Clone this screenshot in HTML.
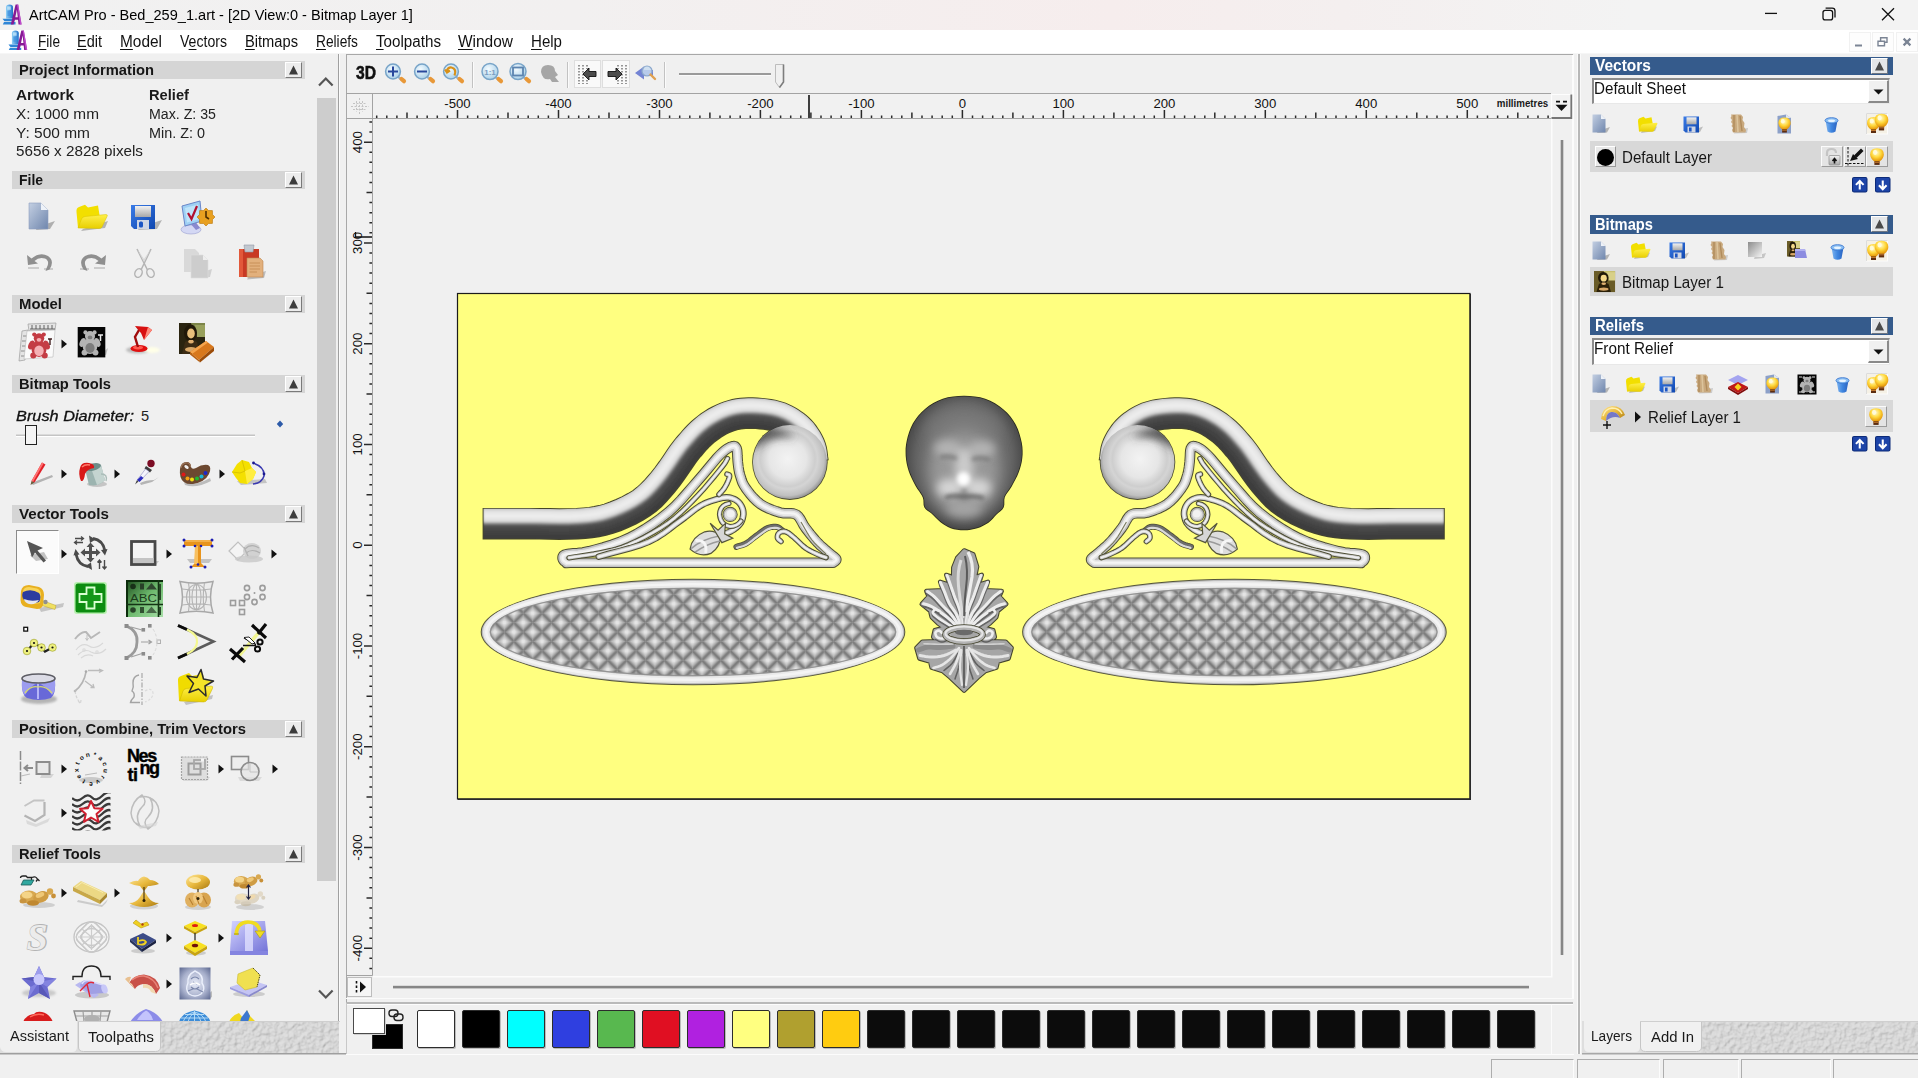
<!DOCTYPE html>
<html lang="en"><head><meta charset="utf-8"><title>ArtCAM Pro - Bed_259_1.art</title>
<style>
html,body{margin:0;padding:0;background:#f0f0f0;}
body{width:1918px;height:1078px;overflow:hidden;font-family:"Liberation Sans",sans-serif;}
#app{position:relative;width:1918px;height:1078px;overflow:hidden;background:#f0f0f0;}
.b{position:absolute;box-sizing:border-box;}
.t{position:absolute;white-space:nowrap;transform-origin:0 50%;}
svg{position:absolute;overflow:visible;}
u{text-decoration:underline;text-underline-offset:2px;}

</style></head>
<body>
<div id="app">
<div class="b" style="left:0px;top:0px;width:1918px;height:30px;background:linear-gradient(90deg,#f1f1f1 0%,#f2f0f0 30%,#f6eded 58%,#f4efef 70%,#f3f3f3 85%,#f3f3f3 100%);"></div>
<svg style="left:2px;top:3.5px" width="20.0" height="21.0" viewBox="0 0 20 21">
<defs><linearGradient id="lgb2" x1="0" y1="0" x2="1" y2="0"><stop offset="0" stop-color="#8fd0f6"/><stop offset="1" stop-color="#1f6fc8"/></linearGradient></defs>
<path d="M4 3.200Q4 0.500 7.500 0.500Q11 0.500 11 3.200V14.500H4Z" fill="url(#lgb2)"/>
<rect x="5.200" y="2.400" width="3.600" height="3.400" fill="#cdeefc" opacity=".75"/>
<rect x="5.500" y="7" width="4" height="5" fill="#3a8ee0" opacity=".6"/>
<path d="M0.500 14.800H12.500V17.300H2.500ZM2 18H13.500V20.500H0.800Z" fill="#2f86d6"/>
<path d="M13.600 0.500H16.200L19.600 20.400H16.500L16 15.800H12.800L11.600 20.400H8.800ZM13.300 13.200H15.800L14.900 5.500Z" fill="#861a94" fill-rule="evenodd"/>
<path d="M15 0.700L16.200 0.500L19.600 20.400H18Z" fill="#d25adc" opacity=".75"/>
</svg>
<span class="t " style="left:29px;top:6.81px;font-size:14.8px;line-height:17.02px;color:#000;transform:scaleX(0.9834);">ArtCAM Pro - Bed_259_1.art - [2D View:0 - Bitmap Layer 1]</span>
<svg style="left:1750px;top:0" width="168" height="30" viewBox="0 0 168 30" fill="none" stroke="#111" stroke-width="1.3">
<path d="M15 13.4H27"/>
<rect x="73" y="10.3" width="9.6" height="9.6" rx="2.2"/><path d="M75.6 8.1H82.2Q85 8.1 85 10.9V17.4"/>
<path d="M132 8.2L144 20.2M144 8.2L132 20.2"/></svg>
<div class="b" style="left:0px;top:30px;width:1918px;height:23px;background:#fff;"></div>
<div class="b" style="left:0px;top:53px;width:1918px;height:1px;background:#f6f6f6;"></div>
<svg style="left:8px;top:30px" width="19.6" height="20.6" viewBox="0 0 20 21">
<defs><linearGradient id="lgb8" x1="0" y1="0" x2="1" y2="0"><stop offset="0" stop-color="#8fd0f6"/><stop offset="1" stop-color="#1f6fc8"/></linearGradient></defs>
<path d="M4 3.200Q4 0.500 7.500 0.500Q11 0.500 11 3.200V14.500H4Z" fill="url(#lgb8)"/>
<rect x="5.200" y="2.400" width="3.600" height="3.400" fill="#cdeefc" opacity=".75"/>
<rect x="5.500" y="7" width="4" height="5" fill="#3a8ee0" opacity=".6"/>
<path d="M0.500 14.800H12.500V17.300H2.500ZM2 18H13.500V20.500H0.800Z" fill="#2f86d6"/>
<path d="M13.600 0.500H16.200L19.600 20.400H16.500L16 15.800H12.800L11.600 20.400H8.800ZM13.300 13.200H15.800L14.900 5.500Z" fill="#861a94" fill-rule="evenodd"/>
<path d="M15 0.700L16.200 0.500L19.600 20.400H18Z" fill="#d25adc" opacity=".75"/>
</svg>
<span class="t" style="left:38px;top:32.98px;font-size:15.6px;line-height:18px;color:#111;transform:scaleX(0.8752)"><u>F</u>ile</span>
<span class="t" style="left:77px;top:32.98px;font-size:15.6px;line-height:18px;color:#111;transform:scaleX(0.9300)"><u>E</u>dit</span>
<span class="t" style="left:120px;top:32.98px;font-size:15.6px;line-height:18px;color:#111;transform:scaleX(0.9885)"><u>M</u>odel</span>
<span class="t" style="left:180px;top:32.98px;font-size:15.6px;line-height:18px;color:#111;transform:scaleX(0.9034)">V<u>e</u>ctors</span>
<span class="t" style="left:245px;top:32.98px;font-size:15.6px;line-height:18px;color:#111;transform:scaleX(0.9405)"><u>B</u>itmaps</span>
<span class="t" style="left:316px;top:32.98px;font-size:15.6px;line-height:18px;color:#111;transform:scaleX(0.8808)"><u>R</u>eliefs</span>
<span class="t" style="left:376px;top:32.98px;font-size:15.6px;line-height:18px;color:#111;transform:scaleX(0.9733)"><u>T</u>oolpaths</span>
<span class="t" style="left:458px;top:32.98px;font-size:15.6px;line-height:18px;color:#111;transform:scaleX(0.9913)"><u>W</u>indow</span>
<span class="t" style="left:531px;top:32.98px;font-size:15.6px;line-height:18px;color:#111;transform:scaleX(0.9662)"><u>H</u>elp</span>
<div class="b" style="left:1849px;top:32px;width:22px;height:20px;background:#fdfdfd;border:1px solid #f1f1f1;"></div>
<div class="b" style="left:1872px;top:32px;width:22px;height:20px;background:#fdfdfd;border:1px solid #f1f1f1;"></div>
<div class="b" style="left:1896px;top:32px;width:22px;height:20px;background:#fdfdfd;border:1px solid #f1f1f1;"></div>
<svg style="left:1849px;top:32px" width="69" height="20" viewBox="0 0 69 20" fill="none" stroke="#7b8494" stroke-width="1.6">
<path d="M6 13.5H13" stroke-width="2"/>
<path d="M29 9.2h6.5v4.6H29zM31.6 8.6V5.8h6.4v4.4h-2" stroke-width="1.4"/>
<path d="M54.6 6.6L61.4 13.4M61.4 6.6L54.6 13.4" stroke-width="2.2"/></svg>
<div class="b" style="left:0px;top:1054px;width:1918px;height:24px;background:#f0f0f0;"></div>
<div class="b" style="left:1491px;top:1058.6px;width:83px;height:22px;border-left:1.3px solid #adadad;border-top:1.3px solid #adadad;border-right:1.3px solid #fcfcfc;"></div>
<div class="b" style="left:1577px;top:1058.6px;width:83px;height:22px;border-left:1.3px solid #adadad;border-top:1.3px solid #adadad;border-right:1.3px solid #fcfcfc;"></div>
<div class="b" style="left:1662.5px;top:1058.6px;width:76px;height:22px;border-left:1.3px solid #adadad;border-top:1.3px solid #adadad;border-right:1.3px solid #fcfcfc;"></div>
<div class="b" style="left:1741px;top:1058.6px;width:90px;height:22px;border-left:1.3px solid #adadad;border-top:1.3px solid #adadad;border-right:1.3px solid #fcfcfc;"></div>
<div class="b" style="left:1833px;top:1058.6px;width:90px;height:22px;border-left:1.3px solid #adadad;border-top:1.3px solid #adadad;border-right:1.3px solid #fcfcfc;"></div>
<div class="b" style="left:0px;top:54px;width:339px;height:1000px;background:#f0f0f0;"></div>
<div class="b" style="left:338px;top:54px;width:1px;height:968px;background:#a0a0a0;"></div>
<div class="b" style="left:339px;top:54px;width:1px;height:968px;background:#fbfbfb;"></div>
<div class="b" style="left:12px;top:61px;width:293px;height:18px;background:#d5d5d5;"></div>
<div class="b" style="left:285px;top:62px;width:17px;height:16px;background:#ececec;border-top:1px solid #fff;border-left:1px solid #fff;border-right:1px solid #7a7a7a;border-bottom:1px solid #7a7a7a;"></div>
<svg style="left:288px;top:65px" width="11" height="10" viewBox="0 0 11 10"><path d="M5.5 0.5L10 9.5H1Z" fill="#3c3c3c"/></svg>
<span class="t " style="left:19px;top:60.83px;font-size:15px;line-height:17.25px;color:#161616;font-weight:bold;transform:scaleX(0.9817);">Project Information</span>
<div class="b" style="left:12px;top:171px;width:293px;height:18px;background:#d5d5d5;"></div>
<div class="b" style="left:285px;top:172px;width:17px;height:16px;background:#ececec;border-top:1px solid #fff;border-left:1px solid #fff;border-right:1px solid #7a7a7a;border-bottom:1px solid #7a7a7a;"></div>
<svg style="left:288px;top:175px" width="11" height="10" viewBox="0 0 11 10"><path d="M5.5 0.5L10 9.5H1Z" fill="#3c3c3c"/></svg>
<span class="t " style="left:19px;top:170.83px;font-size:15px;line-height:17.25px;color:#161616;font-weight:bold;transform:scaleX(0.9288);">File</span>
<div class="b" style="left:12px;top:295px;width:293px;height:18px;background:#d5d5d5;"></div>
<div class="b" style="left:285px;top:296px;width:17px;height:16px;background:#ececec;border-top:1px solid #fff;border-left:1px solid #fff;border-right:1px solid #7a7a7a;border-bottom:1px solid #7a7a7a;"></div>
<svg style="left:288px;top:299px" width="11" height="10" viewBox="0 0 11 10"><path d="M5.5 0.5L10 9.5H1Z" fill="#3c3c3c"/></svg>
<span class="t " style="left:19px;top:294.82px;font-size:15px;line-height:17.25px;color:#161616;font-weight:bold;transform:scaleX(0.9924);">Model</span>
<div class="b" style="left:12px;top:375px;width:293px;height:18px;background:#d5d5d5;"></div>
<div class="b" style="left:285px;top:376px;width:17px;height:16px;background:#ececec;border-top:1px solid #fff;border-left:1px solid #fff;border-right:1px solid #7a7a7a;border-bottom:1px solid #7a7a7a;"></div>
<svg style="left:288px;top:379px" width="11" height="10" viewBox="0 0 11 10"><path d="M5.5 0.5L10 9.5H1Z" fill="#3c3c3c"/></svg>
<span class="t " style="left:19px;top:374.82px;font-size:15px;line-height:17.25px;color:#161616;font-weight:bold;transform:scaleX(0.9799);">Bitmap Tools</span>
<div class="b" style="left:12px;top:505px;width:293px;height:18px;background:#d5d5d5;"></div>
<div class="b" style="left:285px;top:506px;width:17px;height:16px;background:#ececec;border-top:1px solid #fff;border-left:1px solid #fff;border-right:1px solid #7a7a7a;border-bottom:1px solid #7a7a7a;"></div>
<svg style="left:288px;top:509px" width="11" height="10" viewBox="0 0 11 10"><path d="M5.5 0.5L10 9.5H1Z" fill="#3c3c3c"/></svg>
<span class="t " style="left:19px;top:504.82px;font-size:15px;line-height:17.25px;color:#161616;font-weight:bold;transform:scaleX(1.0122);">Vector Tools</span>
<div class="b" style="left:12px;top:720px;width:293px;height:18px;background:#d5d5d5;"></div>
<div class="b" style="left:285px;top:721px;width:17px;height:16px;background:#ececec;border-top:1px solid #fff;border-left:1px solid #fff;border-right:1px solid #7a7a7a;border-bottom:1px solid #7a7a7a;"></div>
<svg style="left:288px;top:724px" width="11" height="10" viewBox="0 0 11 10"><path d="M5.5 0.5L10 9.5H1Z" fill="#3c3c3c"/></svg>
<span class="t " style="left:19px;top:719.82px;font-size:15px;line-height:17.25px;color:#161616;font-weight:bold;transform:scaleX(0.9867);">Position, Combine, Trim Vectors</span>
<div class="b" style="left:12px;top:845px;width:293px;height:18px;background:#d5d5d5;"></div>
<div class="b" style="left:285px;top:846px;width:17px;height:16px;background:#ececec;border-top:1px solid #fff;border-left:1px solid #fff;border-right:1px solid #7a7a7a;border-bottom:1px solid #7a7a7a;"></div>
<svg style="left:288px;top:849px" width="11" height="10" viewBox="0 0 11 10"><path d="M5.5 0.5L10 9.5H1Z" fill="#3c3c3c"/></svg>
<span class="t " style="left:19px;top:844.82px;font-size:15px;line-height:17.25px;color:#161616;font-weight:bold;transform:scaleX(0.9773);">Relief Tools</span>
<span class="t " style="left:16px;top:86.24px;font-size:15.2px;line-height:17.48px;color:#1a1a1a;font-weight:bold;transform:scaleX(1.0099);">Artwork</span>
<span class="t " style="left:149px;top:86.24px;font-size:15.2px;line-height:17.48px;color:#1a1a1a;font-weight:bold;transform:scaleX(0.9664);">Relief</span>
<span class="t " style="left:16px;top:104.85px;font-size:15.3px;line-height:17.59px;color:#222;transform:scaleX(1.0062);">X: 1000 mm</span>
<span class="t " style="left:149px;top:104.85px;font-size:15.3px;line-height:17.59px;color:#222;transform:scaleX(0.9271);">Max. Z: 35</span>
<span class="t " style="left:16px;top:123.65px;font-size:15.3px;line-height:17.59px;color:#222;transform:scaleX(1.0119);">Y: 500 mm</span>
<span class="t " style="left:149px;top:123.65px;font-size:15.3px;line-height:17.59px;color:#222;transform:scaleX(0.9410);">Min. Z: 0</span>
<span class="t " style="left:16px;top:142.45px;font-size:15.3px;line-height:17.59px;color:#222;transform:scaleX(0.9953);">5656 x 2828 pixels</span>
<span class="t " style="left:16px;top:407.79px;font-size:14.6px;line-height:16.79px;color:#111;font-style:italic;transform:scaleX(1.1187);-webkit-text-stroke:0.3px #111;">Brush Diameter:</span>
<span class="t " style="left:141px;top:407.79px;font-size:14.6px;line-height:16.79px;color:#222;">5</span>
<div class="b" style="left:16px;top:434px;width:239px;height:3px;background:#c4c4c4;border-bottom:1px solid #fff;border-top:1px solid #dadada;"></div>
<div class="b" style="left:25px;top:425px;width:12px;height:20px;background:#f4f4f4;border:1.5px solid #222;"></div>
<svg style="left:276px;top:420px" width="8" height="8" viewBox="0 0 8 8"><path d="M4 0.5L7.2 4L4 7.5L0.8 4Z" fill="#2c5aa8"/></svg>
<div class="b" style="left:316px;top:62px;width:21px;height:950px;background:#f0f0f0;"></div>
<div class="b" style="left:316.5px;top:98px;width:19px;height:783px;background:#cdcdcd;"></div>
<svg style="left:316px;top:74px" width="20" height="16" viewBox="0 0 20 16" fill="none" stroke="#555" stroke-width="2.2"><path d="M3 11.5L9.8 4.5L16.6 11.5"/></svg>
<svg style="left:316px;top:986px" width="20" height="16" viewBox="0 0 20 16" fill="none" stroke="#555" stroke-width="2.2"><path d="M3 4.5L9.8 11.5L16.6 4.5"/></svg>
<svg width="0" height="0" style="left:0;top:0"><defs>
<linearGradient id="gDoc" x1="0" y1="0" x2="1" y2="1"><stop offset="0" stop-color="#c3cfe2"/><stop offset="1" stop-color="#6f86ad"/></linearGradient>
<linearGradient id="gFold" x1="0" y1="0" x2="0" y2="1"><stop offset="0" stop-color="#fff04a"/><stop offset="1" stop-color="#e8cf00"/></linearGradient>
<linearGradient id="gSave" x1="0" y1="0" x2="1" y2="1"><stop offset="0" stop-color="#3a7be6"/><stop offset="1" stop-color="#0f47b0"/></linearGradient>
<linearGradient id="gGrey" x1="0" y1="0" x2="0" y2="1"><stop offset="0" stop-color="#f2f2f2"/><stop offset="1" stop-color="#a8a8a8"/></linearGradient>
<linearGradient id="gGold" x1="0" y1="0" x2="1" y2="1"><stop offset="0" stop-color="#ffe9a0"/><stop offset="0.5" stop-color="#e8b83c"/><stop offset="1" stop-color="#a87810"/></linearGradient>
<linearGradient id="gLav" x1="0" y1="0" x2="1" y2="1"><stop offset="0" stop-color="#d4d4ff"/><stop offset="1" stop-color="#7474d8"/></linearGradient>
<radialGradient id="gBulb" cx="0.45" cy="0.35" r="0.7"><stop offset="0" stop-color="#fffbd0"/><stop offset="0.5" stop-color="#ffd83c"/><stop offset="1" stop-color="#e08a00"/></radialGradient>
<radialGradient id="gLens" cx="0.4" cy="0.35" r="0.7"><stop offset="0" stop-color="#f4fbff"/><stop offset="1" stop-color="#a8cfe8"/></radialGradient>
<linearGradient id="gBin" x1="0" y1="0" x2="1" y2="0"><stop offset="0" stop-color="#7db4f0"/><stop offset="0.5" stop-color="#3f86e0"/><stop offset="1" stop-color="#2a62c0"/></linearGradient>
<filter id="fS" x="-30%" y="-30%" width="160%" height="160%"><feGaussianBlur stdDeviation="0.5"/></filter>
<filter id="fS1" x="-30%" y="-30%" width="160%" height="160%"><feGaussianBlur stdDeviation="1"/></filter>
</defs></svg><svg style="left:28px;top:202px" width="28" height="29" viewBox="0 0 28 29"><g transform="scale(1.0)"><path d="M9 25L27 19L22 27L8 28Z" fill="#9a9a9a" opacity=".75" filter="url(#fS)"/><path d="M1 1H13L20 8V27H1Z" fill="url(#gDoc)" stroke="#8fa0bf" stroke-width=".6"/><path d="M13 1L20 8H13Z" fill="#eef2f8"/></g></svg><svg style="left:75px;top:204px" width="34" height="28" viewBox="0 0 34 28"><g transform="scale(1.0)"><path d="M8 25L33 17L30 24L6 27Z" fill="#9a9a9a" opacity=".7" filter="url(#fS)"/><path d="M1.500 8Q1 4 4 3L10 0.800L13 3.500L23 1.500L25 14L3 24Z" fill="#f2df00"/><path d="M3 24L6.500 15Q7 13 10 12.500L31 10.500Q33 10.500 32 12.500L27 23Q26 24.500 24 24.500Z" fill="url(#gFold)" stroke="#d8c200" stroke-width=".5"/></g></svg><svg style="left:130px;top:204px" width="33" height="27" viewBox="0 0 33 27"><g transform="scale(1.0)"><path d="M10 23L32 16L27 25L8 26Z" fill="#9a9a9a" opacity=".7" filter="url(#fS)"/><path d="M1 1H25V25H4L1 22Z" fill="url(#gSave)"/><rect x="5" y="2" width="16" height="11" fill="url(#gGrey)"/><rect x="7" y="16" width="12" height="9" fill="#cfd6e4"/><rect x="9" y="17.500" width="4" height="6" rx="1.5" fill="#1b55c4"/></g></svg><svg style="left:180px;top:200px" width="36" height="35" viewBox="0 0 36 35"><ellipse cx="11" cy="29.500" rx="10" ry="4.500" fill="#d4d8f4" stroke="#9aa0d0" stroke-width=".6"/><path d="M9 22L16 30L20 28L15 21Z" fill="#8a8ad0"/><path d="M2 6L20 1L22 21L5 26Z" fill="#9fd0f4" stroke="#6a86c8" stroke-width="1"/><path d="M5 8L18 4.500L19.500 19L7 22.500Z" fill="#bfe4fa"/><path d="M8 13L11.500 19L17 6" fill="none" stroke="#b01030" stroke-width="2.200"/><g transform="translate(26 17)"><path d="M0 -9L2.500 -6.500L6.400 -6.400L6.500 -2.500L9 0L6.500 2.500L6.400 6.400L2.500 6.500L0 9L-2.500 6.500L-6.400 6.400L-6.500 2.500L-9 0L-6.500 -2.500L-6.400 -6.400L-2.500 -6.500Z" fill="#e8a020" stroke="#b87408" stroke-width=".6"/><path d="M0 -6V0L3 2" stroke="#503000" stroke-width="1.600" fill="none"/></g></svg><svg style="left:26px;top:253px" width="29" height="21" viewBox="0 0 29 21"><g transform=""><path d="M2 15H13M18 16H27" stroke="#c9c9c9" stroke-width="2" opacity=".9"/><path d="M1 2L2 12L12 10.500L8.500 8Q13 3.500 19 5.500Q24 8 21 14L19.500 18L23.500 16.500Q29 8 22 3Q14 -1.500 5.500 5.500Z" fill="#8f8f8f"/></g></svg><svg style="left:78px;top:253px" width="29" height="21" viewBox="0 0 29 21"><g transform="translate(29 0) scale(-1 1)"><path d="M2 15H13M18 16H27" stroke="#c9c9c9" stroke-width="2" opacity=".9"/><path d="M1 2L2 12L12 10.500L8.500 8Q13 3.500 19 5.500Q24 8 21 14L19.500 18L23.500 16.500Q29 8 22 3Q14 -1.500 5.500 5.500Z" fill="#8f8f8f"/></g></svg><svg style="left:132px;top:248px" width="25" height="31" viewBox="0 0 25 31"><g fill="none" stroke="#b4b4b4" stroke-width="1.500"><path d="M5 1L15.500 22M19 1L9 22"/><ellipse cx="6.500" cy="25" rx="3.500" ry="4.500" transform="rotate(25 6.500 25)"/><ellipse cx="18.500" cy="25" rx="3.500" ry="4.500" transform="rotate(-25 18.500 25)"/></g><path d="M5 1L12 14L19 1L12 11Z" fill="#d8d8d8"/></svg><svg style="left:182px;top:247px" width="32" height="32" viewBox="0 0 32 32"><path d="M10 28L30 22L28 30L9 31Z" fill="#c4c4c4" opacity=".7" filter="url(#fS)"/><path d="M2 2H13L17 6V25H2Z" fill="#d9d9d9"/><path d="M9 8H21L26 13V31H9Z" fill="#cdcdcd" stroke="#dedede" stroke-width=".6"/><path d="M21 8L26 13H21Z" fill="#eee"/></svg><svg style="left:237px;top:244px" width="30" height="36" viewBox="0 0 30 36"><path d="M12 32L29 27L27 34L10 35.500Z" fill="#a8a8a8" opacity=".7" filter="url(#fS)"/><path d="M2 5H22V33H2Z" fill="#c83a24"/><path d="M2 5H6V33H2Z" fill="#e2583a"/><path d="M7 1H17L16 8H8Z" fill="#c2c8d0" stroke="#9098a4" stroke-width=".6"/><path d="M10 14H23L26 17V33H10Z" fill="#e2b07c" stroke="#c08850" stroke-width=".6"/><path d="M12.500 19H23M12.500 22H23M12.500 25H23M12.500 28H20" stroke="#c89058" stroke-width="1.200"/></svg><svg style="left:18px;top:322px" width="40" height="40" viewBox="0 0 40 40"><path d="M10 2L38 1L37 8L11 9Z" fill="#e4e4e4" stroke="#9c9c9c" stroke-width=".7"/><path d="M4 9L10 8L7 38L1 39Z" fill="#e4e4e4" stroke="#9c9c9c" stroke-width=".7"/><path d="M12 7H37M14 3V7M18 3V7M22 3V7M26 3V7M30 3V7M34 3V7" stroke="#555" stroke-width=".9"/><path d="M5 14H9M4 19H8M4 24H8M3 29H7M3 34H7" stroke="#777" stroke-width=".8"/><path d="M9 9L37 8L35 35L6 37Z" fill="#fafafa" stroke="#b8b8b8" stroke-width=".6"/><g transform="translate(21 23) scale(.95)"><ellipse cx="0" cy="4" rx="8" ry="8.500" fill="#c43c44"/><circle cx="0" cy="-7" r="5.500" fill="#c43c44"/><circle cx="-5" cy="-11" r="2.200" fill="#c43c44"/><circle cx="5" cy="-11" r="2.200" fill="#c43c44"/><ellipse cx="-8" cy="0" rx="3" ry="5" fill="#c43c44" transform="rotate(25 -8 0)"/><ellipse cx="8" cy="0" rx="3" ry="5" fill="#c43c44" transform="rotate(-25 8 0)"/><circle cx="-6" cy="11" r="3.200" fill="#c43c44"/><circle cx="6" cy="11" r="3.200" fill="#c43c44"/><ellipse cx="0" cy="6" rx="5" ry="5.500" fill="#f4b0b4"/><ellipse cx="0" cy="-5.500" rx="2.500" ry="2" fill="#f4b0b4"/></g><path d="M30 17H34M32 17V23" stroke="#402020" stroke-width="1.400"/></svg><svg style="left:61px;top:338.5px" width="7" height="10" viewBox="0 0 7 10"><path d="M0.5 0.500L6 5L0.500 9.500Z" fill="#111"/></svg><svg style="left:77px;top:327px" width="32" height="32" viewBox="0 0 32 32"><path d="M24 27L31 21L29 28Z" fill="#aaa" opacity=".7"/><rect x="0.700" y="0" width="27.600" height="30.400" fill="#050505"/><g transform="translate(13 15.500) scale(.92)"><ellipse cx="0" cy="4" rx="8" ry="8.500" fill="#b4b4b4"/><circle cx="0" cy="-7" r="5.500" fill="#b4b4b4"/><circle cx="-5" cy="-11" r="2.200" fill="#b4b4b4"/><circle cx="5" cy="-11" r="2.200" fill="#b4b4b4"/><ellipse cx="-8" cy="0" rx="3" ry="5" fill="#b4b4b4" transform="rotate(25 -8 0)"/><ellipse cx="8" cy="0" rx="3" ry="5" fill="#b4b4b4" transform="rotate(-25 8 0)"/><circle cx="-6" cy="11" r="3.200" fill="#b4b4b4"/><circle cx="6" cy="11" r="3.200" fill="#b4b4b4"/><ellipse cx="0" cy="6" rx="5" ry="5.500" fill="#7c7c7c"/><ellipse cx="0" cy="-5.500" rx="2.500" ry="2" fill="#7c7c7c"/></g><path d="M21 8H26M23.500 8V14" stroke="#eee" stroke-width="1.500"/></svg><svg style="left:124px;top:324px" width="38" height="32" viewBox="0 0 38 32"><ellipse cx="14" cy="26" rx="12" ry="3.500" fill="#9a9a9a" opacity=".6" filter="url(#fS1)"/><ellipse cx="28" cy="26" rx="8" ry="3" fill="#ffffe8" filter="url(#fS1)"/><ellipse cx="15" cy="24.500" rx="8.500" ry="3.600" fill="#e01010"/><ellipse cx="14" cy="23.600" rx="5" ry="1.800" fill="#ff5a50"/><path d="M14 23L11 13L15 6" fill="none" stroke="#a00c0c" stroke-width="2.400"/><path d="M11 2L24 3L28 6L20 16L17 9Z" fill="#d81010"/><path d="M24 3L28 6L20 16Z" fill="#ff8a7a"/><path d="M11 2L17 9L14 5Z" fill="#8a0808"/></svg><svg style="left:179px;top:323px" width="37" height="40" viewBox="0 0 37 40"><rect x="0" y="0" width="26" height="31" fill="#2a2410"/><path d="M0 0H26V12Q20 6 14 8L12 0Z" fill="#7c8448"/><path d="M16 2H26V14H18Z" fill="#98a05c"/><ellipse cx="11.500" cy="10" rx="6.500" ry="8.500" fill="#201808"/><ellipse cx="12" cy="10.500" rx="3.800" ry="5" fill="#e8c07c"/><path d="M6 19Q12 15 18 19L21 31H3Z" fill="#3c2c14"/><path d="M9 19Q12 22 15 19L14 17H10Z" fill="#e0b070"/><ellipse cx="12" cy="26.500" rx="6" ry="2.400" fill="#d8a868"/><path d="M11 29L27 18L35 24L20 37Z" fill="#d8781c"/><path d="M11 29L27 18L29 19.500L13 31Z" fill="#f4a44c"/><path d="M20 37L35 24L35 28L21 39.500Z" fill="#9c4c08"/><path d="M11 29L20 37L21 39.500L11 31.500Z" fill="#b86010"/></svg><svg style="left:28px;top:460px" width="27" height="26" viewBox="0 0 27 26"><path d="M3 23L24 15L25 17L5 25Z" fill="#a4a4a4" opacity=".8" filter="url(#fS)"/><path d="M3.500 21L14 2.500L17.500 4.500L6.500 22.500Z" fill="#e02028"/><path d="M14 2.500L15.600 3.400L5 22L3.500 21Z" fill="#ff7070"/><path d="M3.500 21L6.500 22.500L2.500 25Z" fill="#6c5c3c"/></svg><svg style="left:61px;top:468.5px" width="7" height="10" viewBox="0 0 7 10"><path d="M0.5 0.500L6 5L0.500 9.500Z" fill="#111"/></svg><svg style="left:77px;top:460px" width="32" height="29" viewBox="0 0 32 29"><ellipse cx="20" cy="24" rx="10" ry="3" fill="#aaa" opacity=".6" filter="url(#fS)"/><path d="M8 9L24 5L28 20Q22 27 12 25Z" fill="#9cb4b0"/><path d="M14 8L24 5L28 20Q24 24 20 25Z" fill="#c4d4d0"/><ellipse cx="16" cy="7" rx="8.200" ry="3.600" fill="#6c8c88" transform="rotate(-14 16 7)"/><path d="M3 8Q4 2 12 3Q18 4 17 8Q10 9 8 14Q7 22 4 21Q1 14 3 8Z" fill="#d81818"/><path d="M5 7Q8 4 13 5" stroke="#ff7a6a" stroke-width="1.400" fill="none"/><path d="M24 14Q31 14 29 21" fill="none" stroke="#aabcb8" stroke-width="1.300"/></svg><svg style="left:113.5px;top:468.5px" width="7" height="10" viewBox="0 0 7 10"><path d="M0.5 0.500L6 5L0.500 9.500Z" fill="#111"/></svg><svg style="left:132px;top:458px" width="30" height="28" viewBox="0 0 30 28"><path d="M8 25Q14 22 22 22L27 19L20 24L9 27Z" fill="#9c9c9c" opacity=".7" filter="url(#fS)"/><circle cx="19" cy="5.500" r="3.700" fill="#7c0c24"/><path d="M14 8L20 12L18 14.500L12.500 10.500Z" fill="#3c3c3c"/><path d="M13.500 11L17 13.500L8 23L5.500 21.500Z" fill="#f4f4fc" stroke="#8c8cc0" stroke-width=".6"/><path d="M9 18L11.500 20L7.500 24L5 22Z" fill="#2c2cc0"/><path d="M5 22L6.500 23.500L3 26.500Z" fill="#444"/></svg><svg style="left:178px;top:460px" width="34" height="26" viewBox="0 0 34 26"><path d="M6 22Q16 27 32 18L33 21Q18 29 7 25Z" fill="#9a9a9a" opacity=".6" filter="url(#fS)"/><path d="M2 9Q3 1 10 2Q13 3 13 7Q14 10 18 8Q24 4 30 5Q34 7 31 14Q27 22 15 24Q5 25 2.500 17Q1.500 13 2 9Z" fill="#6c4830"/><path d="M3 8Q4 2.500 10 3Q12.500 4 12.500 7" fill="none" stroke="#9c7458" stroke-width="1.200"/><ellipse cx="8.500" cy="7" rx="2.400" ry="1.600" fill="#f0f0f0" transform="rotate(35 8.500 7)"/><circle cx="5.500" cy="14.500" r="2" fill="#e01818"/><circle cx="9.500" cy="18.500" r="2" fill="#f4a010"/><circle cx="14" cy="19.500" r="2" fill="#f0e010"/><circle cx="19" cy="18.500" r="2" fill="#20b830"/><circle cx="23.500" cy="16.500" r="2" fill="#18b8d8"/><circle cx="27.500" cy="13" r="2" fill="#1c28c8"/></svg><svg style="left:219px;top:468.5px" width="7" height="10" viewBox="0 0 7 10"><path d="M0.5 0.500L6 5L0.500 9.500Z" fill="#111"/></svg><svg style="left:231px;top:459px" width="38" height="28" viewBox="0 0 38 28"><path d="M6 22L34 20L36 24L10 26Z" fill="#a8a8a8" opacity=".6" filter="url(#fS)"/><path d="M22 4Q34 8 33 17Q31 24 22 25" fill="none" stroke="#3838b0" stroke-width="1.500"/><circle cx="22.500" cy="4" r="1.400" fill="#181890"/><circle cx="33" cy="15" r="1.400" fill="#181890"/><path d="M1 13L6 5L11 1L18 3L21 9L25 13L22 20L16 25L9 24L5 19Z" fill="#f4e000"/><path d="M14 12L21 9L25 13L22 20L16 25Z" fill="#ffee40"/><path d="M1 13L9 14L14 12L11 1" fill="none" stroke="#d4bc00" stroke-width=".8"/></svg><div class="b" style="left:16px;top:530px;width:43px;height:44px;background:#fbfbfb;border-top:1px solid #8a8a8a;border-left:1px solid #8a8a8a;border-right:1px solid #fff;border-bottom:1px solid #fff;"></div><svg style="left:24px;top:538px" width="28" height="28" viewBox="0 0 28 28"><path d="M6 17L20 14L24 21L12 23Z" fill="#b4b4b4" opacity=".8" filter="url(#fS)"/><path d="M3 3L19 10L13.500 12.500L22 22.500L19.500 24.500L11 14.500L8 19.500Z" fill="#555"/></svg><svg style="left:61px;top:548.5px" width="7" height="10" viewBox="0 0 7 10"><path d="M0.5 0.500L6 5L0.500 9.500Z" fill="#111"/></svg><svg style="left:72px;top:534px" width="37" height="37" viewBox="0 0 37 37"><g fill="none" stroke="#4a4a4a" stroke-width="2.800"><path d="M21 4.500Q31 6 33 17"/><path d="M16 32.500Q6 31 4 20"/></g><path d="M17 1.500L23.500 5.500L18 9Z M33 21.500L35.500 15L29 16Z M20 36L13.500 32L19 28.500Z M3.500 15L1.500 21.500L7.500 20.500Z" fill="#4a4a4a"/><path d="M18.500 8.500L22.500 13H20V17H24V14.500L28.500 18.500L24 22.500V20H20V24H22.500L18.500 28.500L14.500 24H17V20H13V22.500L8.500 18.500L13 14.500V17H17V13H14.500Z" fill="#505050"/><path d="M3 4.500H11M9 2.500L11.500 4.500L9 6.500M11 8.500H3M5 6.500L2.500 8.500L5 10.500" stroke="#4a4a4a" stroke-width="1.300" fill="none"/><path d="M27.500 26V35M25.500 28.500L27.500 26L29.500 28.500M32.500 35V26M30.500 32.500L32.500 35L34.500 32.500" stroke="#4a4a4a" stroke-width="1.400" fill="none"/></svg><svg style="left:129px;top:539px" width="32" height="29" viewBox="0 0 32 29"><path d="M6 22H30L27 26H5Z" fill="#bdbdbd" opacity=".8"/><rect x="2.500" y="2.500" width="23.500" height="23" fill="#f4f4f4" stroke="#484848" stroke-width="2.800"/><rect x="4" y="19" width="20.500" height="5" fill="#c4c4c4"/></svg><svg style="left:166px;top:548.5px" width="7" height="10" viewBox="0 0 7 10"><path d="M0.5 0.500L6 5L0.500 9.500Z" fill="#111"/></svg><svg style="left:181px;top:537px" width="35" height="32" viewBox="0 0 35 32"><path d="M6 22H31L28 26H9Z" fill="#b8b8b8" opacity=".8" filter="url(#fS)"/><path d="M3 3H31V9H20V26L24 30H10L14 26V9H3Z" fill="#e8941c"/><path d="M14 9H17V27H13Z" fill="#f8c060"/><path d="M3 3H31V5H3Z" fill="#f4b048"/><g fill="#1c1cb0"><circle cx="3" cy="3" r="1.500"/><circle cx="31" cy="3" r="1.500"/><circle cx="3" cy="9" r="1.500"/><circle cx="31" cy="9" r="1.500"/><circle cx="14" cy="9" r="1.300"/><circle cx="20" cy="9" r="1.300"/><circle cx="10" cy="30" r="1.500"/><circle cx="24" cy="30" r="1.500"/><circle cx="17" cy="27.500" r="1.300"/></g></svg><svg style="left:227px;top:539px" width="40" height="26" viewBox="0 0 40 26"><path d="M2 12L11 3L20 12L11 21Z" fill="#f4f4f4" stroke="#c0c0c0" stroke-width="1.200"/><ellipse cx="25" cy="12" rx="9" ry="8" fill="#d2d2d2"/><path d="M18 10Q24 4 32 9M19 14Q25 9 33 14" stroke="#b0b0b0" stroke-width="1.200" fill="none"/><ellipse cx="22" cy="20" rx="14" ry="3.500" fill="#c8c8c8" opacity=".8"/><path d="M17 8L21 17" stroke="#b4b4b4" stroke-width="1.400"/></svg><svg style="left:271px;top:548.5px" width="7" height="10" viewBox="0 0 7 10"><path d="M0.5 0.500L6 5L0.500 9.500Z" fill="#111"/></svg><svg style="left:19px;top:583px" width="40" height="31" viewBox="0 0 40 31"><path d="M20 25L45 20L44 24L22 29Z" fill="#aaa" opacity=".6" filter="url(#fS)"/><path d="M22 17L37 22.500L36 26.500L21 22Z" fill="#f0e060" stroke="#b8a030" stroke-width=".5"/><path d="M2 8Q3 2 10 2L20 4Q25 6 25 12L24 22Q23 26 18 26L7 24Q2 23 1.500 17Z" fill="#e8b020"/><path d="M4 8Q5 4 10 4L18 5.500Q22 7 22 12L21 20Q14 22 5 18Z" fill="#f8d458"/><path d="M4 9Q12 5 20 10Q23 14 20 19Q12 22 5 17Q2 13 4 9Z" fill="#2c3ca0"/><path d="M5 16Q12 19 20 17Q17 22 10 21Q6 20 5 16Z" fill="#e8e8f0"/><circle cx="26.500" cy="19" r="2.200" fill="#909090"/></svg><svg style="left:73px;top:581px" width="35" height="34" viewBox="0 0 35 34"><rect x="1" y="1" width="33" height="32" rx="3" fill="#b8f0b0"/><rect x="2.500" y="2.500" width="30" height="29" rx="2.500" fill="#0c8c10"/><path d="M13.500 6.500H21.500V13H28.500V21H21.500V27.500H13.500V21H6.500V13H13.500Z" fill="#149818" stroke="#d8ffd0" stroke-width="1.800"/></svg><svg style="left:126px;top:580px" width="37" height="37" viewBox="0 0 37 37"><defs><linearGradient id="gAbc" x1="0" y1="0" x2="1" y2="1"><stop offset="0" stop-color="#1c4c1c"/><stop offset=".5" stop-color="#6cb86c"/><stop offset="1" stop-color="#a8e0a8"/></linearGradient></defs><rect x="0" y="0" width="37" height="37" fill="url(#gAbc)"/><path d="M0 0H37V2H2V37H0Z" fill="#0c2c0c"/><path d="M0 24.500H37M32.500 0V37" stroke="#143414" stroke-width="1.600"/><circle cx="7" cy="6.500" r="2.800" fill="#183018"/><rect x="14" y="3.500" width="4" height="6" fill="#284028"/><path d="M20 9.500L25.500 3L31 9.500Z" fill="#304830"/><text x="4" y="21.500" font-size="11.500" font-family="Liberation Sans, sans-serif" fill="#1c3c1c" textLength="27" lengthAdjust="spacingAndGlyphs">ABC</text><circle cx="7" cy="30" r="2.800" fill="#284428"/><rect x="14" y="27" width="4" height="6" fill="#305030"/><path d="M20 33L25.500 26.500L31 33Z" fill="#486848"/><path d="M34 4V20M34 27V35" stroke="#284828" stroke-width="2"/></svg><svg style="left:178px;top:580px" width="37" height="35" viewBox="0 0 37 35"><path d="M2 1.500Q18 5 35 1.500Q30 17 35 33Q18 29.500 2 33Q7 17 2 1.500Z" fill="#ececec" stroke="#a8a8a8" stroke-width="1.500"/><g fill="none" stroke="#b4b4b4" stroke-width="1.100"><ellipse cx="18.500" cy="17" rx="10" ry="12.500"/><ellipse cx="18.500" cy="17" rx="4.500" ry="12.500"/><path d="M8.500 17H28.500M10 10H27M10 24H27M4 9Q18 11 33 9M5 17H32M4 25Q18 23 33 25M10.500 3Q13 17 10.500 31M18.500 3.500V30.500M26.500 3Q24 17 26.500 31"/></g></svg><svg style="left:229px;top:583px" width="40" height="34" viewBox="0 0 40 34"><g fill="none" stroke="#9c9c9c" stroke-width="1.600"><rect x="1.500" y="17.500" width="5" height="5"/><rect x="10.500" y="17.500" width="5" height="5"/><rect x="10.500" y="26.500" width="5" height="5"/><circle cx="18" cy="5" r="2.600"/><circle cx="33.500" cy="5" r="2.600"/><circle cx="18" cy="14" r="2.600"/><circle cx="33.500" cy="14" r="2.600"/><circle cx="25.500" cy="19" r="2.600"/></g><circle cx="25.500" cy="10" r="1" fill="#9c9c9c"/></svg><svg style="left:20px;top:626px" width="38" height="30" viewBox="0 0 38 30"><rect x="3.800" y="1.300" width="3.800" height="3.800" fill="#fff" stroke="#111" stroke-width="1.300"/><path d="M7 25L14 17L21.500 21.500L25 25.500L32.500 21.500" fill="none" stroke="#222" stroke-width="2.200"/><g fill="#eef080" stroke="#a4a830" stroke-width=".7"><circle cx="7" cy="25" r="3.800"/><circle cx="14" cy="17" r="3.800"/><circle cx="21.500" cy="21.500" r="3.800"/><circle cx="32.500" cy="21.500" r="3.800"/></g><g fill="#111"><circle cx="7" cy="25" r="1.100"/><circle cx="14" cy="17" r="1.100"/><circle cx="21.500" cy="21.500" r="1.100"/><circle cx="32.500" cy="21.500" r="1.100"/></g></svg><svg style="left:73px;top:630px" width="37" height="30" viewBox="0 0 37 30"><path d="M2 9Q8 1 13 2L18 8L27 2" fill="none" stroke="#b8b8b8" stroke-width="2"/><path d="M14 5V10M12.500 8L14 10.500L15.500 8" stroke="#c0c0c0" stroke-width="1" fill="none"/><g fill="none" stroke="#d8d8d8" stroke-width="1.100"><path d="M3 20Q9 12 16 16Q22 20 30 13"/><path d="M5 25Q12 18 18 22Q26 26 33 19"/><path d="M8 28Q14 23 20 26"/><circle cx="11" cy="20" r="1.200"/><circle cx="24" cy="22" r="1.200"/></g></svg><svg style="left:124px;top:623px" width="40" height="38" viewBox="0 0 40 38"><path d="M2.500 3Q14 8 13 19Q13 30 2.500 35" fill="none" stroke="#9a9a9a" stroke-width="2.800"/><g fill="#8c8c8c"><rect x="0.500" y="1" width="4" height="4"/><rect x="0.500" y="33" width="4" height="4"/><rect x="17.500" y="5" width="3.600" height="3.600"/><rect x="17.500" y="29" width="3.600" height="3.600"/><rect x="24" y="1" width="3.600" height="3.600"/><rect x="24" y="33" width="3.600" height="3.600"/></g><path d="M7 4L18 7M7 34L18 30.500M17 19H27M24.500 17L27.500 19L24.500 21" stroke="#a0a0a0" stroke-width="1.200" fill="none"/><rect x="33" y="17" width="3.500" height="3.500" fill="none" stroke="#b0b0b0"/><path d="M29 6Q37 19 29 32" fill="none" stroke="#d8d8d8" stroke-width="1" stroke-dasharray="3 2"/></svg><svg style="left:176px;top:623px" width="40" height="38" viewBox="0 0 40 38"><path d="M2 2.500L37.500 18.500L2 35" fill="none" stroke="#5c5c5c" stroke-width="2.600" stroke-linejoin="miter"/><path d="M2 2.500L11 6.500M2 35L11 31" stroke="#0c0c0c" stroke-width="3"/><path d="M11 6.500Q22 12 21 19Q21 26 11 31" fill="none" stroke="#f4f890" stroke-width="2.200"/></svg><svg style="left:229px;top:623px" width="40" height="40" viewBox="0 0 40 40"><path d="M10 33L31 8" stroke="#f0f490" stroke-width="3.400"/><path d="M23 2L37 15M37 1L29 11" stroke="#0a0a0a" stroke-width="3.200"/><path d="M1 28L16 41M14 27L3 38.500" stroke="#0a0a0a" stroke-width="3.200" transform="translate(0 -2)"/><path d="M15 15L27 21.500M14 22.500H27" stroke="#111" stroke-width="1.300"/><path d="M15 14.500L20 14L26 20L23 21Z" fill="#fff" stroke="#111" stroke-width=".9"/><g fill="none" stroke="#0a0a0a" stroke-width="2"><circle cx="31" cy="19" r="2.600"/><circle cx="28.500" cy="26" r="2.600"/></g></svg><svg style="left:19px;top:671px" width="40" height="34" viewBox="0 0 40 34"><ellipse cx="20" cy="28" rx="18" ry="5" fill="#9c9c9c" opacity=".7" filter="url(#fS1)"/><path d="M3 9Q2 24 8 27Q20 31 32 27Q37 23 36 9Q20 15 3 9Z" fill="#6868d8"/><path d="M3 9Q2 20 6 24Q12 14 19 12Q26 14 33 24Q37 20 36 9Q20 15 3 9Z" fill="#9c9cf0"/><path d="M19 12V28" stroke="#c8c8ff" stroke-width="1.600"/><path d="M6 22Q12 14 19 16Q26 14 33 22" fill="none" stroke="#d4d870" stroke-width="1.300"/><ellipse cx="19.500" cy="7.500" rx="16.500" ry="4.500" fill="#c8c8dc" fill-opacity=".5" stroke="#5c5c64" stroke-width="1.600"/></svg><svg style="left:72px;top:668px" width="33" height="38" viewBox="0 0 33 38"><path d="M14 4Q12 16 3 23" fill="none" stroke="#b4b4b4" stroke-width="1.600"/><path d="M16 2.500H30M27 1L30.500 2.500L27 4.500M13 13L21 19M18.500 19.500L22 19.500L21 16" stroke="#bcbcbc" stroke-width="1.300" fill="none"/><path d="M3 23Q4 30 8 35M6 33L8.500 35.500L9 32" stroke="#d4d4d4" stroke-width="1.200" fill="none" stroke-dasharray="3 1.500"/><circle cx="14" cy="3.500" r="1.300" fill="#aaa"/><circle cx="3" cy="23" r="1.300" fill="#bbb"/></svg><svg style="left:128px;top:672px" width="30" height="34" viewBox="0 0 30 34"><path d="M14 1V33" stroke="#a8a8a8" stroke-width="1.200" stroke-dasharray="5 1.500 1.500 1.500"/><path d="M11 3Q5 4 5 11Q6 15 4 19Q7 21 6 25Q3 28 2.500 30.500H12" fill="none" stroke="#a4a4a4" stroke-width="1.400"/><path d="M17 19Q24 15 25 21Q25 27 17 30" fill="none" stroke="#dcdcdc" stroke-width="1.200" stroke-dasharray="2.500 1.800"/></svg><svg style="left:176px;top:668px" width="40" height="38" viewBox="0 0 40 38"><path d="M8 34L37 27L36 31L10 37Z" fill="#a4a4a4" opacity=".6" filter="url(#fS)"/><path d="M2 13Q1.500 9 5 8L13 5L16 8L27 6L29 20L3 33Z" fill="#f0dc00"/><path d="M3.500 33L7 23Q7.500 21 10.500 20.500L35 18Q37.500 18 36.500 20.500L31 32Q30 34 27.500 34Z" fill="url(#gFold)" stroke="#c8b000" stroke-width=".5"/><path d="M25 1.500L27.500 11L37.500 13L29 18L30 28L22.500 21L13 24.500L17.500 15.500L11 8L21 9.500Z" fill="#f4e428" stroke="#2c2c2c" stroke-width="1.500" stroke-linejoin="round"/></svg><svg style="left:18px;top:750px" width="36" height="36" viewBox="0 0 36 36"><path d="M24 24H36L33 28H22Z" fill="#c8c8c8" opacity=".7"/><path d="M2.500 1V34" stroke="#8c8c8c" stroke-width="1.500" stroke-dasharray="9 1.500"/><path d="M7 18H15M10 15L6.500 18L10 21" stroke="#8c8c8c" stroke-width="2" fill="none"/><rect x="18.500" y="12" width="13" height="12" fill="#e8e8e8" stroke="#8c8c8c" stroke-width="2"/><path d="M3 26L12 24" stroke="#bcbcbc" stroke-width="1.200"/></svg><svg style="left:61px;top:763.5px" width="7" height="10" viewBox="0 0 7 10"><path d="M0.5 0.500L6 5L0.500 9.500Z" fill="#111"/></svg><svg style="left:72px;top:750px" width="38" height="38" viewBox="0 0 38 38"><ellipse cx="19" cy="30" rx="12" ry="3" fill="#b8b8b8" opacity=".7"/><path d="M13 25L25 23" stroke="#bbb" stroke-width="1"/><text transform="rotate(-150.0 19 19) translate(19 6.500)" font-size="6.500" font-weight="bold" text-anchor="middle" fill="#111" font-family="Liberation Sans, sans-serif">t</text><text transform="rotate(-122.5 19 19) translate(19 6.500)" font-size="6.500" font-weight="bold" text-anchor="middle" fill="#111" font-family="Liberation Sans, sans-serif">e</text><text transform="rotate(-95.0 19 19) translate(19 6.500)" font-size="6.500" font-weight="bold" text-anchor="middle" fill="#111" font-family="Liberation Sans, sans-serif">x</text><text transform="rotate(-67.5 19 19) translate(19 6.500)" font-size="6.500" font-weight="bold" text-anchor="middle" fill="#111" font-family="Liberation Sans, sans-serif">t</text><text transform="rotate(-40.0 19 19) translate(19 6.500)" font-size="6.500" font-weight="bold" text-anchor="middle" fill="#111" font-family="Liberation Sans, sans-serif">o</text><text transform="rotate(-12.5 19 19) translate(19 6.500)" font-size="6.500" font-weight="bold" text-anchor="middle" fill="#111" font-family="Liberation Sans, sans-serif">n</text><text transform="rotate(15.0 19 19) translate(19 6.500)" font-size="6.500" font-weight="bold" text-anchor="middle" fill="#111" font-family="Liberation Sans, sans-serif">*</text><text transform="rotate(42.5 19 19) translate(19 6.500)" font-size="6.500" font-weight="bold" text-anchor="middle" fill="#111" font-family="Liberation Sans, sans-serif">a</text><text transform="rotate(70.0 19 19) translate(19 6.500)" font-size="6.500" font-weight="bold" text-anchor="middle" fill="#111" font-family="Liberation Sans, sans-serif">c</text><text transform="rotate(97.5 19 19) translate(19 6.500)" font-size="6.500" font-weight="bold" text-anchor="middle" fill="#111" font-family="Liberation Sans, sans-serif">u</text><text transform="rotate(125.0 19 19) translate(19 6.500)" font-size="6.500" font-weight="bold" text-anchor="middle" fill="#111" font-family="Liberation Sans, sans-serif">r</text><text transform="rotate(152.5 19 19) translate(19 6.500)" font-size="6.500" font-weight="bold" text-anchor="middle" fill="#111" font-family="Liberation Sans, sans-serif">v</text><text transform="rotate(180.0 19 19) translate(19 6.500)" font-size="6.500" font-weight="bold" text-anchor="middle" fill="#111" font-family="Liberation Sans, sans-serif">e</text></svg><span class="t" style="left:127px;top:747px;font-size:18px;line-height:18px;font-weight:bold;color:#000;letter-spacing:-1.400px;-webkit-text-stroke:0.400px #000;">Nes</span><span class="t" style="left:139.500px;top:758.500px;font-size:18px;line-height:18px;font-weight:bold;color:#000;letter-spacing:-1.400px;-webkit-text-stroke:0.400px #000;">ng</span><span class="t" style="left:127.500px;top:766px;font-size:18px;line-height:18px;font-weight:bold;color:#000;letter-spacing:-0.600px;-webkit-text-stroke:0.400px #000;">ti</span><svg style="left:180px;top:755px" width="32" height="28" viewBox="0 0 32 28"><path d="M4 22H30L27 26H3Z" fill="#cfcfcf" opacity=".7"/><rect x="1.500" y="2" width="26" height="22.500" fill="#dedede" stroke="#a4a4a4" stroke-width="1.200" stroke-dasharray="2 1"/><rect x="8.500" y="8.500" width="12" height="11" fill="none" stroke="#9c9c9c" stroke-width="2"/><rect x="14" y="5" width="11" height="9" fill="none" stroke="#a8a8a8" stroke-width="1.800"/><rect x="21" y="3.500" width="3" height="3" fill="#f4f4f4"/></svg><svg style="left:218px;top:763.5px" width="7" height="10" viewBox="0 0 7 10"><path d="M0.5 0.500L6 5L0.500 9.500Z" fill="#111"/></svg><svg style="left:230px;top:755px" width="33" height="28" viewBox="0 0 33 28"><path d="M8 22H32L29 26H10Z" fill="#d0d0d0" opacity=".7"/><rect x="1.500" y="1.500" width="17" height="13" fill="#ededed" stroke="#8c8c8c" stroke-width="1.600"/><circle cx="20" cy="16.500" r="9" fill="#e4e4e4" fill-opacity=".7" stroke="#8c8c8c" stroke-width="1.600"/><path d="M20 8V17H28" stroke="#c4c4c4" stroke-width="1" fill="none"/></svg><svg style="left:271.5px;top:763.5px" width="7" height="10" viewBox="0 0 7 10"><path d="M0.5 0.500L6 5L0.500 9.500Z" fill="#111"/></svg><svg style="left:22px;top:798px" width="32" height="29" viewBox="0 0 32 29"><path d="M4 22L14 26L28 20L26 24L14 29L5 26Z" fill="#d4d4d4" opacity=".8"/><path d="M2.500 8L12 2.500H22.500" fill="none" stroke="#c4c4c4" stroke-width="1.800"/><path d="M22.500 4V17L13 23L2.500 17.500" fill="none" stroke="#b4b4b4" stroke-width="2.200"/></svg><svg style="left:61px;top:808px" width="7" height="10" viewBox="0 0 7 10"><path d="M0.5 0.500L6 5L0.500 9.500Z" fill="#111"/></svg><svg style="left:72px;top:793px" width="39" height="38" viewBox="0 0 39 38"><defs><clipPath id="cpW"><rect x="0" y="0" width="38.500" height="37.500"/></clipPath></defs><g clip-path="url(#cpW)"><path d="M0 5Q5 10 10.500 5T20 4.5T30 3T40 0" fill="none" stroke="#3a3a3a" stroke-width="2.300"/><path d="M0 11Q5 16 10.500 11T20 10.5T30 9T40 6" fill="none" stroke="#3a3a3a" stroke-width="2.300"/><path d="M0 17Q5 22 10.500 17T20 16.5T30 15T40 12" fill="none" stroke="#3a3a3a" stroke-width="2.300"/><path d="M0 23Q5 28 10.500 23T20 22.5T30 21T40 18" fill="none" stroke="#3a3a3a" stroke-width="2.300"/><path d="M0 29Q5 34 10.500 29T20 28.5T30 27T40 24" fill="none" stroke="#3a3a3a" stroke-width="2.300"/><path d="M0 35Q5 40 10.500 35T20 34.5T30 33T40 30" fill="none" stroke="#3a3a3a" stroke-width="2.300"/><path d="M0 41Q5 46 10.500 41T20 40.5T30 39T40 36" fill="none" stroke="#3a3a3a" stroke-width="2.300"/><path d="M19 8L22.300 15.200L30.500 15.800L24.500 21L26.500 28.800L19 24.500L12 28.800L13.800 21L8 15.800L16 15.200Z" fill="#fdfdfd" stroke="#d02030" stroke-width="2" stroke-linejoin="round"/></g></svg><svg style="left:128px;top:793px" width="34" height="38" viewBox="0 0 34 38"><g fill="none" stroke="#bdbdbd" stroke-width="1.500"><path d="M14 2Q4 8 3 20Q4 30 12 33Q6 22 14 14Q20 9 14 2Z"/><path d="M20 36Q30 30 31 18Q30 8 22 5Q28 16 20 24Q14 29 20 36Z"/><path d="M8 30Q14 36 22 34M26 8Q20 2 12 4"/></g><path d="M10 33L30 29L28 33L12 36Z" fill="#d4d4d4" opacity=".6"/></svg><svg style="left:19px;top:874px" width="40" height="36" viewBox="0 0 40 36"><ellipse cx="20" cy="31" rx="16" ry="3" fill="#b0b0b0" opacity=".5" filter="url(#fS)"/><g transform="translate(0 14)"><ellipse cx="10" cy="9" rx="9" ry="6.500" fill="#d8a850"/><ellipse cx="8" cy="7" rx="5.500" ry="3.500" fill="#f4d488"/><ellipse cx="22" cy="9" rx="8" ry="5.500" fill="#cf9c44" transform="rotate(-22 22 9)"/><ellipse cx="21" cy="7" rx="4.500" ry="2.500" fill="#efc878" transform="rotate(-22 21 7)"/><circle cx="31" cy="3.500" r="3.200" fill="#d8a850"/><circle cx="34.500" cy="8" r="2.400" fill="#c89038"/><ellipse cx="14" cy="15" rx="6" ry="2.800" fill="#c08830"/><ellipse cx="4" cy="13" rx="3.500" ry="2.500" fill="#c89440"/></g><path d="M1.500 4Q1.500 2 4 2H7L8.500 3.500H12.500V6" fill="none" stroke="#222" stroke-width="1.300"/><path d="M2 11L4.500 6H15L12 11Z" fill="#30a8a0" stroke="#1c5c58" stroke-width=".8"/><path d="M13 3.500Q17 1.500 18.500 5.500M17 7.500L18.800 5.200L20.500 7" fill="none" stroke="#222" stroke-width="1.300"/></svg><svg style="left:60.5px;top:887.5px" width="7" height="10" viewBox="0 0 7 10"><path d="M0.5 0.500L6 5L0.500 9.500Z" fill="#111"/></svg><svg style="left:72px;top:880px" width="37" height="26" viewBox="0 0 37 26"><path d="M6 20L30 25L36 19L34 23L30 27L5 22Z" fill="#a8a8a8" opacity=".5" filter="url(#fS)"/><path d="M1 7L9 1L35 13L28 20Z" fill="#ecd884"/><path d="M1 7L28 20L28 24L1 11Z" fill="#c8a848"/><path d="M28 20L35 13V17L28 24Z" fill="#a88830"/><path d="M4 7L10 2.500L31 12.500" fill="none" stroke="#f8ecb0" stroke-width="1"/></svg><svg style="left:113.5px;top:887.5px" width="7" height="10" viewBox="0 0 7 10"><path d="M0.5 0.500L6 5L0.500 9.500Z" fill="#111"/></svg><svg style="left:128px;top:875px" width="33" height="36" viewBox="0 0 33 36"><ellipse cx="16" cy="31" rx="14" ry="3.500" fill="#b4b4b4" opacity=".5" filter="url(#fS)"/><path d="M1 28Q8 28 12 22Q15 17 16 16Q17 17 20 22Q24 28 31 28Q24 32 16 32Q8 32 1 28Z" fill="url(#gGold)"/><path d="M1 8Q7 5 10 6Q12 2 16 1.500Q20 2 22 5Q27 5 31 9Q24 11 20 11Q18 14 16 16Q14 14 12 11Q7 11 1 8Z" fill="url(#gGold)"/><path d="M16 12V26" stroke="#3c2c10" stroke-width="1.100"/><circle cx="16" cy="25.500" r="1.500" fill="#2c2008"/></svg><svg style="left:183px;top:874px" width="30" height="37" viewBox="0 0 30 37"><ellipse cx="15" cy="33" rx="13" ry="3" fill="#b4b4b4" opacity=".5" filter="url(#fS)"/><ellipse cx="15" cy="8" rx="12" ry="7.500" fill="url(#gGold)"/><ellipse cx="12" cy="6" rx="6" ry="3" fill="#fff0b8" opacity=".8"/><path d="M15 15V27" stroke="#3c2c10" stroke-width="1.200"/><ellipse cx="9" cy="26" rx="7" ry="7.500" fill="#e0b060"/><ellipse cx="21" cy="26" rx="7" ry="7.500" fill="#d8a450"/><ellipse cx="15" cy="24" rx="5" ry="6" fill="#f0c880"/><path d="M6 24L10 31M20 22L24 30M13 22L16 30" stroke="#b88030" stroke-width="1.100"/><circle cx="15" cy="24.500" r="1.500" fill="#2c2008"/></svg><svg style="left:233px;top:873px" width="34" height="38" viewBox="0 0 34 38"><ellipse cx="17" cy="34" rx="14" ry="3" fill="#b4b4b4" opacity=".5" filter="url(#fS)"/><g transform="translate(1 18) scale(.85)" opacity=".55"><ellipse cx="10" cy="9" rx="9" ry="6.500" fill="#d8c8a8"/><ellipse cx="8" cy="7" rx="5.500" ry="3.500" fill="#f4d488"/><ellipse cx="22" cy="9" rx="8" ry="5.500" fill="#d0c0a0" transform="rotate(-22 22 9)"/><ellipse cx="21" cy="7" rx="4.500" ry="2.500" fill="#efc878" transform="rotate(-22 21 7)"/><circle cx="31" cy="3.500" r="3.200" fill="#d8c8a8"/><circle cx="34.500" cy="8" r="2.400" fill="#c8b898"/><ellipse cx="14" cy="15" rx="6" ry="2.800" fill="#c0b090"/><ellipse cx="4" cy="13" rx="3.500" ry="2.500" fill="#c8b898"/></g><g transform="translate(0 1) scale(.82)"><ellipse cx="10" cy="9" rx="9" ry="6.500" fill="#d8a850"/><ellipse cx="8" cy="7" rx="5.500" ry="3.500" fill="#f4d488"/><ellipse cx="22" cy="9" rx="8" ry="5.500" fill="#cf9c44" transform="rotate(-22 22 9)"/><ellipse cx="21" cy="7" rx="4.500" ry="2.500" fill="#efc878" transform="rotate(-22 21 7)"/><circle cx="31" cy="3.500" r="3.200" fill="#d8a850"/><circle cx="34.500" cy="8" r="2.400" fill="#c89038"/><ellipse cx="14" cy="15" rx="6" ry="2.800" fill="#c08830"/><ellipse cx="4" cy="13" rx="3.500" ry="2.500" fill="#c89440"/></g><path d="M15.500 12V26M13.500 14.500L15.500 12L17.500 14.500M13.500 23.500L15.500 26L17.500 23.500" stroke="#202040" stroke-width="1.200" fill="none"/></svg><svg style="left:24px;top:921px" width="34" height="34" viewBox="0 0 34 34"><text x="3" y="29" font-size="38" font-style="italic" font-weight="bold" font-family="Liberation Serif, serif" fill="#b4b4b4" stroke="#b4b4b4" stroke-width="1.8">S</text><text x="2.500" y="28.500" font-size="38" font-style="italic" font-weight="bold" font-family="Liberation Serif, serif" fill="#ececec">S</text></svg><svg style="left:73px;top:921px" width="38" height="33" viewBox="0 0 38 33"><ellipse cx="18.500" cy="16" rx="17.500" ry="15" fill="#f4f4f4" stroke="#c4c4c4" stroke-width="1.300"/><g transform="rotate(45 18.500 16)"><rect x="6" y="3.500" width="25" height="25" rx="6" fill="none" stroke="#c9c9c9" stroke-width="1.300"/><rect x="10" y="7.500" width="17" height="17" rx="3" fill="none" stroke="#c9c9c9" stroke-width="1.300"/></g><g transform="rotate(135 18.500 16)"><rect x="6" y="3.500" width="25" height="25" rx="6" fill="none" stroke="#c9c9c9" stroke-width="1.300"/><rect x="10" y="7.500" width="17" height="17" rx="3" fill="none" stroke="#c9c9c9" stroke-width="1.300"/></g><path d="M5 16H32M18.500 3V29M9 8L28 24M28 8L9 24" stroke="#cdcdcd" stroke-width="1.200"/><ellipse cx="18.500" cy="16" rx="10" ry="8.500" fill="none" stroke="#c9c9c9" stroke-width="1.300"/></svg><svg style="left:129px;top:919px" width="30" height="36" viewBox="0 0 30 36"><ellipse cx="14" cy="32" rx="12" ry="2.500" fill="#aaa" opacity=".5" filter="url(#fS)"/><path d="M1 20L14 14L27 21L13 30Z" fill="#3c4c88"/><path d="M1 20L13 30V33L1 23Z" fill="#28345c"/><path d="M13 30L27 21V24L13 33Z" fill="#1c2444"/><path d="M9 18V25Q15 27 17 23Q15 20 10 22" fill="none" stroke="#f0d020" stroke-width="1.800"/><path d="M4 4L7 1L12 5L18 3L20 6L12 9Z" fill="#f0d020" stroke="#b89810" stroke-width=".6"/><circle cx="13.500" cy="5.500" r="1.200" fill="#b04010"/></svg><svg style="left:166px;top:933px" width="7" height="10" viewBox="0 0 7 10"><path d="M0.5 0.500L6 5L0.500 9.500Z" fill="#111"/></svg><svg style="left:183px;top:920px" width="26" height="37" viewBox="0 0 26 37"><ellipse cx="13" cy="33" rx="10" ry="2.500" fill="#aaa" opacity=".5" filter="url(#fS)"/><path d="M1 6L12 1L24 6L12 12Z" fill="#f8e020"/><path d="M1 6L12 12V14.500L1 8.500ZM12 12L24 6V8.500L12 14.500Z" fill="#c8a410"/><ellipse cx="12" cy="5.500" rx="3" ry="1.500" fill="#e02010"/><path d="M12 13V24" stroke="#2c2c2c" stroke-width="1.300"/><path d="M1 26L12 20L24 26L12 33Z" fill="#f8e020"/><path d="M1 26L12 33V36L1 29ZM12 33L24 26V29L12 36Z" fill="#c8a410"/><ellipse cx="12" cy="25.500" rx="3.200" ry="1.800" fill="#701008"/></svg><svg style="left:218px;top:933px" width="7" height="10" viewBox="0 0 7 10"><path d="M0.5 0.500L6 5L0.500 9.500Z" fill="#111"/></svg><svg style="left:229px;top:919px" width="40" height="37" viewBox="0 0 40 37"><path d="M3 2H36L39 32H1Z" fill="url(#gLav)"/><path d="M1 32H39V36H1Z" fill="#8484e0"/><path d="M16 6Q20 3 24 6V32H16Z" fill="#e4e4ff" opacity=".75"/><path d="M7 16Q8 3 19 3Q29 3 31 12" fill="none" stroke="#f0dc20" stroke-width="3.600"/><path d="M26 12H36L31 19Z" fill="#f0dc20" stroke="#a89810" stroke-width=".6"/><path d="M5 15H10" stroke="#a89810" stroke-width="1"/></svg><svg style="left:20px;top:965px" width="38" height="36" viewBox="0 0 38 36"><ellipse cx="19" cy="28" rx="17" ry="4" fill="#a4a4a4" opacity=".5" filter="url(#fS1)"/><path d="M19 1L24 12L36.500 13.500L27.500 22L30 34L19 28L8 34L10.500 22L1.500 13.500L14 12Z" fill="#6c6cd0"/><path d="M19 1L24 12L19 17L14 12Z" fill="#9c9cec"/><path d="M19 17L36.500 13.500L27.500 22ZM19 17L8 34L10.500 22Z" fill="#8484e0"/><path d="M19 17L30 34L19 28ZM19 17L1.500 13.500L14 12Z" fill="#5858b8"/><circle cx="19" cy="14.500" r="5.500" fill="#c8c8fc"/></svg><svg style="left:72px;top:964px" width="40" height="37" viewBox="0 0 40 37"><ellipse cx="20" cy="31" rx="17" ry="3.500" fill="#a4a4a4" opacity=".5" filter="url(#fS)"/><path d="M1 16V12.500H10Q10 2 19.500 2Q29 2 29 12.500H38V16" fill="none" stroke="#222" stroke-width="1.400"/><path d="M3 21L22 34L27 31L8 18Z" fill="#b8b8f0"/><path d="M8 22Q9 15 16 16L32 21Q36 24 33 29L19 30Z" fill="#a0a0e4"/><path d="M10 20Q12 16 16 16.500L31 21" fill="none" stroke="#dcdcfc" stroke-width="1.600"/><ellipse cx="32.500" cy="25" rx="3" ry="4.500" fill="#c8c8f8" transform="rotate(-20 32.500 25)"/><path d="M8 27L15 20Q18 17 22 19M15 20L18 33" fill="none" stroke="#e02838" stroke-width="1.400"/></svg><svg style="left:124px;top:971px" width="38" height="26" viewBox="0 0 38 26"><path d="M5 12Q9 4 20 3.500Q33 5 36 17L32 23Q28 12 19 13Q13 14 11 18Z" fill="#c85048"/><path d="M8 9Q13 4.500 20 5Q30 7 34 17" fill="none" stroke="#e88478" stroke-width="1.600"/><path d="M1 8L5 12L11 18L8 13Z" fill="#f0d0a8"/><path d="M19 13Q28 12 32 23L27 21Q25 16 19 17Z" fill="#f0d8b0"/><path d="M1 8Q4 5 7 6L5 12Z" fill="#e8c090"/></svg><svg style="left:166px;top:978.5px" width="7" height="10" viewBox="0 0 7 10"><path d="M0.5 0.500L6 5L0.500 9.500Z" fill="#111"/></svg><svg style="left:179px;top:967px" width="34" height="33" viewBox="0 0 34 33"><defs><radialGradient id="gTex" cx=".5" cy=".5" r=".7"><stop offset="0" stop-color="#e8ecf8"/><stop offset=".6" stop-color="#a8b0cc"/><stop offset="1" stop-color="#5c6890"/></radialGradient></defs><path d="M28 28L33 24V30L30 32Z" fill="#999" opacity=".6"/><rect x="0.500" y="0.500" width="31" height="32" fill="url(#gTex)"/><path d="M16 4Q8 8 9 16Q6 22 10 27Q16 31 22 27Q27 22 23 16Q25 8 16 4Z" fill="none" stroke="#f0f4ff" stroke-width="1.400" opacity=".9"/><path d="M12 12Q16 8 20 12M12 20Q16 24 20 20M9 24L14 22M18 22L24 25M14 15L18 17" stroke="#7c88ac" stroke-width="1.100" fill="none"/><path d="M11 18Q16 14 21 18" stroke="#fff" stroke-width="1.300" fill="none"/></svg><svg style="left:229px;top:966px" width="40" height="33" viewBox="0 0 40 33"><ellipse cx="20" cy="28" rx="16" ry="3" fill="#aaa" opacity=".5" filter="url(#fS)"/><path d="M1 21L20 29L38 19L22 14Z" fill="#c4c4f4"/><path d="M1 21L20 29V31L1 23Z" fill="#9c9ce0"/><path d="M20 29L38 19V21L20 31Z" fill="#8888cc"/><path d="M9 8L24 2L31 9L28 21L16 24L8 17Z" fill="#f0e050" stroke="#c8b830" stroke-width=".6"/><path d="M24 2L31 9L28 21" fill="none" stroke="#111" stroke-width=".8" stroke-dasharray="1.200 1.200"/></svg><svg style="left:22px;top:1011px" width="32" height="12" viewBox="0 0 32 12"><path d="M1 11Q4 4 12 3Q14 0 20 1Q27 2 31 11Z" fill="#d81c1c"/><path d="M8 6Q14 2 22 4" stroke="#ff6a5a" stroke-width="1.500" fill="none"/></svg><svg style="left:73px;top:1010px" width="38" height="12" viewBox="0 0 38 12"><path d="M1 1H37L34 12H4Z" fill="#e8e8e8" stroke="#8c8c8c" stroke-width="1.400"/><path d="M10 1L11 12M19 1V12M28 1L27 12M3 6H35" stroke="#a0a0a0" stroke-width="1.200"/><ellipse cx="19" cy="9" rx="8" ry="4" fill="#b0b0b0"/></svg><svg style="left:129px;top:1008px" width="35" height="14" viewBox="0 0 35 14"><path d="M1 14Q8 4 17 1Q28 4 34 14Z" fill="#8c8ce8"/><path d="M8 12Q12 5 17 2.500Q22 5 24 12Z" fill="#c4c4fc"/></svg><svg style="left:178px;top:1009px" width="34" height="13" viewBox="0 0 34 13"><path d="M1 13Q3 4 16.500 1.500Q30 4 32.500 13Z" fill="#3c8cd8"/><path d="M5 13Q8 5 16.500 3Q25 5 28 13M10 13Q12 6 16.500 4Q21 6 23 13M16.500 2V13M3 9H30M7 5.500H26" stroke="#bce0f8" stroke-width=".9" fill="none"/></svg><svg style="left:228px;top:1010px" width="30" height="12" viewBox="0 0 30 12"><path d="M1 12Q4 5 11 3L15 8L19 0L22 6L28 12Z" fill="#f0d820"/><path d="M13 8L19 0L22 6L20 12H12Z" fill="#3c78d0"/></svg>
<svg style="left:0;top:1021px" width="346" height="34" viewBox="0 0 346 34">
<defs><filter id="noiseL" x="0" y="0" width="100%" height="100%"><feTurbulence type="fractalNoise" baseFrequency="0.35" numOctaves="2" seed="3"/><feColorMatrix values="0 0 0 0 0.86  0 0 0 0 0.86  0 0 0 0 0.86  0 0 0 0 1"/></filter>
<filter id="embL" x="0" y="0" width="100%" height="100%"><feTurbulence type="fractalNoise" baseFrequency="0.22" numOctaves="2" seed="7" result="n"/><feDiffuseLighting in="n" surfaceScale="1.3" diffuseConstant="1" lighting-color="#e0e0e0"><feDistantLight azimuth="225" elevation="66"/></feDiffuseLighting></filter></defs>
<rect x="0" y="0" width="339" height="32" fill="#dedede"/>
<rect x="160" y="0" width="179" height="32" filter="url(#embL)"/>
<path d="M0 0H77V26Q77 31 72 31H6Q1 31 0 26Z" fill="#f0f0f0"/>
<path d="M78.5 0.5H160.5V26Q160.500 30.500 155.500 30.500H83.500Q78.500 30.500 78.500 26Z" fill="#f1f1f1" stroke="#c6c6c6"/>
<path d="M0 0H339" stroke="#c9c9c9" stroke-width="1" transform="translate(0,0.5)" opacity="0"/>
<rect x="78" y="0" width="262" height="1" fill="#cfcfcf"/>
<rect x="0" y="32" width="346" height="1.5" fill="#9f9f9f"/>
</svg>
<span class="t " style="left:10px;top:1026.86px;font-size:15.4px;line-height:17.71px;color:#1a1a1a;transform:scaleX(0.9443);">Assistant</span>
<span class="t " style="left:88px;top:1027.86px;font-size:15.4px;line-height:17.71px;color:#1a1a1a;transform:scaleX(1.0011);">Toolpaths</span>
<div class="b" style="left:346px;top:54px;width:1227px;height:1px;background:#a8a8a8;"></div>
<div class="b" style="left:346px;top:54px;width:1px;height:950px;background:#a8a8a8;"></div>
<div class="b" style="left:1572px;top:55px;width:1.5px;height:944px;background:#fcfcfc;"></div>
<div class="b" style="left:346px;top:997.8px;width:1227.5px;height:1.3px;background:#fbfbfb;"></div>
<div class="b" style="left:1576.5px;top:54px;width:1.5px;height:1000px;background:#fafafa;"></div>
<div class="b" style="left:1578px;top:54px;width:2.2px;height:1000px;background:#b8b8b8;"></div>
<div class="b" style="left:1580.2px;top:54px;width:1.3px;height:1000px;background:#fafafa;"></div>
<span class="t " style="left:355.5px;top:62.51px;font-size:18px;line-height:20.70px;color:#111;font-weight:bold;transform:scaleX(0.8692);-webkit-text-stroke:0.5px #111;">3D</span>
<div class="b" style="left:472px;top:62px;width:1px;height:26px;background:#c2c2c2;"></div>
<div class="b" style="left:473px;top:62px;width:1px;height:26px;background:#fbfbfb;"></div>
<div class="b" style="left:567px;top:62px;width:1px;height:26px;background:#c2c2c2;"></div>
<div class="b" style="left:568px;top:62px;width:1px;height:26px;background:#fbfbfb;"></div>
<div class="b" style="left:664px;top:62px;width:1px;height:26px;background:#c2c2c2;"></div>
<div class="b" style="left:665px;top:62px;width:1px;height:26px;background:#fbfbfb;"></div>
<div class="b" style="left:574px;top:60px;width:27px;height:27.5px;background:#f9f9f9;border:1px solid #dedede;"></div>
<div class="b" style="left:602px;top:60px;width:28px;height:27.5px;background:#f9f9f9;border:1px solid #dedede;"></div>
<div class="b" style="left:679px;top:73px;width:92px;height:2px;background:#9a9a9a;border-bottom:1px solid #fafafa;box-sizing:content-box;"></div>
<svg style="left:774px;top:63px" width="12" height="26" viewBox="0 0 12 26"><path d="M1.5 1.5H9.5V19L5.5 24.5L1.5 19Z" fill="#f0f0f0" stroke="#bdbdbd"/><path d="M9.5 1.5V19L5.5 24.5" fill="none" stroke="#7d7d7d" stroke-width="1.6"/></svg>
<svg style="left:381.5px;top:60px" width="26" height="26" viewBox="0 0 26 26"><path d="M16 16.500L19 19.500" stroke="#9cb4cc" stroke-width="2.400"/><path d="M19.500 19L22 21.200" stroke="#e89838" stroke-width="4.200" stroke-linecap="round"/><circle cx="11" cy="11.500" r="7.3999999999999995" fill="url(#gLens)" stroke="#78a4c8" stroke-width="1.500"/><path d="M6 11.500H16M11 6.500V16.500" stroke="#28489c" stroke-width="2"/></svg><svg style="left:410.7px;top:60px" width="26" height="26" viewBox="0 0 26 26"><path d="M16 16.500L19 19.500" stroke="#9cb4cc" stroke-width="2.400"/><path d="M19.500 19L22 21.200" stroke="#e89838" stroke-width="4.200" stroke-linecap="round"/><circle cx="11" cy="11.500" r="7.3999999999999995" fill="url(#gLens)" stroke="#78a4c8" stroke-width="1.500"/><path d="M6 11.500H16" stroke="#28489c" stroke-width="2"/></svg><svg style="left:440px;top:60px" width="26" height="26" viewBox="0 0 26 26"><path d="M16 16.500L19 19.500" stroke="#9cb4cc" stroke-width="2.400"/><path d="M19.500 19L22 21.200" stroke="#e89838" stroke-width="4.200" stroke-linecap="round"/><circle cx="11" cy="11.500" r="7.3999999999999995" fill="url(#gLens)" stroke="#78a4c8" stroke-width="1.500"/><path d="M14.500 15.500Q17 9 11.500 7.500Q7.500 7 7 11M5 9.500L7 12.500L10 10.500" fill="none" stroke="#d89018" stroke-width="2.200"/></svg><svg style="left:478.7px;top:60px" width="26" height="26" viewBox="0 0 26 26"><path d="M16 16.500L19 19.500" stroke="#9cb4cc" stroke-width="2.400"/><path d="M19.500 19L22 21.200" stroke="#e89838" stroke-width="4.200" stroke-linecap="round"/><circle cx="11" cy="11.500" r="8.0" fill="url(#gLens)" stroke="#78a4c8" stroke-width="1.500"/><text x="11" y="14.500" font-size="8" font-weight="bold" text-anchor="middle" fill="#7c9cc0" font-family="Liberation Sans, sans-serif">1:1</text></svg><svg style="left:507px;top:60px" width="26" height="26" viewBox="0 0 26 26"><path d="M16 16.500L19 19.500" stroke="#9cb4cc" stroke-width="2.400"/><path d="M19.500 19L22 21.200" stroke="#e89838" stroke-width="4.200" stroke-linecap="round"/><circle cx="11" cy="11.500" r="8.0" fill="url(#gLens)" stroke="#78a4c8" stroke-width="1.500"/><rect x="6" y="7.500" width="10" height="8" fill="none" stroke="#5c84b0" stroke-width="1.800"/></svg><svg style="left:538px;top:63px" width="24" height="22" viewBox="0 0 24 22"><path d="M3 9Q3 2 10 2Q17 2 17 8L20 12L17 14L21 19H14L12 16Q5 18 3 9Z" fill="#a6a6a6"/></svg><svg style="left:576px;top:64px" width="24" height="22" viewBox="0 0 24 22"><path d="M3 1V20M7 1V20M11 1V5M11 16V20" stroke="#555" stroke-width="1.200" stroke-dasharray="1.600 1.400"/><path d="M7 10L13 4V7.500H20V12.500H13V16Z" fill="#4c4c4c" stroke="#111" stroke-width=".9"/></svg><svg style="left:605px;top:64px" width="24" height="22" viewBox="0 0 24 22"><path d="M21 1V20M17 1V20M13 1V5M13 16V20" stroke="#555" stroke-width="1.200" stroke-dasharray="1.600 1.400"/><path d="M17 10L11 4V7.500H3V12.500H11V16Z" fill="#4c4c4c" stroke="#111" stroke-width=".9"/></svg><svg style="left:634px;top:64px" width="24" height="18" viewBox="0 0 24 18"><path d="M1 9L10 2.500V6H19V12H10V15.500Z" fill="#7484d4"/><circle cx="13" cy="7" r="5" fill="#c8dcf0" fill-opacity=".8" stroke="#8ca8cc" stroke-width="1.200"/><path d="M16.500 10.500L21 15" stroke="#e0a050" stroke-width="2.400" stroke-linecap="round"/></svg>
<svg style="left:346px;top:93px" width="1230" height="905" viewBox="346 93 1230 905" font-family="Liberation Sans, sans-serif"><rect x="347" y="94" width="1204" height="24" fill="#f1f1f1"/><rect x="347" y="118" width="25" height="857" fill="#f1f1f1"/><rect x="373" y="119" width="1178" height="857" fill="#f0f0f0"/><path d="M346.5 93.500H1551M346.500 118.500H1551M372.500 93.500V975.500M346.500 975.500H372.500" stroke="#a3a3a3" fill="none"/><path d="M1551.800 119V976.800H373" stroke="#fcfcfc" stroke-width="1.500" fill="none"/><path d="M351 106.500H369M359.500 98V115M356.500 101V112M362.500 101V112M353 103.500H366M353 109.500H366" stroke="#c4c4c4" stroke-width="1" stroke-dasharray="2 1.5" fill="none"/><path d="M376.7 118V115.4M386.8 118V115.4M396.9 118V115.4M407.0 118V112.5M417.1 118V115.4M427.2 118V115.4M437.3 118V115.4M447.4 118V115.4M457.5 118V110.0M467.6 118V115.4M477.7 118V115.4M487.8 118V115.4M497.9 118V115.4M508.0 118V112.5M518.1 118V115.4M528.2 118V115.4M538.3 118V115.4M548.4 118V115.4M558.5 118V110.0M568.6 118V115.4M578.7 118V115.4M588.8 118V115.4M598.9 118V115.4M609.0 118V112.5M619.1 118V115.4M629.2 118V115.4M639.3 118V115.4M649.4 118V115.4M659.5 118V110.0M669.6 118V115.4M679.7 118V115.4M689.8 118V115.4M699.9 118V115.4M709.9 118V112.5M720.0 118V115.4M730.1 118V115.4M740.2 118V115.4M750.3 118V115.4M760.4 118V110.0M770.5 118V115.4M780.6 118V115.4M790.7 118V115.4M800.8 118V115.4M810.9 118V112.5M821.0 118V115.4M831.1 118V115.4M841.2 118V115.4M851.3 118V115.4M861.4 118V110.0M871.5 118V115.4M881.6 118V115.4M891.7 118V115.4M901.8 118V115.4M911.9 118V112.5M922.0 118V115.4M932.1 118V115.4M942.2 118V115.4M952.3 118V115.4M962.4 118V110.0M972.5 118V115.4M982.6 118V115.4M992.7 118V115.4M1002.8 118V115.4M1012.9 118V112.5M1023.0 118V115.4M1033.1 118V115.4M1043.2 118V115.4M1053.3 118V115.4M1063.4 118V110.0M1073.5 118V115.4M1083.6 118V115.4M1093.7 118V115.4M1103.8 118V115.4M1113.9 118V112.5M1124.0 118V115.4M1134.1 118V115.4M1144.2 118V115.4M1154.3 118V115.4M1164.4 118V110.0M1174.5 118V115.4M1184.6 118V115.4M1194.7 118V115.4M1204.8 118V115.4M1214.8 118V112.5M1224.9 118V115.4M1235.0 118V115.4M1245.1 118V115.4M1255.2 118V115.4M1265.3 118V110.0M1275.4 118V115.4M1285.5 118V115.4M1295.6 118V115.4M1305.7 118V115.4M1315.8 118V112.5M1325.9 118V115.4M1336.0 118V115.4M1346.1 118V115.4M1356.2 118V115.4M1366.3 118V110.0M1376.4 118V115.4M1386.5 118V115.4M1396.6 118V115.4M1406.7 118V115.4M1416.8 118V112.5M1426.9 118V115.4M1437.0 118V115.4M1447.1 118V115.4M1457.2 118V115.4M1467.3 118V110.0M1477.4 118V115.4M1487.5 118V115.4M1497.6 118V115.4M1507.7 118V115.4M1517.8 118V112.5M1527.9 118V115.4M1538.0 118V115.4M1548.1 118V115.4" stroke="#2a2a2a" stroke-width="1.5" fill="none"/><path d="M372 968.4H369.4M372 958.3H369.4M372 948.2H364.0M372 938.2H369.4M372 928.1H369.4M372 918.0H369.4M372 907.9H369.4M372 897.9H366.5M372 887.8H369.4M372 877.7H369.4M372 867.6H369.4M372 857.6H369.4M372 847.5H364.0M372 837.4H369.4M372 827.3H369.4M372 817.3H369.4M372 807.2H369.4M372 797.1H366.5M372 787.0H369.4M372 776.9H369.4M372 766.9H369.4M372 756.8H369.4M372 746.7H364.0M372 736.6H369.4M372 726.6H369.4M372 716.5H369.4M372 706.4H369.4M372 696.3H366.5M372 686.3H369.4M372 676.2H369.4M372 666.1H369.4M372 656.0H369.4M372 646.0H364.0M372 635.9H369.4M372 625.8H369.4M372 615.7H369.4M372 605.7H369.4M372 595.6H366.5M372 585.5H369.4M372 575.4H369.4M372 565.4H369.4M372 555.3H369.4M372 545.2H364.0M372 535.1H369.4M372 525.0H369.4M372 515.0H369.4M372 504.9H369.4M372 494.8H366.5M372 484.7H369.4M372 474.7H369.4M372 464.6H369.4M372 454.5H369.4M372 444.4H364.0M372 434.4H369.4M372 424.3H369.4M372 414.2H369.4M372 404.1H369.4M372 394.1H366.5M372 384.0H369.4M372 373.9H369.4M372 363.8H369.4M372 353.8H369.4M372 343.7H364.0M372 333.6H369.4M372 323.5H369.4M372 313.5H369.4M372 303.4H369.4M372 293.3H366.5M372 283.2H369.4M372 273.1H369.4M372 263.1H369.4M372 253.0H369.4M372 242.9H364.0M372 232.8H369.4M372 222.8H369.4M372 212.7H369.4M372 202.6H369.4M372 192.5H366.5M372 182.5H369.4M372 172.4H369.4M372 162.3H369.4M372 152.2H369.4M372 142.2H364.0M372 132.1H369.4M372 122.0H369.4" stroke="#2a2a2a" stroke-width="1.5" fill="none"/><text x="457.5" y="107.500" font-size="13.2" text-anchor="middle" fill="#111">-500</text><text x="558.5" y="107.500" font-size="13.2" text-anchor="middle" fill="#111">-400</text><text x="659.5" y="107.500" font-size="13.2" text-anchor="middle" fill="#111">-300</text><text x="760.4" y="107.500" font-size="13.2" text-anchor="middle" fill="#111">-200</text><text x="861.4" y="107.500" font-size="13.2" text-anchor="middle" fill="#111">-100</text><text x="962.4" y="107.500" font-size="13.2" text-anchor="middle" fill="#111">0</text><text x="1063.4" y="107.500" font-size="13.2" text-anchor="middle" fill="#111">100</text><text x="1164.4" y="107.500" font-size="13.2" text-anchor="middle" fill="#111">200</text><text x="1265.3" y="107.500" font-size="13.2" text-anchor="middle" fill="#111">300</text><text x="1366.3" y="107.500" font-size="13.2" text-anchor="middle" fill="#111">400</text><text x="1467.3" y="107.500" font-size="13.2" text-anchor="middle" fill="#111">500</text><text transform="translate(361.5 948.2) rotate(-90)" font-size="13.2" text-anchor="middle" fill="#111">-400</text><text transform="translate(361.5 847.5) rotate(-90)" font-size="13.2" text-anchor="middle" fill="#111">-300</text><text transform="translate(361.5 746.7) rotate(-90)" font-size="13.2" text-anchor="middle" fill="#111">-200</text><text transform="translate(361.5 646.0) rotate(-90)" font-size="13.2" text-anchor="middle" fill="#111">-100</text><text transform="translate(361.5 545.2) rotate(-90)" font-size="13.2" text-anchor="middle" fill="#111">0</text><text transform="translate(361.5 444.4) rotate(-90)" font-size="13.2" text-anchor="middle" fill="#111">100</text><text transform="translate(361.5 343.7) rotate(-90)" font-size="13.2" text-anchor="middle" fill="#111">200</text><text transform="translate(361.5 242.9) rotate(-90)" font-size="13.2" text-anchor="middle" fill="#111">300</text><text transform="translate(361.5 142.2) rotate(-90)" font-size="13.2" text-anchor="middle" fill="#111">400</text><text x="1522.500" y="107.300" font-size="10.500" font-weight="bold" text-anchor="middle" fill="#1a1a1a" textLength="51.500" lengthAdjust="spacingAndGlyphs">millimetres</text><path d="M809 95V118" stroke="#111" stroke-width="1.6"/><path d="M372 237H355M355.5 232V238" stroke="#111" stroke-width="1.3" fill="none"/><rect x="1551" y="94" width="21" height="24.500" fill="#f2f2f2"/><path d="M1551.500 118V94.500H1571" stroke="#fdfdfd" stroke-width="1.200" fill="none"/><path d="M1571.300 94.500V118H1551.500" stroke="#767676" stroke-width="1.800" fill="none"/><path d="M1556 101.700H1560M1563 101.700H1567" stroke="#111" stroke-width="1.700"/><path d="M1555.500 104.700H1567.500L1561.500 111Z" fill="#111"/><rect x="347.500" y="977.500" width="24" height="19" fill="#f6f6f6" stroke="#bdbdbd"/><path d="M356.500 981V993" stroke="#111" stroke-width="1.6" stroke-dasharray="2.5 2"/><path d="M360 981.500V992.500L366 987Z" fill="#111"/><rect x="393" y="985.800" width="1136" height="2.600" fill="#868686"/><rect x="1560.700" y="140" width="2.600" height="815" fill="#868686"/></svg>
<div class="b" style="left:346px;top:1002px;width:1226.5px;height:1.6px;background:#b9b9b9;"></div>
<div class="b" style="left:346px;top:1003.6px;width:1226.5px;height:1px;background:#fcfcfc;"></div>
<div class="b" style="left:346px;top:1003px;width:1px;height:51px;background:#c8c8c8;"></div>
<div class="b" style="left:1551px;top:1004px;width:1.4px;height:50px;background:#fbfbfb;"></div>
<div class="b" style="left:346px;top:1053.6px;width:1228px;height:1.2px;background:#fcfcfc;"></div>
<div class="b" style="left:372px;top:1024px;width:31px;height:25px;background:#000;border:1px solid #2b2b2b;"></div>
<div class="b" style="left:353px;top:1008px;width:32px;height:26px;background:#fff;border:1px solid #4a4a4a;box-shadow:1px 1px 0 #d0d0d0;"></div>
<svg style="left:388px;top:1009px" width="16" height="13" viewBox="0 0 16 13" fill="none" stroke="#222" stroke-width="1.4"><rect x="1" y="1" width="9" height="6.500" rx="3"/><rect x="6" y="5" width="9" height="6.500" rx="3"/></svg>
<div class="b" style="left:417px;top:1009.8px;width:38px;height:38px;background:#ffffff;border:1px solid #2c2c2c;border-radius:2px;box-shadow:1px 1px 0 rgba(0,0,0,.22);"></div>
<div class="b" style="left:462px;top:1009.8px;width:38px;height:38px;background:#000000;border:1px solid #2c2c2c;border-radius:2px;box-shadow:1px 1px 0 rgba(0,0,0,.22);"></div>
<div class="b" style="left:507px;top:1009.8px;width:38px;height:38px;background:#00ffff;border:1px solid #2c2c2c;border-radius:2px;box-shadow:1px 1px 0 rgba(0,0,0,.22);"></div>
<div class="b" style="left:552px;top:1009.8px;width:38px;height:38px;background:#2f3fe0;border:1px solid #2c2c2c;border-radius:2px;box-shadow:1px 1px 0 rgba(0,0,0,.22);"></div>
<div class="b" style="left:597px;top:1009.8px;width:38px;height:38px;background:#58b84f;border:1px solid #2c2c2c;border-radius:2px;box-shadow:1px 1px 0 rgba(0,0,0,.22);"></div>
<div class="b" style="left:642px;top:1009.8px;width:38px;height:38px;background:#e00f22;border:1px solid #2c2c2c;border-radius:2px;box-shadow:1px 1px 0 rgba(0,0,0,.22);"></div>
<div class="b" style="left:687px;top:1009.8px;width:38px;height:38px;background:#b021e0;border:1px solid #2c2c2c;border-radius:2px;box-shadow:1px 1px 0 rgba(0,0,0,.22);"></div>
<div class="b" style="left:732px;top:1009.8px;width:38px;height:38px;background:#ffff80;border:1px solid #2c2c2c;border-radius:2px;box-shadow:1px 1px 0 rgba(0,0,0,.22);"></div>
<div class="b" style="left:777px;top:1009.8px;width:38px;height:38px;background:#b0a02f;border:1px solid #2c2c2c;border-radius:2px;box-shadow:1px 1px 0 rgba(0,0,0,.22);"></div>
<div class="b" style="left:822px;top:1009.8px;width:38px;height:38px;background:#ffcc10;border:1px solid #2c2c2c;border-radius:2px;box-shadow:1px 1px 0 rgba(0,0,0,.22);"></div>
<div class="b" style="left:867px;top:1009.8px;width:38px;height:38px;background:#0c0c0c;border:1px solid #2c2c2c;border-radius:2px;box-shadow:1px 1px 0 rgba(0,0,0,.22);"></div>
<div class="b" style="left:912px;top:1009.8px;width:38px;height:38px;background:#0c0c0c;border:1px solid #2c2c2c;border-radius:2px;box-shadow:1px 1px 0 rgba(0,0,0,.22);"></div>
<div class="b" style="left:957px;top:1009.8px;width:38px;height:38px;background:#0c0c0c;border:1px solid #2c2c2c;border-radius:2px;box-shadow:1px 1px 0 rgba(0,0,0,.22);"></div>
<div class="b" style="left:1002px;top:1009.8px;width:38px;height:38px;background:#0c0c0c;border:1px solid #2c2c2c;border-radius:2px;box-shadow:1px 1px 0 rgba(0,0,0,.22);"></div>
<div class="b" style="left:1047px;top:1009.8px;width:38px;height:38px;background:#0c0c0c;border:1px solid #2c2c2c;border-radius:2px;box-shadow:1px 1px 0 rgba(0,0,0,.22);"></div>
<div class="b" style="left:1092px;top:1009.8px;width:38px;height:38px;background:#0c0c0c;border:1px solid #2c2c2c;border-radius:2px;box-shadow:1px 1px 0 rgba(0,0,0,.22);"></div>
<div class="b" style="left:1137px;top:1009.8px;width:38px;height:38px;background:#0c0c0c;border:1px solid #2c2c2c;border-radius:2px;box-shadow:1px 1px 0 rgba(0,0,0,.22);"></div>
<div class="b" style="left:1182px;top:1009.8px;width:38px;height:38px;background:#0c0c0c;border:1px solid #2c2c2c;border-radius:2px;box-shadow:1px 1px 0 rgba(0,0,0,.22);"></div>
<div class="b" style="left:1227px;top:1009.8px;width:38px;height:38px;background:#0c0c0c;border:1px solid #2c2c2c;border-radius:2px;box-shadow:1px 1px 0 rgba(0,0,0,.22);"></div>
<div class="b" style="left:1272px;top:1009.8px;width:38px;height:38px;background:#0c0c0c;border:1px solid #2c2c2c;border-radius:2px;box-shadow:1px 1px 0 rgba(0,0,0,.22);"></div>
<div class="b" style="left:1317px;top:1009.8px;width:38px;height:38px;background:#0c0c0c;border:1px solid #2c2c2c;border-radius:2px;box-shadow:1px 1px 0 rgba(0,0,0,.22);"></div>
<div class="b" style="left:1362px;top:1009.8px;width:38px;height:38px;background:#0c0c0c;border:1px solid #2c2c2c;border-radius:2px;box-shadow:1px 1px 0 rgba(0,0,0,.22);"></div>
<div class="b" style="left:1407px;top:1009.8px;width:38px;height:38px;background:#0c0c0c;border:1px solid #2c2c2c;border-radius:2px;box-shadow:1px 1px 0 rgba(0,0,0,.22);"></div>
<div class="b" style="left:1452px;top:1009.8px;width:38px;height:38px;background:#0c0c0c;border:1px solid #2c2c2c;border-radius:2px;box-shadow:1px 1px 0 rgba(0,0,0,.22);"></div>
<div class="b" style="left:1497px;top:1009.8px;width:38px;height:38px;background:#0c0c0c;border:1px solid #2c2c2c;border-radius:2px;box-shadow:1px 1px 0 rgba(0,0,0,.22);"></div>
<svg style="left:457px;top:293px" width="1014" height="507" viewBox="457 293 1014 507"><defs>
<radialGradient id="gBall" cx="0.47" cy="0.46" r="0.56"><stop offset="0" stop-color="#f3f3f3"/><stop offset="0.45" stop-color="#e6e6e6"/><stop offset="0.66" stop-color="#cecece"/><stop offset="0.72" stop-color="#d4d4d4"/><stop offset="0.88" stop-color="#c0c0c0"/><stop offset="0.96" stop-color="#9a9a9a"/><stop offset="1" stop-color="#707070"/></radialGradient>
<linearGradient id="gP1" gradientUnits="userSpaceOnUse" x1="0" y1="0" x2="0" y2="6.65"><stop offset="0" stop-color="#727272"/><stop offset="0.4" stop-color="#b6b6b6"/><stop offset="1" stop-color="#fafafa"/></linearGradient>
<linearGradient id="gP2" gradientUnits="userSpaceOnUse" x1="0" y1="13.3" x2="0" y2="6.65"><stop offset="0" stop-color="#727272"/><stop offset="0.4" stop-color="#b6b6b6"/><stop offset="1" stop-color="#fafafa"/></linearGradient>
<linearGradient id="gP3" gradientUnits="userSpaceOnUse" x1="0" y1="0" x2="6.65" y2="0"><stop offset="0" stop-color="#727272"/><stop offset="0.4" stop-color="#b6b6b6"/><stop offset="1" stop-color="#fafafa"/></linearGradient>
<linearGradient id="gP4" gradientUnits="userSpaceOnUse" x1="13.3" y1="0" x2="6.65" y2="0"><stop offset="0" stop-color="#727272"/><stop offset="0.4" stop-color="#b6b6b6"/><stop offset="1" stop-color="#fafafa"/></linearGradient>
<pattern id="pHatch" width="13.3" height="13.3" patternUnits="userSpaceOnUse" patternTransform="translate(692.5 632) rotate(45)"><path d="M0 0H13.3L6.65 6.65Z" fill="url(#gP1)"/><path d="M0 13.3H13.3L6.65 6.65Z" fill="url(#gP2)"/><path d="M0 0V13.3L6.65 6.65Z" fill="url(#gP3)"/><path d="M13.3 0V13.3L6.65 6.65Z" fill="url(#gP4)"/></pattern>
<radialGradient id="gLion" cx="0.5" cy="0.47" r="0.56"><stop offset="0" stop-color="#9a9a9a"/><stop offset="0.45" stop-color="#808080"/><stop offset="0.75" stop-color="#626262"/><stop offset="0.93" stop-color="#484848"/><stop offset="1" stop-color="#2e2e2e"/></radialGradient>
<filter id="fB1" x="-5%" y="-5%" width="110%" height="110%"><feGaussianBlur stdDeviation="0.7"/></filter>
<filter id="fB1b" x="-5%" y="-10%" width="110%" height="120%"><feGaussianBlur stdDeviation="0.9"/></filter>
<filter id="fB2" x="-20%" y="-20%" width="140%" height="140%"><feGaussianBlur stdDeviation="2.2"/></filter>
<filter id="fB4" x="-30%" y="-30%" width="160%" height="160%"><feGaussianBlur stdDeviation="4.5"/></filter>
<filter id="fB7" x="-30%" y="-30%" width="160%" height="160%"><feGaussianBlur stdDeviation="7"/></filter>
<clipPath id="cLion"><path id="lionP" d="M964.0 396.5 L969.3 396.7 L974.7 397.2 L980.0 398.1 L985.0 399.5 L989.9 401.5 L994.6 404.0 L999.0 406.9 L1003.0 410.0 L1006.6 413.4 L1009.8 417.0 L1012.6 420.9 L1015.0 425.0 L1017.1 429.4 L1018.7 434.0 L1020.0 438.6 L1021.0 443.0 L1021.6 447.0 L1021.8 450.8 L1021.8 454.4 L1021.5 458.0 L1021.0 461.6 L1020.2 465.1 L1019.2 468.5 L1018.0 472.0 L1016.5 475.6 L1014.7 479.2 L1012.8 482.7 L1011.0 486.0 L1009.1 489.0 L1007.1 491.8 L1005.3 494.4 L1004.0 497.0 L1003.5 499.6 L1003.5 502.2 L1003.5 504.7 L1003.0 507.0 L1001.7 508.9 L999.9 510.6 L998.0 512.2 L996.0 514.0 L994.1 516.0 L992.2 518.1 L990.2 520.2 L988.0 522.0 L985.5 523.6 L982.8 525.1 L980.0 526.4 L977.0 527.5 L973.9 528.3 L970.6 529.0 L967.3 529.4 L964.0 529.5 L960.7 529.4 L957.3 529.0 L954.0 528.4 L951.0 527.5 L948.3 526.3 L945.8 524.9 L943.4 523.3 L941.0 521.5 L938.6 519.5 L936.3 517.2 L934.1 515.0 L932.0 513.0 L930.0 511.4 L928.0 510.1 L926.3 508.7 L925.0 507.0 L924.4 504.8 L924.3 502.4 L924.2 499.7 L923.5 497.0 L922.0 494.2 L920.1 491.2 L917.9 488.2 L916.0 485.0 L914.2 481.7 L912.5 478.2 L910.9 474.6 L909.5 471.0 L908.4 467.3 L907.5 463.6 L906.9 459.8 L906.5 456.0 L906.4 452.3 L906.4 448.6 L906.8 444.9 L907.5 441.0 L908.5 436.8 L909.8 432.5 L911.5 428.1 L913.5 424.0 L915.9 420.1 L918.8 416.3 L922.0 412.8 L925.5 409.5 L929.4 406.5 L933.7 403.8 L938.2 401.4 L943.0 399.5 L948.0 398.1 L953.3 397.2 L958.7 396.7Z"/></clipPath>
</defs><rect x="457.5" y="293.5" width="1012.5" height="505.5" fill="#ffff80" stroke="#1c1c1c" stroke-width="1.2"/><path d="M1470.300 294V799.300H458" fill="none" stroke="#2a2a2a" stroke-width="1.4"/><g id="halfL"><circle cx="789.9" cy="462.1" r="37.8" fill="#4a4a30"/><clipPath id="cBand"><polygon points="483.5,508.8 492.8,508.8 502.1,508.8 511.4,508.8 520.7,508.8 530.1,508.8 539.8,508.9 549.7,509.0 559.3,509.2 568.3,509.1 576.2,508.8 583.1,508.3 589.0,507.8 594.1,507.0 598.9,506.0 604.2,504.5 610.0,502.4 616.2,499.9 622.4,497.0 628.1,493.9 633.1,490.9 637.1,487.8 640.7,484.6 644.3,481.0 647.9,476.9 651.7,472.5 655.6,467.6 659.7,461.9 663.8,455.9 667.6,450.3 670.9,445.6 673.2,442.5 674.7,440.5 676.1,438.8 677.3,437.4 678.8,435.7 680.7,433.5 683.0,430.8 685.6,427.9 688.5,424.9 691.6,421.9 694.8,419.2 698.0,416.6 701.4,414.1 704.9,411.7 708.6,409.4 712.4,407.4 716.2,405.5 720.1,403.8 724.1,402.3 728.2,401.0 732.2,400.0 736.2,399.2 740.2,398.7 744.2,398.4 748.3,398.2 752.8,398.2 757.5,398.4 762.3,398.8 766.9,399.3 771.2,399.9 775.1,400.6 778.7,401.5 782.2,402.5 785.5,403.6 788.7,405.0 791.9,406.5 795.1,408.2 798.0,410.0 800.8,411.9 803.4,413.8 805.9,415.8 808.4,418.0 810.9,420.4 813.3,423.0 815.5,425.9 817.6,428.9 819.6,432.0 821.5,435.4 823.2,438.9 824.7,442.8 825.9,447.0 826.6,450.8 827.0,454.2 827.3,456.9 827.7,459.5 798.1,463.5 797.7,460.5 797.4,457.6 797.1,455.3 796.8,453.6 796.5,452.4 795.9,450.9 795.0,449.1 794.0,447.2 792.8,445.4 791.7,443.7 790.6,442.4 789.5,441.1 788.2,439.9 786.8,438.7 785.2,437.4 783.5,436.2 781.9,435.0 780.2,434.0 778.5,433.1 776.7,432.2 774.9,431.5 773.0,430.8 771.1,430.3 769.0,429.8 766.4,429.3 763.3,428.9 759.6,428.5 755.7,428.2 752.0,428.0 748.7,428.0 745.8,428.1 743.3,428.3 741.0,428.6 738.7,429.0 736.4,429.6 733.9,430.4 731.3,431.4 728.7,432.5 726.1,433.8 723.6,435.2 721.1,436.7 718.7,438.4 716.2,440.2 713.8,442.1 711.6,444.1 709.5,446.0 707.5,448.2 705.3,450.5 703.2,453.0 701.2,455.3 699.7,457.0 698.9,457.9 698.3,458.7 697.1,460.3 695.1,463.0 692.2,467.2 688.4,472.7 684.1,479.0 679.4,485.5 674.7,491.5 670.4,496.5 666.0,501.4 661.3,506.3 655.9,511.0 649.7,515.5 643.0,519.7 635.8,523.6 628.2,527.2 620.7,530.3 613.2,532.9 606.1,534.9 599.3,536.4 592.5,537.4 585.5,538.0 577.8,538.6 568.9,538.9 559.2,539.0 549.3,538.8 539.4,538.7 529.9,538.6 520.7,538.6 511.4,538.6 502.1,538.6 492.8,538.6 483.5,538.6"/></clipPath><polygon points="483.5,508.8 492.8,508.8 502.1,508.8 511.4,508.8 520.7,508.8 530.1,508.8 539.8,508.9 549.7,509.0 559.3,509.2 568.3,509.1 576.2,508.8 583.1,508.3 589.0,507.8 594.1,507.0 598.9,506.0 604.2,504.5 610.0,502.4 616.2,499.9 622.4,497.0 628.1,493.9 633.1,490.9 637.1,487.8 640.7,484.6 644.3,481.0 647.9,476.9 651.7,472.5 655.6,467.6 659.7,461.9 663.8,455.9 667.6,450.3 670.9,445.6 673.2,442.5 674.7,440.5 676.1,438.8 677.3,437.4 678.8,435.7 680.7,433.5 683.0,430.8 685.6,427.9 688.5,424.9 691.6,421.9 694.8,419.2 698.0,416.6 701.4,414.1 704.9,411.7 708.6,409.4 712.4,407.4 716.2,405.5 720.1,403.8 724.1,402.3 728.2,401.0 732.2,400.0 736.2,399.2 740.2,398.7 744.2,398.4 748.3,398.2 752.8,398.2 757.5,398.4 762.3,398.8 766.9,399.3 771.2,399.9 775.1,400.6 778.7,401.5 782.2,402.5 785.5,403.6 788.7,405.0 791.9,406.5 795.1,408.2 798.0,410.0 800.8,411.9 803.4,413.8 805.9,415.8 808.4,418.0 810.9,420.4 813.3,423.0 815.5,425.9 817.6,428.9 819.6,432.0 821.5,435.4 823.2,438.9 824.7,442.8 825.9,447.0 826.6,450.8 827.0,454.2 827.3,456.9 827.7,459.5 798.1,463.5 797.7,460.5 797.4,457.6 797.1,455.3 796.8,453.6 796.5,452.4 795.9,450.9 795.0,449.1 794.0,447.2 792.8,445.4 791.7,443.7 790.6,442.4 789.5,441.1 788.2,439.9 786.8,438.7 785.2,437.4 783.5,436.2 781.9,435.0 780.2,434.0 778.5,433.1 776.7,432.2 774.9,431.5 773.0,430.8 771.1,430.3 769.0,429.8 766.4,429.3 763.3,428.9 759.6,428.5 755.7,428.2 752.0,428.0 748.7,428.0 745.8,428.1 743.3,428.3 741.0,428.6 738.7,429.0 736.4,429.6 733.9,430.4 731.3,431.4 728.7,432.5 726.1,433.8 723.6,435.2 721.1,436.7 718.7,438.4 716.2,440.2 713.8,442.1 711.6,444.1 709.5,446.0 707.5,448.2 705.3,450.5 703.2,453.0 701.2,455.3 699.7,457.0 698.9,457.9 698.3,458.7 697.1,460.3 695.1,463.0 692.2,467.2 688.4,472.7 684.1,479.0 679.4,485.5 674.7,491.5 670.4,496.5 666.0,501.4 661.3,506.3 655.9,511.0 649.7,515.5 643.0,519.7 635.8,523.6 628.2,527.2 620.7,530.3 613.2,532.9 606.1,534.9 599.3,536.4 592.5,537.4 585.5,538.0 577.8,538.6 568.9,538.9 559.2,539.0 549.3,538.8 539.4,538.7 529.9,538.6 520.7,538.6 511.4,538.6 502.1,538.6 492.8,538.6 483.5,538.6" fill="#3c3c3c" stroke="#46462a" stroke-width="1.8"/><g clip-path="url(#cBand)"><g filter="url(#fB1b)"><polygon points="483.5,508.8 492.8,508.8 502.1,508.8 511.4,508.8 520.7,508.8 530.1,508.8 539.8,508.9 549.7,509.0 559.3,509.2 568.3,509.1 576.2,508.8 583.1,508.3 589.0,507.8 594.1,507.0 598.9,506.0 604.2,504.5 610.0,502.4 616.2,499.9 622.4,497.0 628.1,493.9 633.1,490.9 637.1,487.8 640.7,484.6 644.3,481.0 647.9,476.9 651.7,472.5 655.6,467.6 659.7,461.9 663.8,455.9 667.6,450.3 670.9,445.6 673.2,442.5 674.7,440.5 676.1,438.8 677.3,437.4 678.8,435.7 680.7,433.5 683.0,430.8 685.6,427.9 688.5,424.9 691.6,421.9 694.8,419.2 698.0,416.6 701.4,414.1 704.9,411.7 708.6,409.4 712.4,407.4 716.2,405.5 720.1,403.8 724.1,402.3 728.2,401.0 732.2,400.0 736.2,399.2 740.2,398.7 744.2,398.4 748.3,398.2 752.8,398.2 757.5,398.4 762.3,398.8 766.9,399.3 771.2,399.9 775.1,400.6 778.7,401.5 782.2,402.5 785.5,403.6 788.7,405.0 791.9,406.5 795.1,408.2 798.0,410.0 800.8,411.9 803.4,413.8 805.9,415.8 808.4,418.0 810.9,420.4 813.3,423.0 815.5,425.9 817.6,428.9 819.6,432.0 821.5,435.4 823.2,438.9 824.7,442.8 825.9,447.0 826.6,450.8 827.0,454.2 827.3,456.9 827.7,459.5 798.1,463.5 797.7,460.5 797.4,457.6 797.1,455.3 796.8,453.6 796.5,452.4 795.9,450.9 795.0,449.1 794.0,447.2 792.8,445.4 791.7,443.7 790.6,442.4 789.5,441.1 788.2,439.9 786.8,438.7 785.2,437.4 783.5,436.2 781.9,435.0 780.2,434.0 778.5,433.1 776.7,432.2 774.9,431.5 773.0,430.8 771.1,430.3 769.0,429.8 766.4,429.3 763.3,428.9 759.6,428.5 755.7,428.2 752.0,428.0 748.7,428.0 745.8,428.1 743.3,428.3 741.0,428.6 738.7,429.0 736.4,429.6 733.9,430.4 731.3,431.4 728.7,432.5 726.1,433.8 723.6,435.2 721.1,436.7 718.7,438.4 716.2,440.2 713.8,442.1 711.6,444.1 709.5,446.0 707.5,448.2 705.3,450.5 703.2,453.0 701.2,455.3 699.7,457.0 698.9,457.9 698.3,458.7 697.1,460.3 695.1,463.0 692.2,467.2 688.4,472.7 684.1,479.0 679.4,485.5 674.7,491.5 670.4,496.5 666.0,501.4 661.3,506.3 655.9,511.0 649.7,515.5 643.0,519.7 635.8,523.6 628.2,527.2 620.7,530.3 613.2,532.9 606.1,534.9 599.3,536.4 592.5,537.4 585.5,538.0 577.8,538.6 568.9,538.9 559.2,539.0 549.3,538.8 539.4,538.7 529.9,538.6 520.7,538.6 511.4,538.6 502.1,538.6 492.8,538.6 483.5,538.6" fill="#3c3c3c" stroke="#3c3c3c" stroke-width="4"/><polygon points="483.5,505.8 492.8,505.8 502.1,505.8 511.4,505.8 520.7,505.8 530.1,505.8 539.8,505.9 549.8,506.0 559.4,506.2 568.2,506.1 576.1,505.8 582.8,505.3 588.6,504.8 593.5,504.1 598.2,503.1 603.3,501.6 609.0,499.6 615.0,497.2 621.0,494.3 626.6,491.3 631.4,488.4 635.2,485.5 638.7,482.5 642.1,479.0 645.7,475.0 649.4,470.6 653.2,465.8 657.2,460.2 661.3,454.2 665.1,448.6 668.4,443.9 670.8,440.7 672.4,438.6 673.8,436.9 675.0,435.4 676.5,433.7 678.4,431.5 680.7,428.8 683.4,425.9 686.4,422.8 689.6,419.7 692.8,416.9 696.1,414.3 699.6,411.7 703.3,409.2 707.1,406.8 711.0,404.7 714.9,402.8 719.0,401.0 723.2,399.4 727.4,398.1 731.6,397.0 735.7,396.2 739.9,395.7 744.0,395.4 748.3,395.2 752.9,395.2 757.7,395.4 762.6,395.8 767.2,396.3 771.6,396.9 775.7,397.7 779.5,398.6 783.1,399.6 786.5,400.8 789.9,402.2 793.3,403.8 796.5,405.6 799.6,407.5 802.5,409.4 805.2,411.4 807.8,413.5 810.4,415.8 813.0,418.3 815.6,421.1 817.9,424.1 820.1,427.2 822.2,430.5 824.1,434.0 825.9,437.7 827.6,441.9 828.8,446.3 829.6,450.4 830.0,453.8 830.3,456.5 830.6,459.1 802.6,462.9 802.2,460.0 801.8,457.1 801.5,454.6 801.2,452.6 800.7,450.9 800.0,449.1 799.0,447.0 797.8,444.9 796.5,442.9 795.2,441.0 794.0,439.5 792.7,438.0 791.2,436.6 789.6,435.2 787.9,433.9 786.1,432.5 784.3,431.3 782.4,430.1 780.5,429.1 778.5,428.2 776.5,427.3 774.4,426.6 772.3,426.0 769.9,425.4 767.2,424.9 763.8,424.4 760.0,424.0 756.0,423.7 752.1,423.5 748.6,423.5 745.6,423.6 742.8,423.9 740.2,424.2 737.7,424.7 735.2,425.3 732.5,426.2 729.7,427.2 726.8,428.5 724.0,429.8 721.3,431.3 718.7,432.9 716.1,434.7 713.5,436.7 711.0,438.7 708.6,440.7 706.4,442.8 704.2,445.1 702.0,447.6 699.9,450.0 697.9,452.3 696.4,454.1 695.5,455.1 694.7,456.0 693.5,457.6 691.5,460.4 688.5,464.6 684.7,470.2 680.4,476.5 675.8,482.8 671.3,488.6 667.0,493.6 662.8,498.4 658.2,503.0 653.0,507.5 647.2,511.8 640.8,515.9 633.7,519.6 626.4,523.1 619.1,526.1 611.9,528.6 605.1,530.6 598.5,532.0 592.0,532.9 585.2,533.6 577.6,534.1 568.8,534.4 559.2,534.5 549.3,534.4 539.5,534.2 530.0,534.1 520.7,534.1 511.4,534.1 502.1,534.1 492.8,534.1 483.5,534.1" fill="#424242"/><polygon points="483.5,505.8 492.8,505.8 502.1,505.8 511.4,505.8 520.7,505.8 530.1,505.8 539.8,505.9 549.8,506.0 559.4,506.2 568.2,506.1 576.1,505.8 582.8,505.3 588.6,504.8 593.5,504.1 598.2,503.1 603.3,501.6 609.0,499.6 615.0,497.2 621.0,494.3 626.6,491.3 631.4,488.4 635.2,485.5 638.7,482.5 642.1,479.0 645.7,475.0 649.4,470.6 653.2,465.8 657.2,460.2 661.3,454.2 665.1,448.6 668.4,443.9 670.8,440.7 672.4,438.6 673.8,436.9 675.0,435.4 676.5,433.7 678.4,431.5 680.7,428.8 683.4,425.9 686.4,422.8 689.6,419.7 692.8,416.9 696.1,414.3 699.6,411.7 703.3,409.2 707.1,406.8 711.0,404.7 714.9,402.8 719.0,401.0 723.2,399.4 727.4,398.1 731.6,397.0 735.7,396.2 739.9,395.7 744.0,395.4 748.3,395.2 752.9,395.2 757.7,395.4 762.6,395.8 767.2,396.3 771.6,396.9 775.7,397.7 779.5,398.6 783.1,399.6 786.5,400.8 789.9,402.2 793.3,403.8 796.5,405.6 799.6,407.5 802.5,409.4 805.2,411.4 807.8,413.5 810.4,415.8 813.0,418.3 815.6,421.1 817.9,424.1 820.1,427.2 822.2,430.5 824.1,434.0 825.9,437.7 827.6,441.9 828.8,446.3 829.6,450.4 830.0,453.8 830.3,456.5 830.6,459.1 806.4,462.4 806.0,459.5 805.7,456.6 805.4,454.1 805.0,451.8 804.4,449.7 803.5,447.5 802.4,445.2 801.1,442.9 799.8,440.7 798.3,438.7 796.9,436.9 795.4,435.3 793.9,433.8 792.1,432.3 790.3,430.8 788.4,429.4 786.4,428.0 784.3,426.8 782.3,425.6 780.1,424.6 777.8,423.7 775.6,422.9 773.3,422.2 770.7,421.6 767.8,421.1 764.3,420.6 760.4,420.2 756.2,419.9 752.2,419.7 748.6,419.7 745.4,419.8 742.4,420.0 739.6,420.4 736.9,420.9 734.1,421.6 731.2,422.5 728.2,423.7 725.2,425.0 722.2,426.4 719.4,428.0 716.6,429.7 713.8,431.6 711.1,433.6 708.5,435.7 706.0,437.9 703.6,440.1 701.3,442.5 699.1,445.0 696.9,447.5 694.9,449.8 693.4,451.5 692.5,452.6 691.7,453.6 690.4,455.3 688.3,458.1 685.3,462.5 681.5,468.0 677.2,474.3 672.7,480.5 668.3,486.2 664.1,491.1 659.9,495.7 655.5,500.2 650.6,504.5 645.1,508.6 638.8,512.5 632.0,516.2 624.9,519.5 617.7,522.5 610.7,524.9 604.1,526.8 597.8,528.1 591.5,529.1 584.8,529.7 577.3,530.2 568.7,530.6 559.3,530.6 549.4,530.5 539.5,530.3 530.0,530.3 520.7,530.3 511.4,530.3 502.1,530.3 492.8,530.3 483.5,530.3" fill="#4a4a4a"/><polygon points="483.5,505.8 492.8,505.8 502.1,505.8 511.4,505.8 520.7,505.8 530.1,505.8 539.8,505.9 549.8,506.0 559.4,506.2 568.2,506.1 576.1,505.8 582.8,505.3 588.6,504.8 593.5,504.1 598.2,503.1 603.3,501.6 609.0,499.6 615.0,497.2 621.0,494.3 626.6,491.3 631.4,488.4 635.2,485.5 638.7,482.5 642.1,479.0 645.7,475.0 649.4,470.6 653.2,465.8 657.2,460.2 661.3,454.2 665.1,448.6 668.4,443.9 670.8,440.7 672.4,438.6 673.8,436.9 675.0,435.4 676.5,433.7 678.4,431.5 680.7,428.8 683.4,425.9 686.4,422.8 689.6,419.7 692.8,416.9 696.1,414.3 699.6,411.7 703.3,409.2 707.1,406.8 711.0,404.7 714.9,402.8 719.0,401.0 723.2,399.4 727.4,398.1 731.6,397.0 735.7,396.2 739.9,395.7 744.0,395.4 748.3,395.2 752.9,395.2 757.7,395.4 762.6,395.8 767.2,396.3 771.6,396.9 775.7,397.7 779.5,398.6 783.1,399.6 786.5,400.8 789.9,402.2 793.3,403.8 796.5,405.6 799.6,407.5 802.5,409.4 805.2,411.4 807.8,413.5 810.4,415.8 813.0,418.3 815.6,421.1 817.9,424.1 820.1,427.2 822.2,430.5 824.1,434.0 825.9,437.7 827.6,441.9 828.8,446.3 829.6,450.4 830.0,453.8 830.3,456.5 830.6,459.1 809.4,462.0 809.0,459.1 808.7,456.3 808.3,453.6 807.9,451.1 807.2,448.7 806.3,446.3 805.1,443.9 803.7,441.4 802.2,439.1 800.7,436.9 799.2,435.0 797.6,433.2 795.9,431.6 794.0,430.0 792.1,428.4 790.1,426.9 788.0,425.5 785.8,424.2 783.6,423.0 781.3,421.9 778.9,420.9 776.5,420.1 774.0,419.3 771.3,418.7 768.2,418.1 764.7,417.6 760.6,417.2 756.4,416.9 752.3,416.7 748.5,416.7 745.2,416.8 742.1,417.0 739.2,417.4 736.3,418.0 733.3,418.7 730.2,419.7 727.1,420.9 724.0,422.2 720.9,423.8 717.9,425.4 715.0,427.2 712.1,429.1 709.3,431.2 706.6,433.4 704.0,435.7 701.5,438.0 699.2,440.5 696.9,443.0 694.7,445.5 692.7,447.8 691.2,449.5 690.2,450.7 689.3,451.8 688.0,453.5 685.9,456.4 682.8,460.8 679.1,466.3 674.8,472.5 670.3,478.7 666.0,484.3 661.8,489.1 657.8,493.7 653.5,498.0 648.7,502.2 643.4,506.2 637.3,509.9 630.7,513.5 623.7,516.8 616.6,519.7 609.8,522.1 603.4,523.9 597.3,525.2 591.2,526.1 584.6,526.8 577.2,527.3 568.6,527.6 559.3,527.6 549.4,527.5 539.6,527.4 530.0,527.3 520.7,527.3 511.4,527.3 502.1,527.3 492.8,527.3 483.5,527.3" fill="#505050"/><polygon points="483.5,505.8 492.8,505.8 502.1,505.8 511.4,505.8 520.7,505.8 530.1,505.8 539.8,505.9 549.8,506.0 559.4,506.2 568.2,506.1 576.1,505.8 582.8,505.3 588.6,504.8 593.5,504.1 598.2,503.1 603.3,501.6 609.0,499.6 615.0,497.2 621.0,494.3 626.6,491.3 631.4,488.4 635.2,485.5 638.7,482.5 642.1,479.0 645.7,475.0 649.4,470.6 653.2,465.8 657.2,460.2 661.3,454.2 665.1,448.6 668.4,443.9 670.8,440.7 672.4,438.6 673.8,436.9 675.0,435.4 676.5,433.7 678.4,431.5 680.7,428.8 683.4,425.9 686.4,422.8 689.6,419.7 692.8,416.9 696.1,414.3 699.6,411.7 703.3,409.2 707.1,406.8 711.0,404.7 714.9,402.8 719.0,401.0 723.2,399.4 727.4,398.1 731.6,397.0 735.7,396.2 739.9,395.7 744.0,395.4 748.3,395.2 752.9,395.2 757.7,395.4 762.6,395.8 767.2,396.3 771.6,396.9 775.7,397.7 779.5,398.6 783.1,399.6 786.5,400.8 789.9,402.2 793.3,403.8 796.5,405.6 799.6,407.5 802.5,409.4 805.2,411.4 807.8,413.5 810.4,415.8 813.0,418.3 815.6,421.1 817.9,424.1 820.1,427.2 822.2,430.5 824.1,434.0 825.9,437.7 827.6,441.9 828.8,446.3 829.6,450.4 830.0,453.8 830.3,456.5 830.6,459.1 810.8,461.8 810.4,459.0 810.1,456.1 809.8,453.4 809.3,450.8 808.6,448.3 807.6,445.7 806.4,443.2 805.0,440.7 803.5,438.3 801.9,436.0 800.3,434.0 798.7,432.2 796.9,430.5 795.0,428.8 793.0,427.3 791.0,425.7 788.8,424.3 786.6,422.9 784.3,421.6 781.9,420.5 779.4,419.5 777.0,418.6 774.4,417.9 771.6,417.2 768.5,416.7 764.8,416.2 760.8,415.7 756.5,415.4 752.3,415.2 748.5,415.2 745.1,415.3 741.9,415.6 738.9,416.0 735.9,416.5 732.9,417.3 729.7,418.3 726.5,419.5 723.3,420.9 720.2,422.4 717.1,424.1 714.2,425.9 711.3,427.9 708.4,430.1 705.6,432.3 703.0,434.5 700.5,436.9 698.1,439.5 695.7,442.1 693.6,444.6 691.6,446.9 690.1,448.6 689.1,449.7 688.1,450.9 686.8,452.6 684.7,455.5 681.6,459.9 677.8,465.5 673.6,471.7 669.2,477.8 664.8,483.3 660.7,488.1 656.7,492.6 652.4,497.0 647.8,501.1 642.6,504.9 636.6,508.6 630.0,512.2 623.1,515.4 616.1,518.3 609.3,520.7 603.0,522.5 597.0,523.7 591.0,524.6 584.5,525.3 577.1,525.8 568.6,526.1 559.3,526.1 549.5,526.0 539.6,525.9 530.0,525.8 520.7,525.8 511.4,525.8 502.1,525.8 492.8,525.8 483.5,525.8" fill="#5a5a5a"/><polygon points="483.5,505.8 492.8,505.8 502.1,505.8 511.4,505.8 520.7,505.8 530.1,505.8 539.8,505.9 549.8,506.0 559.4,506.2 568.2,506.1 576.1,505.8 582.8,505.3 588.6,504.8 593.5,504.1 598.2,503.1 603.3,501.6 609.0,499.6 615.0,497.2 621.0,494.3 626.6,491.3 631.4,488.4 635.2,485.5 638.7,482.5 642.1,479.0 645.7,475.0 649.4,470.6 653.2,465.8 657.2,460.2 661.3,454.2 665.1,448.6 668.4,443.9 670.8,440.7 672.4,438.6 673.8,436.9 675.0,435.4 676.5,433.7 678.4,431.5 680.7,428.8 683.4,425.9 686.4,422.8 689.6,419.7 692.8,416.9 696.1,414.3 699.6,411.7 703.3,409.2 707.1,406.8 711.0,404.7 714.9,402.8 719.0,401.0 723.2,399.4 727.4,398.1 731.6,397.0 735.7,396.2 739.9,395.7 744.0,395.4 748.3,395.2 752.9,395.2 757.7,395.4 762.6,395.8 767.2,396.3 771.6,396.9 775.7,397.7 779.5,398.6 783.1,399.6 786.5,400.8 789.9,402.2 793.3,403.8 796.5,405.6 799.6,407.5 802.5,409.4 805.2,411.4 807.8,413.5 810.4,415.8 813.0,418.3 815.6,421.1 817.9,424.1 820.1,427.2 822.2,430.5 824.1,434.0 825.9,437.7 827.6,441.9 828.8,446.3 829.6,450.4 830.0,453.8 830.3,456.5 830.6,459.1 811.9,461.6 811.5,458.8 811.2,456.0 810.8,453.2 810.3,450.5 809.6,447.9 808.6,445.3 807.3,442.7 805.9,440.1 804.4,437.7 802.8,435.4 801.1,433.4 799.4,431.5 797.6,429.7 795.7,428.0 793.7,426.4 791.6,424.9 789.4,423.4 787.1,422.0 784.7,420.7 782.3,419.6 779.8,418.5 777.3,417.7 774.7,416.9 771.8,416.2 768.6,415.6 765.0,415.1 760.8,414.7 756.6,414.4 752.4,414.2 748.5,414.1 745.1,414.3 741.8,414.5 738.7,414.9 735.7,415.5 732.6,416.3 729.4,417.3 726.1,418.5 722.9,419.9 719.7,421.5 716.6,423.2 713.6,425.0 710.6,427.1 707.7,429.2 705.0,431.5 702.3,433.8 699.8,436.2 697.3,438.8 695.0,441.4 692.8,443.9 690.8,446.2 689.3,447.9 688.3,449.0 687.3,450.2 686.0,452.0 683.8,454.9 680.8,459.3 677.0,464.9 672.7,471.1 668.3,477.2 664.0,482.7 659.9,487.4 655.9,491.9 651.7,496.2 647.1,500.2 642.0,504.1 636.1,507.7 629.5,511.2 622.7,514.5 615.7,517.3 609.0,519.7 602.8,521.5 596.9,522.7 590.9,523.6 584.4,524.2 577.1,524.7 568.6,525.1 559.3,525.1 549.5,525.0 539.6,524.8 530.0,524.7 520.7,524.7 511.4,524.7 502.1,524.7 492.8,524.7 483.5,524.7" fill="#747474"/><polygon points="483.5,505.8 492.8,505.8 502.1,505.8 511.4,505.8 520.7,505.8 530.1,505.8 539.8,505.9 549.8,506.0 559.4,506.2 568.2,506.1 576.1,505.8 582.8,505.3 588.6,504.8 593.5,504.1 598.2,503.1 603.3,501.6 609.0,499.6 615.0,497.2 621.0,494.3 626.6,491.3 631.4,488.4 635.2,485.5 638.7,482.5 642.1,479.0 645.7,475.0 649.4,470.6 653.2,465.8 657.2,460.2 661.3,454.2 665.1,448.6 668.4,443.9 670.8,440.7 672.4,438.6 673.8,436.9 675.0,435.4 676.5,433.7 678.4,431.5 680.7,428.8 683.4,425.9 686.4,422.8 689.6,419.7 692.8,416.9 696.1,414.3 699.6,411.7 703.3,409.2 707.1,406.8 711.0,404.7 714.9,402.8 719.0,401.0 723.2,399.4 727.4,398.1 731.6,397.0 735.7,396.2 739.9,395.7 744.0,395.4 748.3,395.2 752.9,395.2 757.7,395.4 762.6,395.8 767.2,396.3 771.6,396.9 775.7,397.7 779.5,398.6 783.1,399.6 786.5,400.8 789.9,402.2 793.3,403.8 796.5,405.6 799.6,407.5 802.5,409.4 805.2,411.4 807.8,413.5 810.4,415.8 813.0,418.3 815.6,421.1 817.9,424.1 820.1,427.2 822.2,430.5 824.1,434.0 825.9,437.7 827.6,441.9 828.8,446.3 829.6,450.4 830.0,453.8 830.3,456.5 830.6,459.1 812.8,461.5 812.4,458.7 812.1,455.9 811.7,453.1 811.2,450.3 810.5,447.6 809.4,445.0 808.1,442.3 806.7,439.7 805.1,437.2 803.5,434.9 801.8,432.8 800.0,430.9 798.2,429.1 796.2,427.4 794.2,425.7 792.1,424.1 789.9,422.6 787.5,421.2 785.1,419.9 782.6,418.7 780.1,417.7 777.6,416.8 774.9,416.0 772.0,415.3 768.8,414.7 765.1,414.2 760.9,413.8 756.6,413.5 752.4,413.3 748.5,413.2 745.0,413.4 741.7,413.6 738.6,414.0 735.5,414.6 732.3,415.4 729.1,416.5 725.8,417.7 722.5,419.1 719.3,420.7 716.2,422.4 713.1,424.3 710.1,426.3 707.2,428.5 704.4,430.8 701.7,433.1 699.1,435.5 696.6,438.1 694.3,440.8 692.1,443.3 690.1,445.6 688.6,447.3 687.6,448.5 686.6,449.7 685.3,451.5 683.1,454.4 680.0,458.8 676.2,464.4 672.0,470.6 667.6,476.7 663.3,482.1 659.3,486.8 655.3,491.3 651.1,495.6 646.6,499.5 641.5,503.3 635.6,507.0 629.1,510.4 622.3,513.7 615.4,516.5 608.7,518.8 602.6,520.6 596.7,521.8 590.8,522.7 584.3,523.3 577.0,523.8 568.6,524.2 559.3,524.2 549.5,524.1 539.6,523.9 530.0,523.8 520.7,523.8 511.4,523.8 502.1,523.8 492.8,523.8 483.5,523.8" fill="#929292"/><polygon points="483.5,505.8 492.8,505.8 502.1,505.8 511.4,505.8 520.7,505.8 530.1,505.8 539.8,505.9 549.8,506.0 559.4,506.2 568.2,506.1 576.1,505.8 582.8,505.3 588.6,504.8 593.5,504.1 598.2,503.1 603.3,501.6 609.0,499.6 615.0,497.2 621.0,494.3 626.6,491.3 631.4,488.4 635.2,485.5 638.7,482.5 642.1,479.0 645.7,475.0 649.4,470.6 653.2,465.8 657.2,460.2 661.3,454.2 665.1,448.6 668.4,443.9 670.8,440.7 672.4,438.6 673.8,436.9 675.0,435.4 676.5,433.7 678.4,431.5 680.7,428.8 683.4,425.9 686.4,422.8 689.6,419.7 692.8,416.9 696.1,414.3 699.6,411.7 703.3,409.2 707.1,406.8 711.0,404.7 714.9,402.8 719.0,401.0 723.2,399.4 727.4,398.1 731.6,397.0 735.7,396.2 739.9,395.7 744.0,395.4 748.3,395.2 752.9,395.2 757.7,395.4 762.6,395.8 767.2,396.3 771.6,396.9 775.7,397.7 779.5,398.6 783.1,399.6 786.5,400.8 789.9,402.2 793.3,403.8 796.5,405.6 799.6,407.5 802.5,409.4 805.2,411.4 807.8,413.5 810.4,415.8 813.0,418.3 815.6,421.1 817.9,424.1 820.1,427.2 822.2,430.5 824.1,434.0 825.9,437.7 827.6,441.9 828.8,446.3 829.6,450.4 830.0,453.8 830.3,456.5 830.6,459.1 813.6,461.4 813.3,458.6 812.9,455.8 812.6,453.0 812.1,450.1 811.3,447.4 810.2,444.6 808.9,441.9 807.4,439.2 805.8,436.7 804.2,434.4 802.5,432.2 800.7,430.2 798.8,428.4 796.8,426.7 794.8,425.0 792.6,423.4 790.3,421.9 788.0,420.4 785.5,419.1 783.0,417.9 780.4,416.9 777.8,416.0 775.1,415.2 772.2,414.5 768.9,413.9 765.2,413.3 761.0,412.9 756.7,412.6 752.4,412.4 748.5,412.4 745.0,412.5 741.6,412.7 738.5,413.2 735.3,413.8 732.1,414.6 728.8,415.6 725.5,416.9 722.1,418.3 718.9,419.9 715.7,421.7 712.6,423.5 709.6,425.6 706.7,427.8 703.8,430.1 701.1,432.4 698.5,434.9 696.0,437.5 693.6,440.2 691.4,442.7 689.4,445.0 687.9,446.7 686.9,447.9 685.9,449.1 684.5,450.9 682.4,453.9 679.3,458.3 675.5,463.9 671.3,470.1 666.9,476.1 662.6,481.5 658.6,486.3 654.6,490.7 650.5,494.9 646.0,498.8 641.0,502.6 635.2,506.2 628.7,509.6 621.9,512.8 615.1,515.7 608.5,518.0 602.4,519.7 596.6,521.0 590.6,521.8 584.2,522.4 577.0,523.0 568.6,523.3 559.3,523.3 549.5,523.2 539.6,523.0 530.0,523.0 520.7,523.0 511.4,523.0 502.1,523.0 492.8,523.0 483.5,523.0" fill="#b4b4b4"/><polygon points="483.5,505.8 492.8,505.8 502.1,505.8 511.4,505.8 520.7,505.8 530.1,505.8 539.8,505.9 549.8,506.0 559.4,506.2 568.2,506.1 576.1,505.8 582.8,505.3 588.6,504.8 593.5,504.1 598.2,503.1 603.3,501.6 609.0,499.6 615.0,497.2 621.0,494.3 626.6,491.3 631.4,488.4 635.2,485.5 638.7,482.5 642.1,479.0 645.7,475.0 649.4,470.6 653.2,465.8 657.2,460.2 661.3,454.2 665.1,448.6 668.4,443.9 670.8,440.7 672.4,438.6 673.8,436.9 675.0,435.4 676.5,433.7 678.4,431.5 680.7,428.8 683.4,425.9 686.4,422.8 689.6,419.7 692.8,416.9 696.1,414.3 699.6,411.7 703.3,409.2 707.1,406.8 711.0,404.7 714.9,402.8 719.0,401.0 723.2,399.4 727.4,398.1 731.6,397.0 735.7,396.2 739.9,395.7 744.0,395.4 748.3,395.2 752.9,395.2 757.7,395.4 762.6,395.8 767.2,396.3 771.6,396.9 775.7,397.7 779.5,398.6 783.1,399.6 786.5,400.8 789.9,402.2 793.3,403.8 796.5,405.6 799.6,407.5 802.5,409.4 805.2,411.4 807.8,413.5 810.4,415.8 813.0,418.3 815.6,421.1 817.9,424.1 820.1,427.2 822.2,430.5 824.1,434.0 825.9,437.7 827.6,441.9 828.8,446.3 829.6,450.4 830.0,453.8 830.3,456.5 830.6,459.1 814.5,461.3 814.1,458.5 813.8,455.7 813.5,452.8 813.0,449.9 812.2,447.1 811.0,444.3 809.7,441.5 808.2,438.8 806.6,436.2 804.9,433.8 803.2,431.6 801.3,429.6 799.4,427.7 797.4,426.0 795.3,424.3 793.1,422.7 790.8,421.1 788.4,419.7 785.9,418.3 783.4,417.1 780.8,416.0 778.1,415.1 775.3,414.3 772.4,413.6 769.1,413.0 765.3,412.5 761.1,412.0 756.7,411.7 752.4,411.5 748.5,411.5 744.9,411.6 741.6,411.9 738.3,412.3 735.1,412.9 731.8,413.7 728.5,414.8 725.1,416.1 721.8,417.5 718.5,419.1 715.3,420.9 712.2,422.8 709.1,424.9 706.1,427.1 703.2,429.4 700.5,431.8 697.9,434.3 695.3,436.9 692.9,439.6 690.7,442.1 688.8,444.4 687.3,446.1 686.2,447.3 685.2,448.6 683.8,450.4 681.7,453.3 678.5,457.8 674.7,463.4 670.5,469.5 666.2,475.6 661.9,481.0 657.9,485.7 654.0,490.1 649.9,494.3 645.5,498.2 640.5,501.8 634.7,505.4 628.3,508.9 621.6,512.0 614.8,514.8 608.2,517.1 602.1,518.9 596.4,520.1 590.5,520.9 584.2,521.6 576.9,522.1 568.5,522.4 559.3,522.4 549.5,522.3 539.6,522.1 530.0,522.1 520.7,522.1 511.4,522.1 502.1,522.1 492.8,522.1 483.5,522.1" fill="#d2d2d2"/><polygon points="483.5,505.8 492.8,505.8 502.1,505.8 511.4,505.8 520.7,505.8 530.1,505.8 539.8,505.9 549.8,506.0 559.4,506.2 568.2,506.1 576.1,505.8 582.8,505.3 588.6,504.8 593.5,504.1 598.2,503.1 603.3,501.6 609.0,499.6 615.0,497.2 621.0,494.3 626.6,491.3 631.4,488.4 635.2,485.5 638.7,482.5 642.1,479.0 645.7,475.0 649.4,470.6 653.2,465.8 657.2,460.2 661.3,454.2 665.1,448.6 668.4,443.9 670.8,440.7 672.4,438.6 673.8,436.9 675.0,435.4 676.5,433.7 678.4,431.5 680.7,428.8 683.4,425.9 686.4,422.8 689.6,419.7 692.8,416.9 696.1,414.3 699.6,411.7 703.3,409.2 707.1,406.8 711.0,404.7 714.9,402.8 719.0,401.0 723.2,399.4 727.4,398.1 731.6,397.0 735.7,396.2 739.9,395.7 744.0,395.4 748.3,395.2 752.9,395.2 757.7,395.4 762.6,395.8 767.2,396.3 771.6,396.9 775.7,397.7 779.5,398.6 783.1,399.6 786.5,400.8 789.9,402.2 793.3,403.8 796.5,405.6 799.6,407.5 802.5,409.4 805.2,411.4 807.8,413.5 810.4,415.8 813.0,418.3 815.6,421.1 817.9,424.1 820.1,427.2 822.2,430.5 824.1,434.0 825.9,437.7 827.6,441.9 828.8,446.3 829.6,450.4 830.0,453.8 830.3,456.5 830.6,459.1 815.6,461.1 815.2,458.4 814.9,455.6 814.5,452.7 814.0,449.7 813.1,446.7 812.0,443.8 810.6,441.0 809.1,438.2 807.5,435.6 805.7,433.2 804.0,431.0 802.1,428.9 800.1,427.0 798.1,425.2 795.9,423.5 793.7,421.8 791.4,420.2 789.0,418.8 786.4,417.4 783.8,416.1 781.1,415.1 778.4,414.1 775.6,413.3 772.6,412.6 769.2,412.0 765.4,411.4 761.2,411.0 756.8,410.6 752.5,410.4 748.5,410.4 744.8,410.5 741.4,410.8 738.2,411.2 734.9,411.9 731.6,412.7 728.2,413.8 724.7,415.1 721.3,416.6 718.0,418.2 714.8,420.0 711.6,421.9 708.5,424.0 705.5,426.3 702.6,428.6 699.8,431.0 697.1,433.5 694.6,436.2 692.2,438.9 690.0,441.5 688.0,443.7 686.5,445.4 685.4,446.7 684.4,448.0 683.0,449.8 680.8,452.7 677.7,457.2 673.9,462.8 669.7,468.9 665.4,475.0 661.1,480.3 657.1,485.0 653.2,489.4 649.2,493.5 644.8,497.3 639.9,501.0 634.2,504.5 627.9,507.9 621.1,511.1 614.4,513.9 607.9,516.1 601.9,517.8 596.2,519.1 590.4,519.9 584.1,520.5 576.9,521.0 568.5,521.3 559.3,521.4 549.5,521.3 539.6,521.1 530.0,521.0 520.7,521.0 511.4,521.0 502.1,521.0 492.8,521.0 483.5,521.0" fill="#e2e2e2"/><polygon points="483.5,505.8 492.8,505.8 502.1,505.8 511.4,505.8 520.7,505.8 530.1,505.8 539.8,505.9 549.8,506.0 559.4,506.2 568.2,506.1 576.1,505.8 582.8,505.3 588.6,504.8 593.5,504.1 598.2,503.1 603.3,501.6 609.0,499.6 615.0,497.2 621.0,494.3 626.6,491.3 631.4,488.4 635.2,485.5 638.7,482.5 642.1,479.0 645.7,475.0 649.4,470.6 653.2,465.8 657.2,460.2 661.3,454.2 665.1,448.6 668.4,443.9 670.8,440.7 672.4,438.6 673.8,436.9 675.0,435.4 676.5,433.7 678.4,431.5 680.7,428.8 683.4,425.9 686.4,422.8 689.6,419.7 692.8,416.9 696.1,414.3 699.6,411.7 703.3,409.2 707.1,406.8 711.0,404.7 714.9,402.8 719.0,401.0 723.2,399.4 727.4,398.1 731.6,397.0 735.7,396.2 739.9,395.7 744.0,395.4 748.3,395.2 752.9,395.2 757.7,395.4 762.6,395.8 767.2,396.3 771.6,396.9 775.7,397.7 779.5,398.6 783.1,399.6 786.5,400.8 789.9,402.2 793.3,403.8 796.5,405.6 799.6,407.5 802.5,409.4 805.2,411.4 807.8,413.5 810.4,415.8 813.0,418.3 815.6,421.1 817.9,424.1 820.1,427.2 822.2,430.5 824.1,434.0 825.9,437.7 827.6,441.9 828.8,446.3 829.6,450.4 830.0,453.8 830.3,456.5 830.6,459.1 818.2,460.8 817.8,458.0 817.5,455.3 817.2,452.3 816.6,449.1 815.7,445.9 814.5,442.8 813.0,439.8 811.4,436.9 809.7,434.1 807.9,431.6 806.0,429.2 804.0,427.0 801.9,425.0 799.8,423.1 797.6,421.4 795.3,419.6 792.8,418.0 790.3,416.4 787.6,415.0 784.9,413.7 782.1,412.6 779.3,411.6 776.3,410.7 773.1,409.9 769.6,409.3 765.7,408.8 761.4,408.3 757.0,408.0 752.5,407.8 748.4,407.7 744.7,407.9 741.2,408.1 737.7,408.6 734.3,409.3 730.8,410.1 727.3,411.3 723.7,412.6 720.2,414.1 716.8,415.8 713.4,417.7 710.1,419.7 706.9,421.9 703.8,424.2 700.9,426.6 698.0,429.0 695.2,431.6 692.6,434.4 690.1,437.1 687.9,439.7 686.0,442.0 684.5,443.7 683.4,444.9 682.3,446.3 680.8,448.2 678.6,451.2 675.5,455.7 671.7,461.3 667.5,467.4 663.2,473.3 659.1,478.6 655.1,483.2 651.2,487.6 647.3,491.5 643.1,495.3 638.4,498.8 632.9,502.2 626.6,505.5 620.1,508.6 613.4,511.4 607.1,513.6 601.2,515.2 595.7,516.4 590.1,517.2 583.9,517.8 576.7,518.3 568.5,518.7 559.3,518.7 549.6,518.6 539.7,518.4 530.0,518.3 520.7,518.3 511.4,518.3 502.1,518.3 492.8,518.3 483.5,518.3" fill="#ececec"/><polygon points="483.5,505.8 492.8,505.8 502.1,505.8 511.4,505.8 520.7,505.8 530.1,505.8 539.8,505.9 549.8,506.0 559.4,506.2 568.2,506.1 576.1,505.8 582.8,505.3 588.6,504.8 593.5,504.1 598.2,503.1 603.3,501.6 609.0,499.6 615.0,497.2 621.0,494.3 626.6,491.3 631.4,488.4 635.2,485.5 638.7,482.5 642.1,479.0 645.7,475.0 649.4,470.6 653.2,465.8 657.2,460.2 661.3,454.2 665.1,448.6 668.4,443.9 670.8,440.7 672.4,438.6 673.8,436.9 675.0,435.4 676.5,433.7 678.4,431.5 680.7,428.8 683.4,425.9 686.4,422.8 689.6,419.7 692.8,416.9 696.1,414.3 699.6,411.7 703.3,409.2 707.1,406.8 711.0,404.7 714.9,402.8 719.0,401.0 723.2,399.4 727.4,398.1 731.6,397.0 735.7,396.2 739.9,395.7 744.0,395.4 748.3,395.2 752.9,395.2 757.7,395.4 762.6,395.8 767.2,396.3 771.6,396.9 775.7,397.7 779.5,398.6 783.1,399.6 786.5,400.8 789.9,402.2 793.3,403.8 796.5,405.6 799.6,407.5 802.5,409.4 805.2,411.4 807.8,413.5 810.4,415.8 813.0,418.3 815.6,421.1 817.9,424.1 820.1,427.2 822.2,430.5 824.1,434.0 825.9,437.7 827.6,441.9 828.8,446.3 829.6,450.4 830.0,453.8 830.3,456.5 830.6,459.1 822.6,460.2 822.3,457.5 822.0,454.7 821.6,451.6 820.9,448.1 819.9,444.5 818.5,441.0 817.0,437.7 815.3,434.6 813.4,431.7 811.5,428.9 809.4,426.3 807.2,423.9 805.0,421.7 802.7,419.7 800.3,417.8 797.9,416.0 795.3,414.2 792.5,412.6 789.6,411.0 786.6,409.6 783.7,408.4 780.6,407.3 777.4,406.4 774.0,405.6 770.4,404.9 766.3,404.3 761.8,403.8 757.2,403.5 752.7,403.3 748.4,403.3 744.4,403.4 740.7,403.7 737.0,404.2 733.3,404.9 729.6,405.8 725.8,407.0 722.0,408.5 718.3,410.1 714.7,411.9 711.2,413.8 707.7,415.9 704.3,418.2 701.1,420.6 698.0,423.1 695.0,425.7 692.1,428.5 689.3,431.4 686.8,434.2 684.5,436.8 682.6,439.0 681.1,440.7 679.9,442.1 678.7,443.6 677.3,445.5 675.0,448.6 671.8,453.2 668.0,458.8 663.8,464.8 659.6,470.7 655.6,475.8 651.7,480.3 648.0,484.5 644.2,488.3 640.3,491.8 635.9,495.1 630.6,498.3 624.6,501.5 618.3,504.5 611.8,507.2 605.7,509.3 600.2,510.9 595.0,512.0 589.6,512.8 583.5,513.4 576.5,513.9 568.4,514.2 559.3,514.2 549.6,514.1 539.7,513.9 530.0,513.9 520.7,513.9 511.4,513.9 502.1,513.9 492.8,513.9 483.5,513.9" fill="#e5e5e5"/><polygon points="483.5,505.8 492.8,505.8 502.1,505.8 511.4,505.8 520.7,505.8 530.1,505.8 539.8,505.9 549.8,506.0 559.4,506.2 568.2,506.1 576.1,505.8 582.8,505.3 588.6,504.8 593.5,504.1 598.2,503.1 603.3,501.6 609.0,499.6 615.0,497.2 621.0,494.3 626.6,491.3 631.4,488.4 635.2,485.5 638.7,482.5 642.1,479.0 645.7,475.0 649.4,470.6 653.2,465.8 657.2,460.2 661.3,454.2 665.1,448.6 668.4,443.9 670.8,440.7 672.4,438.6 673.8,436.9 675.0,435.4 676.5,433.7 678.4,431.5 680.7,428.8 683.4,425.9 686.4,422.8 689.6,419.7 692.8,416.9 696.1,414.3 699.6,411.7 703.3,409.2 707.1,406.8 711.0,404.7 714.9,402.8 719.0,401.0 723.2,399.4 727.4,398.1 731.6,397.0 735.7,396.2 739.9,395.7 744.0,395.4 748.3,395.2 752.9,395.2 757.7,395.4 762.6,395.8 767.2,396.3 771.6,396.9 775.7,397.7 779.5,398.6 783.1,399.6 786.5,400.8 789.9,402.2 793.3,403.8 796.5,405.6 799.6,407.5 802.5,409.4 805.2,411.4 807.8,413.5 810.4,415.8 813.0,418.3 815.6,421.1 817.9,424.1 820.1,427.2 822.2,430.5 824.1,434.0 825.9,437.7 827.6,441.9 828.8,446.3 829.6,450.4 830.0,453.8 830.3,456.5 830.6,459.1 825.6,459.8 825.2,457.1 824.9,454.4 824.5,451.2 823.8,447.4 822.7,443.5 821.3,439.8 819.6,436.3 817.8,433.1 815.9,430.0 813.9,427.1 811.7,424.4 809.4,421.8 807.0,419.5 804.6,417.4 802.1,415.5 799.6,413.6 796.9,411.7 794.0,410.0 791.0,408.3 787.8,406.9 784.7,405.6 781.6,404.5 778.2,403.5 774.6,402.6 770.8,401.9 766.6,401.4 762.1,400.9 757.4,400.5 752.7,400.3 748.3,400.3 744.3,400.4 740.4,400.7 736.5,401.2 732.7,402.0 728.8,403.0 724.8,404.2 720.9,405.7 717.1,407.4 713.3,409.2 709.7,411.2 706.1,413.4 702.6,415.8 699.3,418.3 696.1,420.8 693.0,423.5 690.0,426.4 687.1,429.3 684.6,432.2 682.3,434.8 680.3,437.1 678.9,438.8 677.7,440.2 676.4,441.7 674.9,443.7 672.6,446.8 669.3,451.5 665.5,457.1 661.4,463.1 657.3,468.9 653.3,473.9 649.5,478.3 645.8,482.5 642.2,486.1 638.4,489.5 634.2,492.6 629.1,495.7 623.3,498.9 617.1,501.8 610.8,504.4 604.8,506.5 599.4,508.0 594.4,509.1 589.2,509.8 583.2,510.4 576.3,510.9 568.3,511.2 559.3,511.2 549.7,511.1 539.8,511.0 530.1,510.9 520.7,510.9 511.4,510.9 502.1,510.9 492.8,510.9 483.5,510.9" fill="#d9d9d9"/><polygon points="483.5,505.8 492.8,505.8 502.1,505.8 511.4,505.8 520.7,505.8 530.1,505.8 539.8,505.9 549.8,506.0 559.4,506.2 568.2,506.1 576.1,505.8 582.8,505.3 588.6,504.8 593.5,504.1 598.2,503.1 603.3,501.6 609.0,499.6 615.0,497.2 621.0,494.3 626.6,491.3 631.4,488.4 635.2,485.5 638.7,482.5 642.1,479.0 645.7,475.0 649.4,470.6 653.2,465.8 657.2,460.2 661.3,454.2 665.1,448.6 668.4,443.9 670.8,440.7 672.4,438.6 673.8,436.9 675.0,435.4 676.5,433.7 678.4,431.5 680.7,428.8 683.4,425.9 686.4,422.8 689.6,419.7 692.8,416.9 696.1,414.3 699.6,411.7 703.3,409.2 707.1,406.8 711.0,404.7 714.9,402.8 719.0,401.0 723.2,399.4 727.4,398.1 731.6,397.0 735.7,396.2 739.9,395.7 744.0,395.4 748.3,395.2 752.9,395.2 757.7,395.4 762.6,395.8 767.2,396.3 771.6,396.9 775.7,397.7 779.5,398.6 783.1,399.6 786.5,400.8 789.9,402.2 793.3,403.8 796.5,405.6 799.6,407.5 802.5,409.4 805.2,411.4 807.8,413.5 810.4,415.8 813.0,418.3 815.6,421.1 817.9,424.1 820.1,427.2 822.2,430.5 824.1,434.0 825.9,437.7 827.6,441.9 828.8,446.3 829.6,450.4 830.0,453.8 830.3,456.5 830.6,459.1 826.8,459.6 826.5,457.0 826.2,454.3 825.8,451.0 825.1,447.2 823.9,443.1 822.4,439.3 820.7,435.8 818.9,432.4 816.9,429.3 814.9,426.4 812.6,423.6 810.3,421.0 807.8,418.6 805.4,416.5 802.9,414.5 800.3,412.5 797.6,410.7 794.6,408.9 791.5,407.2 788.3,405.7 785.2,404.4 781.9,403.3 778.5,402.3 774.9,401.4 771.0,400.7 766.8,400.1 762.2,399.6 757.5,399.3 752.8,399.1 748.3,399.0 744.2,399.2 740.3,399.5 736.3,400.0 732.4,400.8 728.4,401.8 724.4,403.0 720.4,404.5 716.6,406.2 712.8,408.1 709.0,410.1 705.4,412.4 701.9,414.8 698.5,417.3 695.3,419.9 692.2,422.6 689.1,425.5 686.2,428.5 683.6,431.4 681.3,434.0 679.4,436.3 677.9,437.9 676.7,439.4 675.4,441.0 673.9,443.0 671.6,446.1 668.3,450.8 664.5,456.4 660.4,462.4 656.3,468.1 652.3,473.1 648.5,477.5 644.9,481.6 641.3,485.2 637.6,488.5 633.5,491.5 628.5,494.6 622.7,497.7 616.6,500.7 610.3,503.2 604.4,505.3 599.1,506.8 594.2,507.9 589.1,508.6 583.1,509.2 576.3,509.7 568.3,510.0 559.3,510.0 549.7,509.9 539.8,509.7 530.1,509.6 520.7,509.6 511.4,509.6 502.1,509.6 492.8,509.6 483.5,509.6" fill="#c2c2c2"/></g></g><circle cx="789.9" cy="462.1" r="37" fill="url(#gBall)"/><clipPath id="cBall"><circle cx="789.9" cy="462.1" r="37"/></clipPath><g clip-path="url(#cBall)"><g filter="url(#fB4)"><rect x="740" y="415" width="100" height="100" fill="none"/><path d="M748 426 Q764 424 782 430 Q790 433 796 438 Q784 436 774 438 Q762 441 754 450Z" fill="#3c3c3c" opacity=".85"/></g></g><ellipse cx="693" cy="632" rx="212.3" ry="53.3" fill="#55553a"/><ellipse cx="693" cy="632" rx="211.3" ry="52.3" fill="#bdbdbd"/><ellipse cx="693" cy="632" rx="206.8" ry="47.8" fill="none" stroke="#e9e9e9" stroke-width="6.4"/><ellipse cx="693" cy="632" rx="206.8" ry="47.8" fill="none" stroke="#f4f4f4" stroke-width="2.6"/><ellipse cx="693" cy="632" rx="202.6" ry="43.6" fill="url(#pHatch)"/><ellipse cx="693" cy="632" rx="202.6" ry="43.6" fill="none" stroke="#8a8a8a" stroke-width="1.2" opacity=".8"/><path d="M833.0 562.8 L806.2 562.8 L779.2 562.8 L752.3 562.8 L725.8 562.8 L700.0 562.8 L673.5 562.8 L645.9 562.8 L619.7 562.8 L596.9 562.8 L580.0 562.8 L570.4 562.8 L566.7 562.9 L566.4 563.0 L567.3 562.9 L567.0 562.6 L565.4 562.0 L564.2 561.2 L563.3 560.2 L562.8 559.2 L562.6 558.3 L562.6 557.4 L562.7 556.6 L563.2 555.7 L564.4 554.9 L566.5 554.2 L569.5 553.7 L573.3 553.4 L577.8 553.1 L583.0 552.5 L588.9 551.3 L595.7 549.5 L603.5 547.4 L611.8 544.8 L620.3 541.8 L628.5 538.2 L636.6 534.0 L644.8 529.1 L653.0 523.8 L660.8 518.2 L668.1 512.5 L674.8 506.4 L681.1 499.8 L687.0 493.1 L692.6 486.6 L697.9 480.5 L702.9 474.7 L707.7 469.0 L712.1 463.7 L716.1 458.9 L719.7 455.0 L722.8 452.1 L725.5 449.9 L727.7 448.4 L729.7 447.3 L731.5 446.6 L733.0 446.2 L734.2 446.1 L735.2 446.5 L735.9 447.3 L736.6 448.6 L737.1 450.6 L737.3 453.2 L737.4 456.1 L737.6 459.2 L737.8 462.0 L738.1 464.6 L738.4 467.2 L738.8 469.8 L739.3 472.4 L740.0 475.0 L740.8 477.6 L741.6 480.1 L742.5 482.6 L743.8 485.2 L745.6 488.0 L747.9 491.1 L750.5 494.5 L753.5 497.9 L756.8 501.1 L760.2 503.9 L763.9 506.2 L768.0 508.2 L772.3 509.9 L776.5 511.4 L780.3 512.6 L783.9 513.3 L787.3 513.3 L790.6 513.3 L793.6 513.6 L796.3 514.6 L798.5 516.5 L800.2 518.9 L801.8 521.8 L803.4 524.8 L805.3 527.7 L807.6 530.7 L810.0 533.8 L812.6 536.9 L815.2 540.0 L817.8 542.8 L820.4 545.4 L823.2 547.8 L825.8 550.1 L828.3 552.2 L830.4 554.0 L832.2 555.5 L833.7 556.6 L834.9 557.6 L835.8 558.4 L836.3 559.3 L836.2 560.1 L835.6 560.8 L834.8 561.5 L833.8 562.1 L833.0 562.8" fill="none" stroke="#4d4d33" stroke-width="10.6" stroke-linecap="round" stroke-linejoin="round" /><path d="M833.0 562.8 L806.2 562.8 L779.2 562.8 L752.3 562.8 L725.8 562.8 L700.0 562.8 L673.5 562.8 L645.9 562.8 L619.7 562.8 L596.9 562.8 L580.0 562.8 L570.4 562.8 L566.7 562.9 L566.4 563.0 L567.3 562.9 L567.0 562.6 L565.4 562.0 L564.2 561.2 L563.3 560.2 L562.8 559.2 L562.6 558.3 L562.6 557.4 L562.7 556.6 L563.2 555.7 L564.4 554.9 L566.5 554.2 L569.5 553.7 L573.3 553.4 L577.8 553.1 L583.0 552.5 L588.9 551.3 L595.7 549.5 L603.5 547.4 L611.8 544.8 L620.3 541.8 L628.5 538.2 L636.6 534.0 L644.8 529.1 L653.0 523.8 L660.8 518.2 L668.1 512.5 L674.8 506.4 L681.1 499.8 L687.0 493.1 L692.6 486.6 L697.9 480.5 L702.9 474.7 L707.7 469.0 L712.1 463.7 L716.1 458.9 L719.7 455.0 L722.8 452.1 L725.5 449.9 L727.7 448.4 L729.7 447.3 L731.5 446.6 L733.0 446.2 L734.2 446.1 L735.2 446.5 L735.9 447.3 L736.6 448.6 L737.1 450.6 L737.3 453.2 L737.4 456.1 L737.6 459.2 L737.8 462.0 L738.1 464.6 L738.4 467.2 L738.8 469.8 L739.3 472.4 L740.0 475.0 L740.8 477.6 L741.6 480.1 L742.5 482.6 L743.8 485.2 L745.6 488.0 L747.9 491.1 L750.5 494.5 L753.5 497.9 L756.8 501.1 L760.2 503.9 L763.9 506.2 L768.0 508.2 L772.3 509.9 L776.5 511.4 L780.3 512.6 L783.9 513.3 L787.3 513.3 L790.6 513.3 L793.6 513.6 L796.3 514.6 L798.5 516.5 L800.2 518.9 L801.8 521.8 L803.4 524.8 L805.3 527.7 L807.6 530.7 L810.0 533.8 L812.6 536.9 L815.2 540.0 L817.8 542.8 L820.4 545.4 L823.2 547.8 L825.8 550.1 L828.3 552.2 L830.4 554.0 L832.2 555.5 L833.7 556.6 L834.9 557.6 L835.8 558.4 L836.3 559.3 L836.2 560.1 L835.6 560.8 L834.8 561.5 L833.8 562.1 L833.0 562.8" fill="none" stroke="#c2c2c2" stroke-width="8.6" stroke-linecap="round" stroke-linejoin="round" /><path d="M833.0 562.8 L806.2 562.8 L779.2 562.8 L752.3 562.8 L725.8 562.8 L700.0 562.8 L673.5 562.8 L645.9 562.8 L619.7 562.8 L596.9 562.8 L580.0 562.8 L570.4 562.8 L566.7 562.9 L566.4 563.0 L567.3 562.9 L567.0 562.6 L565.4 562.0 L564.2 561.2 L563.3 560.2 L562.8 559.2 L562.6 558.3 L562.6 557.4 L562.7 556.6 L563.2 555.7 L564.4 554.9 L566.5 554.2 L569.5 553.7 L573.3 553.4 L577.8 553.1 L583.0 552.5 L588.9 551.3 L595.7 549.5 L603.5 547.4 L611.8 544.8 L620.3 541.8 L628.5 538.2 L636.6 534.0 L644.8 529.1 L653.0 523.8 L660.8 518.2 L668.1 512.5 L674.8 506.4 L681.1 499.8 L687.0 493.1 L692.6 486.6 L697.9 480.5 L702.9 474.7 L707.7 469.0 L712.1 463.7 L716.1 458.9 L719.7 455.0 L722.8 452.1 L725.5 449.9 L727.7 448.4 L729.7 447.3 L731.5 446.6 L733.0 446.2 L734.2 446.1 L735.2 446.5 L735.9 447.3 L736.6 448.6 L737.1 450.6 L737.3 453.2 L737.4 456.1 L737.6 459.2 L737.8 462.0 L738.1 464.6 L738.4 467.2 L738.8 469.8 L739.3 472.4 L740.0 475.0 L740.8 477.6 L741.6 480.1 L742.5 482.6 L743.8 485.2 L745.6 488.0 L747.9 491.1 L750.5 494.5 L753.5 497.9 L756.8 501.1 L760.2 503.9 L763.9 506.2 L768.0 508.2 L772.3 509.9 L776.5 511.4 L780.3 512.6 L783.9 513.3 L787.3 513.3 L790.6 513.3 L793.6 513.6 L796.3 514.6 L798.5 516.5 L800.2 518.9 L801.8 521.8 L803.4 524.8 L805.3 527.7 L807.6 530.7 L810.0 533.8 L812.6 536.9 L815.2 540.0 L817.8 542.8 L820.4 545.4 L823.2 547.8 L825.8 550.1 L828.3 552.2 L830.4 554.0 L832.2 555.5 L833.7 556.6 L834.9 557.6 L835.8 558.4 L836.3 559.3 L836.2 560.1 L835.6 560.8 L834.8 561.5 L833.8 562.1 L833.0 562.8" fill="none" stroke="#e6e6e6" stroke-width="5.3" stroke-linecap="round" stroke-linejoin="round" /><path d="M833.0 562.8 L806.2 562.8 L779.2 562.8 L752.3 562.8 L725.8 562.8 L700.0 562.8 L673.5 562.8 L645.9 562.8 L619.7 562.8 L596.9 562.8 L580.0 562.8 L570.4 562.8 L566.7 562.9 L566.4 563.0 L567.3 562.9 L567.0 562.6 L565.4 562.0 L564.2 561.2 L563.3 560.2 L562.8 559.2 L562.6 558.3 L562.6 557.4 L562.7 556.6 L563.2 555.7 L564.4 554.9 L566.5 554.2 L569.5 553.7 L573.3 553.4 L577.8 553.1 L583.0 552.5 L588.9 551.3 L595.7 549.5 L603.5 547.4 L611.8 544.8 L620.3 541.8 L628.5 538.2 L636.6 534.0 L644.8 529.1 L653.0 523.8 L660.8 518.2 L668.1 512.5 L674.8 506.4 L681.1 499.8 L687.0 493.1 L692.6 486.6 L697.9 480.5 L702.9 474.7 L707.7 469.0 L712.1 463.7 L716.1 458.9 L719.7 455.0 L722.8 452.1 L725.5 449.9 L727.7 448.4 L729.7 447.3 L731.5 446.6 L733.0 446.2 L734.2 446.1 L735.2 446.5 L735.9 447.3 L736.6 448.6 L737.1 450.6 L737.3 453.2 L737.4 456.1 L737.6 459.2 L737.8 462.0 L738.1 464.6 L738.4 467.2 L738.8 469.8 L739.3 472.4 L740.0 475.0 L740.8 477.6 L741.6 480.1 L742.5 482.6 L743.8 485.2 L745.6 488.0 L747.9 491.1 L750.5 494.5 L753.5 497.9 L756.8 501.1 L760.2 503.9 L763.9 506.2 L768.0 508.2 L772.3 509.9 L776.5 511.4 L780.3 512.6 L783.9 513.3 L787.3 513.3 L790.6 513.3 L793.6 513.6 L796.3 514.6 L798.5 516.5 L800.2 518.9 L801.8 521.8 L803.4 524.8 L805.3 527.7 L807.6 530.7 L810.0 533.8 L812.6 536.9 L815.2 540.0 L817.8 542.8 L820.4 545.4 L823.2 547.8 L825.8 550.1 L828.3 552.2 L830.4 554.0 L832.2 555.5 L833.7 556.6 L834.9 557.6 L835.8 558.4 L836.3 559.3 L836.2 560.1 L835.6 560.8 L834.8 561.5 L833.8 562.1 L833.0 562.8" fill="none" stroke="#f5f5f5" stroke-width="2.1" stroke-linecap="round" stroke-linejoin="round" /><path d="M569.0 557.8 L575.2 556.8 L581.5 555.9 L587.8 555.0 L594.0 554.0 L600.0 552.8 L605.7 551.6 L611.0 550.5 L616.4 549.1 L622.1 547.3 L628.5 544.8 L635.9 541.4 L644.0 537.4 L652.4 532.8 L660.6 528.0 L668.1 523.0 L674.8 517.8 L681.0 512.4 L686.9 506.7 L692.5 501.0 L697.9 495.3 L703.4 489.4 L708.8 483.1 L714.0 476.9 L718.5 471.4 L722.0 467.0 L724.3 464.0 L725.5 462.2 L726.2 460.9 L726.7 459.9 L727.5 458.5" fill="none" stroke="#4d4d33" stroke-width="5.4" stroke-linecap="round" stroke-linejoin="round" /><path d="M569.0 557.8 L575.2 556.8 L581.5 555.9 L587.8 555.0 L594.0 554.0 L600.0 552.8 L605.7 551.6 L611.0 550.5 L616.4 549.1 L622.1 547.3 L628.5 544.8 L635.9 541.4 L644.0 537.4 L652.4 532.8 L660.6 528.0 L668.1 523.0 L674.8 517.8 L681.0 512.4 L686.9 506.7 L692.5 501.0 L697.9 495.3 L703.4 489.4 L708.8 483.1 L714.0 476.9 L718.5 471.4 L722.0 467.0 L724.3 464.0 L725.5 462.2 L726.2 460.9 L726.7 459.9 L727.5 458.5" fill="none" stroke="#c2c2c2" stroke-width="3.4" stroke-linecap="round" stroke-linejoin="round" /><path d="M569.0 557.8 L575.2 556.8 L581.5 555.9 L587.8 555.0 L594.0 554.0 L600.0 552.8 L605.7 551.6 L611.0 550.5 L616.4 549.1 L622.1 547.3 L628.5 544.8 L635.9 541.4 L644.0 537.4 L652.4 532.8 L660.6 528.0 L668.1 523.0 L674.8 517.8 L681.0 512.4 L686.9 506.7 L692.5 501.0 L697.9 495.3 L703.4 489.4 L708.8 483.1 L714.0 476.9 L718.5 471.4 L722.0 467.0 L724.3 464.0 L725.5 462.2 L726.2 460.9 L726.7 459.9 L727.5 458.5" fill="none" stroke="#e6e6e6" stroke-width="2.1" stroke-linecap="round" stroke-linejoin="round" /><path d="M569.0 557.8 L575.2 556.8 L581.5 555.9 L587.8 555.0 L594.0 554.0 L600.0 552.8 L605.7 551.6 L611.0 550.5 L616.4 549.1 L622.1 547.3 L628.5 544.8 L635.9 541.4 L644.0 537.4 L652.4 532.8 L660.6 528.0 L668.1 523.0 L674.8 517.8 L681.0 512.4 L686.9 506.7 L692.5 501.0 L697.9 495.3 L703.4 489.4 L708.8 483.1 L714.0 476.9 L718.5 471.4 L722.0 467.0 L724.3 464.0 L725.5 462.2 L726.2 460.9 L726.7 459.9 L727.5 458.5" fill="none" stroke="#f5f5f5" stroke-width="0.8" stroke-linecap="round" stroke-linejoin="round" /><path d="M801.0 522.0 L803.2 525.7 L805.3 529.4 L807.4 533.1 L809.6 536.7 L812.0 540.0 L814.6 543.1 L817.4 545.9 L820.3 548.6 L823.2 551.3 L826.0 554.0" fill="none" stroke="#77775a" stroke-width="1.1"/><path d="M598.8 556.6 L609.0 553.8 L619.5 551.1 L629.8 548.3 L639.5 545.3 L648.3 542.0 L656.0 538.1 L662.8 533.8 L669.0 529.3 L674.7 524.9 L680.0 521.0 L684.8 517.5 L689.0 514.2 L692.8 511.1 L696.4 508.4 L700.0 506.0 L703.5 504.1 L706.8 502.6 L710.0 501.4 L713.1 500.4 L716.0 499.5 L718.8 498.7 L721.6 498.0 L724.2 497.6 L726.6 497.4 L729.0 497.5 L731.3 498.0 L733.5 498.8 L735.6 499.8 L737.4 501.1 L739.0 502.5 L740.3 504.1 L741.4 505.9 L742.3 507.9 L743.0 510.0 L743.3 512.0 L743.4 514.1 L743.1 516.3 L742.6 518.5 L741.9 520.6 L741.0 522.5 L739.8 524.2 L738.4 525.8 L736.7 527.3 L734.9 528.7 L733.0 530.0 L731.0 531.2 L728.8 532.2 L726.5 533.1 L724.2 534.0 L722.0 535.0" fill="none" stroke="#4d4d33" stroke-width="6.6" stroke-linecap="round" stroke-linejoin="round" /><path d="M598.8 556.6 L609.0 553.8 L619.5 551.1 L629.8 548.3 L639.5 545.3 L648.3 542.0 L656.0 538.1 L662.8 533.8 L669.0 529.3 L674.7 524.9 L680.0 521.0 L684.8 517.5 L689.0 514.2 L692.8 511.1 L696.4 508.4 L700.0 506.0 L703.5 504.1 L706.8 502.6 L710.0 501.4 L713.1 500.4 L716.0 499.5 L718.8 498.7 L721.6 498.0 L724.2 497.6 L726.6 497.4 L729.0 497.5 L731.3 498.0 L733.5 498.8 L735.6 499.8 L737.4 501.1 L739.0 502.5 L740.3 504.1 L741.4 505.9 L742.3 507.9 L743.0 510.0 L743.3 512.0 L743.4 514.1 L743.1 516.3 L742.6 518.5 L741.9 520.6 L741.0 522.5 L739.8 524.2 L738.4 525.8 L736.7 527.3 L734.9 528.7 L733.0 530.0 L731.0 531.2 L728.8 532.2 L726.5 533.1 L724.2 534.0 L722.0 535.0" fill="none" stroke="#c2c2c2" stroke-width="4.6" stroke-linecap="round" stroke-linejoin="round" /><path d="M598.8 556.6 L609.0 553.8 L619.5 551.1 L629.8 548.3 L639.5 545.3 L648.3 542.0 L656.0 538.1 L662.8 533.8 L669.0 529.3 L674.7 524.9 L680.0 521.0 L684.8 517.5 L689.0 514.2 L692.8 511.1 L696.4 508.4 L700.0 506.0 L703.5 504.1 L706.8 502.6 L710.0 501.4 L713.1 500.4 L716.0 499.5 L718.8 498.7 L721.6 498.0 L724.2 497.6 L726.6 497.4 L729.0 497.5 L731.3 498.0 L733.5 498.8 L735.6 499.8 L737.4 501.1 L739.0 502.5 L740.3 504.1 L741.4 505.9 L742.3 507.9 L743.0 510.0 L743.3 512.0 L743.4 514.1 L743.1 516.3 L742.6 518.5 L741.9 520.6 L741.0 522.5 L739.8 524.2 L738.4 525.8 L736.7 527.3 L734.9 528.7 L733.0 530.0 L731.0 531.2 L728.8 532.2 L726.5 533.1 L724.2 534.0 L722.0 535.0" fill="none" stroke="#e6e6e6" stroke-width="2.9" stroke-linecap="round" stroke-linejoin="round" /><path d="M598.8 556.6 L609.0 553.8 L619.5 551.1 L629.8 548.3 L639.5 545.3 L648.3 542.0 L656.0 538.1 L662.8 533.8 L669.0 529.3 L674.7 524.9 L680.0 521.0 L684.8 517.5 L689.0 514.2 L692.8 511.1 L696.4 508.4 L700.0 506.0 L703.5 504.1 L706.8 502.6 L710.0 501.4 L713.1 500.4 L716.0 499.5 L718.8 498.7 L721.6 498.0 L724.2 497.6 L726.6 497.4 L729.0 497.5 L731.3 498.0 L733.5 498.8 L735.6 499.8 L737.4 501.1 L739.0 502.5 L740.3 504.1 L741.4 505.9 L742.3 507.9 L743.0 510.0 L743.3 512.0 L743.4 514.1 L743.1 516.3 L742.6 518.5 L741.9 520.6 L741.0 522.5 L739.8 524.2 L738.4 525.8 L736.7 527.3 L734.9 528.7 L733.0 530.0 L731.0 531.2 L728.8 532.2 L726.5 533.1 L724.2 534.0 L722.0 535.0" fill="none" stroke="#f5f5f5" stroke-width="1.1" stroke-linecap="round" stroke-linejoin="round" /><path d="M719.0 494.5 L720.1 493.2 L721.3 492.0 L722.4 490.7 L723.5 489.4 L724.5 488.0 L725.4 486.4 L726.4 484.7 L727.2 483.0 L727.9 481.4 L728.5 480.0 L728.9 478.8 L729.3 477.8 L729.5 476.9 L729.6 476.1 L729.5 475.5 L729.2 475.0 L728.8 474.7 L728.2 474.6 L727.6 474.4 L727.0 474.2" fill="none" stroke="#4d4d33" stroke-width="5.6" stroke-linecap="round" stroke-linejoin="round" /><path d="M719.0 494.5 L720.1 493.2 L721.3 492.0 L722.4 490.7 L723.5 489.4 L724.5 488.0 L725.4 486.4 L726.4 484.7 L727.2 483.0 L727.9 481.4 L728.5 480.0 L728.9 478.8 L729.3 477.8 L729.5 476.9 L729.6 476.1 L729.5 475.5 L729.2 475.0 L728.8 474.7 L728.2 474.6 L727.6 474.4 L727.0 474.2" fill="none" stroke="#c2c2c2" stroke-width="3.6" stroke-linecap="round" stroke-linejoin="round" /><path d="M719.0 494.5 L720.1 493.2 L721.3 492.0 L722.4 490.7 L723.5 489.4 L724.5 488.0 L725.4 486.4 L726.4 484.7 L727.2 483.0 L727.9 481.4 L728.5 480.0 L728.9 478.8 L729.3 477.8 L729.5 476.9 L729.6 476.1 L729.5 475.5 L729.2 475.0 L728.8 474.7 L728.2 474.6 L727.6 474.4 L727.0 474.2" fill="none" stroke="#e6e6e6" stroke-width="2.2" stroke-linecap="round" stroke-linejoin="round" /><path d="M719.0 494.5 L720.1 493.2 L721.3 492.0 L722.4 490.7 L723.5 489.4 L724.5 488.0 L725.4 486.4 L726.4 484.7 L727.2 483.0 L727.9 481.4 L728.5 480.0 L728.9 478.8 L729.3 477.8 L729.5 476.9 L729.6 476.1 L729.5 475.5 L729.2 475.0 L728.8 474.7 L728.2 474.6 L727.6 474.4 L727.0 474.2" fill="none" stroke="#f5f5f5" stroke-width="0.9" stroke-linecap="round" stroke-linejoin="round" /><path d="M741 521 Q737 526.500 730 526.500 Q720.500 525 719.500 514.500 Q720 505 729 503.500" fill="none" stroke="#4d4d33" stroke-width="5.2" stroke-linecap="round" stroke-linejoin="round" /><path d="M741 521 Q737 526.500 730 526.500 Q720.500 525 719.500 514.500 Q720 505 729 503.500" fill="none" stroke="#c2c2c2" stroke-width="3.2" stroke-linecap="round" stroke-linejoin="round" /><path d="M741 521 Q737 526.500 730 526.500 Q720.500 525 719.500 514.500 Q720 505 729 503.500" fill="none" stroke="#e6e6e6" stroke-width="2.0" stroke-linecap="round" stroke-linejoin="round" /><path d="M741 521 Q737 526.500 730 526.500 Q720.500 525 719.500 514.500 Q720 505 729 503.500" fill="none" stroke="#f5f5f5" stroke-width="0.8" stroke-linecap="round" stroke-linejoin="round" /><circle cx="730.1" cy="514.4" r="7.6" fill="#55553a"/><circle cx="730.1" cy="514.4" r="6.7" fill="#b5b5b5"/><circle cx="730.1" cy="514.4" r="5.3" fill="#e0e0e0"/><circle cx="730.6" cy="513.700" r="3.8" fill="#f2f2f2"/><g transform="translate(706.5 542.5) rotate(-22) scale(1.18)"><path d="M-15 0 Q-10 -9 2 -9 Q10 -8 13 -1 Q10 8 0 10 Q-10 10 -15 0Z" fill="#dedede" stroke="#55553a" stroke-width="1.1"/><path d="M-14 0 Q-2 -4 12 -1M-12 4 Q0 1 11 3" stroke="#9a9a9a" stroke-width="1.3" fill="none"/><path d="M9 -14 L13 -6 L21 -9 L17 -1 L22 5 L12 5 Z" fill="#d6d6d6" stroke="#55553a" stroke-width="1"/><path d="M-8 -5 Q2 -2 -4 8" stroke="#f6f6f6" stroke-width="2.4" fill="none"/></g><path d="M736.4 546.8 L738.3 546.2 L740.2 545.7 L742.1 545.1 L744.1 544.4 L746.0 543.5 L747.9 542.3 L749.9 540.8 L751.9 539.2 L753.9 537.6 L756.0 536.0 L758.3 534.3 L760.7 532.5 L763.1 530.7 L765.5 529.2 L767.7 528.0 L769.8 527.3 L771.8 526.9 L773.6 526.7 L775.4 526.8 L777.0 527.0 L778.4 527.5 L779.6 528.2 L780.8 529.2 L781.9 530.1 L783.0 531.0" fill="none" stroke="#4d4d33" stroke-width="6" stroke-linecap="round"/><path d="M736.4 546.8 L738.3 546.2 L740.2 545.7 L742.1 545.1 L744.1 544.4 L746.0 543.5 L747.9 542.3 L749.9 540.8 L751.9 539.2 L753.9 537.6 L756.0 536.0 L758.3 534.3 L760.7 532.5 L763.1 530.7 L765.5 529.2 L767.7 528.0 L769.8 527.3 L771.8 526.9 L773.6 526.7 L775.4 526.8 L777.0 527.0 L778.4 527.5 L779.6 528.2 L780.8 529.2 L781.9 530.1 L783.0 531.0" fill="none" stroke="#6e6e6e" stroke-width="4.4" stroke-linecap="round"/><path d="M736.4 546.8 L738.3 546.2 L740.2 545.7 L742.1 545.1 L744.1 544.4 L746.0 543.5 L747.9 542.3 L749.9 540.8 L751.9 539.2 L753.9 537.6 L756.0 536.0 L758.3 534.3 L760.7 532.5 L763.1 530.7 L765.5 529.2 L767.7 528.0 L769.8 527.3 L771.8 526.9 L773.6 526.7 L775.4 526.8 L777.0 527.0 L778.4 527.5 L779.6 528.2 L780.8 529.2 L781.9 530.1 L783.0 531.0" fill="none" stroke="#dadada" stroke-width="2.2" stroke-linecap="round" transform="translate(0.6,1.1)"/><path d="M781.0 541.5 L780.2 540.8 L779.4 540.2 L778.5 539.5 L777.9 538.8 L777.5 538.0 L777.4 537.0 L777.5 535.9 L777.8 534.8 L778.3 533.8 L779.0 533.0 L779.9 532.4 L781.0 531.8 L782.3 531.5 L783.6 531.3 L785.0 531.5 L786.4 532.0 L787.8 532.7 L789.3 533.7 L790.9 535.0 L792.8 536.5 L795.0 538.4 L797.5 540.8 L800.1 543.3 L802.7 545.7 L805.3 547.8 L807.9 549.5 L810.6 551.0 L813.2 552.3 L815.8 553.5 L818.0 554.5 L819.9 555.3 L821.5 556.0 L823.0 556.5 L824.5 557.0 L826.0 557.5" fill="none" stroke="#4d4d33" stroke-width="5.6" stroke-linecap="round" stroke-linejoin="round" /><path d="M781.0 541.5 L780.2 540.8 L779.4 540.2 L778.5 539.5 L777.9 538.8 L777.5 538.0 L777.4 537.0 L777.5 535.9 L777.8 534.8 L778.3 533.8 L779.0 533.0 L779.9 532.4 L781.0 531.8 L782.3 531.5 L783.6 531.3 L785.0 531.5 L786.4 532.0 L787.8 532.7 L789.3 533.7 L790.9 535.0 L792.8 536.5 L795.0 538.4 L797.5 540.8 L800.1 543.3 L802.7 545.7 L805.3 547.8 L807.9 549.5 L810.6 551.0 L813.2 552.3 L815.8 553.5 L818.0 554.5 L819.9 555.3 L821.5 556.0 L823.0 556.5 L824.5 557.0 L826.0 557.5" fill="none" stroke="#c2c2c2" stroke-width="3.6" stroke-linecap="round" stroke-linejoin="round" /><path d="M781.0 541.5 L780.2 540.8 L779.4 540.2 L778.5 539.5 L777.9 538.8 L777.5 538.0 L777.4 537.0 L777.5 535.9 L777.8 534.8 L778.3 533.8 L779.0 533.0 L779.9 532.4 L781.0 531.8 L782.3 531.5 L783.6 531.3 L785.0 531.5 L786.4 532.0 L787.8 532.7 L789.3 533.7 L790.9 535.0 L792.8 536.5 L795.0 538.4 L797.5 540.8 L800.1 543.3 L802.7 545.7 L805.3 547.8 L807.9 549.5 L810.6 551.0 L813.2 552.3 L815.8 553.5 L818.0 554.5 L819.9 555.3 L821.5 556.0 L823.0 556.5 L824.5 557.0 L826.0 557.5" fill="none" stroke="#e6e6e6" stroke-width="2.2" stroke-linecap="round" stroke-linejoin="round" /><path d="M781.0 541.5 L780.2 540.8 L779.4 540.2 L778.5 539.5 L777.9 538.8 L777.5 538.0 L777.4 537.0 L777.5 535.9 L777.8 534.8 L778.3 533.8 L779.0 533.0 L779.9 532.4 L781.0 531.8 L782.3 531.5 L783.6 531.3 L785.0 531.5 L786.4 532.0 L787.8 532.7 L789.3 533.7 L790.9 535.0 L792.8 536.5 L795.0 538.4 L797.5 540.8 L800.1 543.3 L802.7 545.7 L805.3 547.8 L807.9 549.5 L810.6 551.0 L813.2 552.3 L815.8 553.5 L818.0 554.5 L819.9 555.3 L821.5 556.0 L823.0 556.5 L824.5 557.0 L826.0 557.5" fill="none" stroke="#f5f5f5" stroke-width="0.9" stroke-linecap="round" stroke-linejoin="round" /></g><use href="#halfL" transform="translate(1927.4 0) scale(-1 1)"/><path d="M964.0 396.5 L969.3 396.7 L974.7 397.2 L980.0 398.1 L985.0 399.5 L989.9 401.5 L994.6 404.0 L999.0 406.9 L1003.0 410.0 L1006.6 413.4 L1009.8 417.0 L1012.6 420.9 L1015.0 425.0 L1017.1 429.4 L1018.7 434.0 L1020.0 438.6 L1021.0 443.0 L1021.6 447.0 L1021.8 450.8 L1021.8 454.4 L1021.5 458.0 L1021.0 461.6 L1020.2 465.1 L1019.2 468.5 L1018.0 472.0 L1016.5 475.6 L1014.7 479.2 L1012.8 482.7 L1011.0 486.0 L1009.1 489.0 L1007.1 491.8 L1005.3 494.4 L1004.0 497.0 L1003.5 499.6 L1003.5 502.2 L1003.5 504.7 L1003.0 507.0 L1001.7 508.9 L999.9 510.6 L998.0 512.2 L996.0 514.0 L994.1 516.0 L992.2 518.1 L990.2 520.2 L988.0 522.0 L985.5 523.6 L982.8 525.1 L980.0 526.4 L977.0 527.5 L973.9 528.3 L970.6 529.0 L967.3 529.4 L964.0 529.5 L960.7 529.4 L957.3 529.0 L954.0 528.4 L951.0 527.5 L948.3 526.3 L945.8 524.9 L943.4 523.3 L941.0 521.5 L938.6 519.5 L936.3 517.2 L934.1 515.0 L932.0 513.0 L930.0 511.4 L928.0 510.1 L926.3 508.7 L925.0 507.0 L924.4 504.8 L924.3 502.4 L924.2 499.7 L923.5 497.0 L922.0 494.2 L920.1 491.2 L917.9 488.2 L916.0 485.0 L914.2 481.7 L912.5 478.2 L910.9 474.6 L909.5 471.0 L908.4 467.3 L907.5 463.6 L906.9 459.8 L906.5 456.0 L906.4 452.3 L906.4 448.6 L906.8 444.9 L907.5 441.0 L908.5 436.8 L909.8 432.5 L911.5 428.1 L913.5 424.0 L915.9 420.1 L918.8 416.3 L922.0 412.8 L925.5 409.5 L929.4 406.5 L933.7 403.8 L938.2 401.4 L943.0 399.5 L948.0 398.1 L953.3 397.2 L958.7 396.7Z" fill="#2a2a1c" stroke="#2a2a1c" stroke-width="1.6"/><path d="M964.0 396.5 L969.3 396.7 L974.7 397.2 L980.0 398.1 L985.0 399.5 L989.9 401.5 L994.6 404.0 L999.0 406.9 L1003.0 410.0 L1006.6 413.4 L1009.8 417.0 L1012.6 420.9 L1015.0 425.0 L1017.1 429.4 L1018.7 434.0 L1020.0 438.6 L1021.0 443.0 L1021.6 447.0 L1021.8 450.8 L1021.8 454.4 L1021.5 458.0 L1021.0 461.6 L1020.2 465.1 L1019.2 468.5 L1018.0 472.0 L1016.5 475.6 L1014.7 479.2 L1012.8 482.7 L1011.0 486.0 L1009.1 489.0 L1007.1 491.8 L1005.3 494.4 L1004.0 497.0 L1003.5 499.6 L1003.5 502.2 L1003.5 504.7 L1003.0 507.0 L1001.7 508.9 L999.9 510.6 L998.0 512.2 L996.0 514.0 L994.1 516.0 L992.2 518.1 L990.2 520.2 L988.0 522.0 L985.5 523.6 L982.8 525.1 L980.0 526.4 L977.0 527.5 L973.9 528.3 L970.6 529.0 L967.3 529.4 L964.0 529.5 L960.7 529.4 L957.3 529.0 L954.0 528.4 L951.0 527.5 L948.3 526.3 L945.8 524.9 L943.4 523.3 L941.0 521.5 L938.6 519.5 L936.3 517.2 L934.1 515.0 L932.0 513.0 L930.0 511.4 L928.0 510.1 L926.3 508.7 L925.0 507.0 L924.4 504.8 L924.3 502.4 L924.2 499.7 L923.5 497.0 L922.0 494.2 L920.1 491.2 L917.9 488.2 L916.0 485.0 L914.2 481.7 L912.5 478.2 L910.9 474.6 L909.5 471.0 L908.4 467.3 L907.5 463.6 L906.9 459.8 L906.5 456.0 L906.4 452.3 L906.4 448.6 L906.8 444.9 L907.5 441.0 L908.5 436.8 L909.8 432.5 L911.5 428.1 L913.5 424.0 L915.9 420.1 L918.8 416.3 L922.0 412.8 L925.5 409.5 L929.4 406.5 L933.7 403.8 L938.2 401.4 L943.0 399.5 L948.0 398.1 L953.3 397.2 L958.7 396.7Z" fill="url(#gLion)"/><g clip-path="url(#cLion)"><g filter="url(#fB7)"><rect x="890" y="380" width="150" height="160" fill="none"/><ellipse cx="964" cy="428" rx="38" ry="22" fill="#7a7a7a" opacity=".6"/><ellipse cx="964" cy="476" rx="34" ry="42" fill="#9c9c9c" opacity=".85"/></g><g filter="url(#fB4)"><rect x="890" y="380" width="150" height="160" fill="none"/><ellipse cx="947" cy="448" rx="13" ry="8" fill="#b8b8b8" opacity=".85"/><ellipse cx="982" cy="449" rx="13" ry="8" fill="#b8b8b8" opacity=".85"/><ellipse cx="964" cy="468" rx="9" ry="20" fill="#d0d0d0" opacity=".9"/><ellipse cx="949" cy="488" rx="12" ry="9.500" fill="#d8d8d8" opacity=".95"/><ellipse cx="979" cy="488" rx="12" ry="9.500" fill="#d8d8d8" opacity=".95"/><ellipse cx="964" cy="509" rx="17" ry="7" fill="#a8a8a8" opacity=".85"/></g><g filter="url(#fB2)"><rect x="900" y="390" width="130" height="145" fill="none"/><path d="M940 457.500 Q948 455 957 458.500M972 459.500 Q981 456.500 990 460" stroke="#6e6e6e" stroke-width="3" fill="none" opacity=".9"/><path d="M945 497.500 Q955 495 964 497 Q973 495 984 498" stroke="#505050" stroke-width="3" fill="none"/><path d="M964 487V496" stroke="#777" stroke-width="2"/><ellipse cx="963.500" cy="479" rx="6.500" ry="7" fill="#fff"/></g></g><g filter="url(#fB1)"><path d="M964.1 548.4 L973.6 552.4 L977.5 565.0 L975.2 576.0 L982.3 573.6 L978.8 583.9 L988.6 580.7 L985.2 589.4 L1002.8 590.2 L1000.4 595.7 L1007.5 603.6 L998.8 610.7 L997.3 617.0 L990.9 623.3 L984.6 628.0 L994.1 630.5 L995.7 637.5 L990.9 641.8 L1006.7 642.3 L1013.0 648.6 L1009.9 659.6 L998.8 662.8 L997.3 669.0 L986.0 672.5 L978.3 679.0 L964.1 692.7 L949.7 679.0 L942.0 672.5 L930.7 669.0 L929.2 662.8 L918.1 659.6 L915.0 648.6 L921.3 642.3 L937.1 641.8 L932.3 637.5 L933.9 630.5 L943.4 628.0 L937.1 623.3 L930.7 617.0 L929.2 610.7 L920.5 603.6 L927.6 595.7 L925.2 590.2 L942.8 589.4 L939.4 580.7 L949.2 583.9 L945.7 573.6 L952.8 576.0 L953.0 566.0 L957.0 556.0Z" fill="#a4a4a4" stroke="#45452e" stroke-width="4.6" stroke-linejoin="round" transform="translate(964 620) scale(0.972) translate(-964 -620)"/><path d="M964.1 548.4 L973.6 552.4 L977.5 565.0 L975.2 576.0 L982.3 573.6 L978.8 583.9 L988.6 580.7 L985.2 589.4 L1002.8 590.2 L1000.4 595.7 L1007.5 603.6 L998.8 610.7 L997.3 617.0 L990.9 623.3 L984.6 628.0 L994.1 630.5 L995.7 637.5 L990.9 641.8 L1006.7 642.3 L1013.0 648.6 L1009.9 659.6 L998.8 662.8 L997.3 669.0 L986.0 672.5 L978.3 679.0 L964.1 692.7 L949.7 679.0 L942.0 672.5 L930.7 669.0 L929.2 662.8 L918.1 659.6 L915.0 648.6 L921.3 642.3 L937.1 641.8 L932.3 637.5 L933.9 630.5 L943.4 628.0 L937.1 623.3 L930.7 617.0 L929.2 610.7 L920.5 603.6 L927.6 595.7 L925.2 590.2 L942.8 589.4 L939.4 580.7 L949.2 583.9 L945.7 573.6 L952.8 576.0 L953.0 566.0 L957.0 556.0Z" fill="#a6a6a6" stroke="#a6a6a6" stroke-width="2.4" stroke-linejoin="round" transform="translate(964 620) scale(0.972) translate(-964 -620)"/><path d="M966.0 624.0 L966.4 620.8 L966.8 617.5 L967.3 614.2 L968.0 611.0 L969.1 607.7 L970.3 604.5 L971.7 601.2 L973.0 598.0 L974.2 594.7 L975.3 591.4 L976.5 588.1 L977.5 585.1 L978.4 582.5 L979.3 580.1 L980.1 577.8 L981.0 575.5" fill="none" stroke="#5e5e5e" stroke-width="2.0" stroke-linecap="round" opacity="0.9" transform="translate(0.8 2.4)"/><path d="M962.0 624.0 L961.6 620.8 L961.2 617.5 L960.7 614.2 L960.0 611.0 L958.9 607.7 L957.7 604.5 L956.3 601.2 L955.0 598.0 L953.8 594.7 L952.7 591.4 L951.5 588.1 L950.5 585.1 L949.6 582.5 L948.7 580.1 L947.9 577.8 L947.0 575.5" fill="none" stroke="#5e5e5e" stroke-width="2.0" stroke-linecap="round" opacity="0.9" transform="translate(-0.8 2.4)"/><path d="M966.0 624.0 L966.4 620.8 L966.8 617.5 L967.3 614.2 L968.0 611.0 L969.1 607.7 L970.3 604.5 L971.7 601.2 L973.0 598.0 L974.2 594.7 L975.3 591.4 L976.5 588.1 L977.5 585.1 L978.4 582.5 L979.3 580.1 L980.1 577.8 L981.0 575.5" fill="none" stroke="#ececec" stroke-width="3.0" stroke-linecap="round" opacity="1" transform="translate(0 0)"/><path d="M962.0 624.0 L961.6 620.8 L961.2 617.5 L960.7 614.2 L960.0 611.0 L958.9 607.7 L957.7 604.5 L956.3 601.2 L955.0 598.0 L953.8 594.7 L952.7 591.4 L951.5 588.1 L950.5 585.1 L949.6 582.5 L948.7 580.1 L947.9 577.8 L947.0 575.5" fill="none" stroke="#ececec" stroke-width="3.0" stroke-linecap="round" opacity="1" transform="translate(0 0)"/><path d="M967.5 625.0 L968.5 622.2 L969.4 619.5 L970.5 616.8 L971.8 614.0 L973.4 611.3 L975.3 608.6 L977.3 605.8 L979.0 603.0 L980.4 600.0 L981.6 596.9 L982.7 593.9 L983.8 591.1 L984.8 588.8 L985.7 586.6 L986.6 584.6 L987.5 582.5" fill="none" stroke="#5e5e5e" stroke-width="2.0" stroke-linecap="round" opacity="0.9" transform="translate(0.8 2.4)"/><path d="M960.5 625.0 L959.5 622.2 L958.6 619.5 L957.5 616.8 L956.2 614.0 L954.6 611.3 L952.7 608.6 L950.7 605.8 L949.0 603.0 L947.6 600.0 L946.4 596.9 L945.3 593.9 L944.2 591.1 L943.2 588.8 L942.3 586.6 L941.4 584.6 L940.5 582.5" fill="none" stroke="#5e5e5e" stroke-width="2.0" stroke-linecap="round" opacity="0.9" transform="translate(-0.8 2.4)"/><path d="M967.5 625.0 L968.5 622.2 L969.4 619.5 L970.5 616.8 L971.8 614.0 L973.4 611.3 L975.3 608.6 L977.3 605.8 L979.0 603.0 L980.4 600.0 L981.6 596.9 L982.7 593.9 L983.8 591.1 L984.8 588.8 L985.7 586.6 L986.6 584.6 L987.5 582.5" fill="none" stroke="#ececec" stroke-width="3.0" stroke-linecap="round" opacity="1" transform="translate(0 0)"/><path d="M960.5 625.0 L959.5 622.2 L958.6 619.5 L957.5 616.8 L956.2 614.0 L954.6 611.3 L952.7 608.6 L950.7 605.8 L949.0 603.0 L947.6 600.0 L946.4 596.9 L945.3 593.9 L944.2 591.1 L943.2 588.8 L942.3 586.6 L941.4 584.6 L940.5 582.5" fill="none" stroke="#ececec" stroke-width="3.0" stroke-linecap="round" opacity="1" transform="translate(0 0)"/><path d="M969.0 626.0 L970.7 623.4 L972.3 620.8 L974.0 618.1 L976.0 615.5 L978.3 612.8 L981.0 610.1 L983.6 607.5 L986.0 605.0 L988.1 602.7 L990.1 600.5 L991.9 598.5 L993.8 596.6 L995.5 595.1 L997.2 593.9 L998.8 592.7 L1000.5 591.5" fill="none" stroke="#5e5e5e" stroke-width="2.0" stroke-linecap="round" opacity="0.9" transform="translate(0.8 2.4)"/><path d="M959.0 626.0 L957.3 623.4 L955.7 620.8 L954.0 618.1 L952.0 615.5 L949.7 612.8 L947.0 610.1 L944.4 607.5 L942.0 605.0 L939.9 602.7 L937.9 600.5 L936.1 598.5 L934.2 596.6 L932.5 595.1 L930.8 593.9 L929.2 592.7 L927.5 591.5" fill="none" stroke="#5e5e5e" stroke-width="2.0" stroke-linecap="round" opacity="0.9" transform="translate(-0.8 2.4)"/><path d="M969.0 626.0 L970.7 623.4 L972.3 620.8 L974.0 618.1 L976.0 615.5 L978.3 612.8 L981.0 610.1 L983.6 607.5 L986.0 605.0 L988.1 602.7 L990.1 600.5 L991.9 598.5 L993.8 596.6 L995.5 595.1 L997.2 593.9 L998.8 592.7 L1000.5 591.5" fill="none" stroke="#ececec" stroke-width="3.0" stroke-linecap="round" opacity="1" transform="translate(0 0)"/><path d="M959.0 626.0 L957.3 623.4 L955.7 620.8 L954.0 618.1 L952.0 615.5 L949.7 612.8 L947.0 610.1 L944.4 607.5 L942.0 605.0 L939.9 602.7 L937.9 600.5 L936.1 598.5 L934.2 596.6 L932.5 595.1 L930.8 593.9 L929.2 592.7 L927.5 591.5" fill="none" stroke="#ececec" stroke-width="3.0" stroke-linecap="round" opacity="1" transform="translate(0 0)"/><path d="M970.5 627.5 L972.2 625.6 L973.9 623.6 L975.7 621.7 L977.8 619.8 L980.1 617.8 L982.8 615.7 L985.5 613.8 L988.0 612.0 L990.3 610.4 L992.5 608.8 L994.7 607.5 L996.8 606.3 L998.8 605.5 L1000.7 604.8 L1002.6 604.3 L1004.5 603.8" fill="none" stroke="#5e5e5e" stroke-width="2.0" stroke-linecap="round" opacity="0.9" transform="translate(0.8 2.4)"/><path d="M957.5 627.5 L955.8 625.6 L954.1 623.6 L952.3 621.7 L950.2 619.8 L947.9 617.8 L945.2 615.7 L942.5 613.8 L940.0 612.0 L937.7 610.4 L935.5 608.8 L933.3 607.5 L931.2 606.3 L929.2 605.5 L927.3 604.8 L925.4 604.3 L923.5 603.8" fill="none" stroke="#5e5e5e" stroke-width="2.0" stroke-linecap="round" opacity="0.9" transform="translate(-0.8 2.4)"/><path d="M970.5 627.5 L972.2 625.6 L973.9 623.6 L975.7 621.7 L977.8 619.8 L980.1 617.8 L982.8 615.7 L985.5 613.8 L988.0 612.0 L990.3 610.4 L992.5 608.8 L994.7 607.5 L996.8 606.3 L998.8 605.5 L1000.7 604.8 L1002.6 604.3 L1004.5 603.8" fill="none" stroke="#ececec" stroke-width="3.0" stroke-linecap="round" opacity="1" transform="translate(0 0)"/><path d="M957.5 627.5 L955.8 625.6 L954.1 623.6 L952.3 621.7 L950.2 619.8 L947.9 617.8 L945.2 615.7 L942.5 613.8 L940.0 612.0 L937.7 610.4 L935.5 608.8 L933.3 607.5 L931.2 606.3 L929.2 605.5 L927.3 604.8 L925.4 604.3 L923.5 603.8" fill="none" stroke="#ececec" stroke-width="3.0" stroke-linecap="round" opacity="1" transform="translate(0 0)"/><path d="M972.0 629.0 L974.5 627.5 L977.1 626.0 L979.6 624.5 L982.0 623.0 L984.4 621.5 L986.9 619.9 L989.1 618.4 L991.0 617.0 L992.5 615.8 L993.7 614.8 L994.5 613.9 L995.0 613.0 L995.0 612.0 L994.5 610.9 L993.8 610.0 L993.0 609.5 L992.1 609.5 L990.9 609.9 L989.7 610.5 L988.5 611.0" fill="none" stroke="#5e5e5e" stroke-width="1.8" stroke-linecap="round" opacity="0.9" transform="translate(0.6 2)"/><path d="M956.0 629.0 L953.5 627.5 L950.9 626.0 L948.4 624.5 L946.0 623.0 L943.6 621.5 L941.1 619.9 L938.9 618.4 L937.0 617.0 L935.5 615.8 L934.3 614.8 L933.5 613.9 L933.0 613.0 L933.0 612.0 L933.5 610.9 L934.2 610.0 L935.0 609.5 L935.9 609.5 L937.1 609.9 L938.3 610.5 L939.5 611.0" fill="none" stroke="#5e5e5e" stroke-width="1.8" stroke-linecap="round" opacity="0.9" transform="translate(-0.6 2)"/><path d="M972.0 629.0 L974.5 627.5 L977.1 626.0 L979.6 624.5 L982.0 623.0 L984.4 621.5 L986.9 619.9 L989.1 618.4 L991.0 617.0 L992.5 615.8 L993.7 614.8 L994.5 613.9 L995.0 613.0 L995.0 612.0 L994.5 610.9 L993.8 610.0 L993.0 609.5 L992.1 609.5 L990.9 609.9 L989.7 610.5 L988.5 611.0" fill="none" stroke="#eeeeee" stroke-width="2.6" stroke-linecap="round" opacity="1" transform="translate(0 0)"/><path d="M956.0 629.0 L953.5 627.5 L950.9 626.0 L948.4 624.5 L946.0 623.0 L943.6 621.5 L941.1 619.9 L938.9 618.4 L937.0 617.0 L935.5 615.8 L934.3 614.8 L933.5 613.9 L933.0 613.0 L933.0 612.0 L933.5 610.9 L934.2 610.0 L935.0 609.5 L935.9 609.5 L937.1 609.9 L938.3 610.5 L939.5 611.0" fill="none" stroke="#eeeeee" stroke-width="2.6" stroke-linecap="round" opacity="1" transform="translate(0 0)"/><path d="M961 560 Q957 572 958.500 586 Q960 600 963 618" stroke="#dadada" stroke-width="3" fill="none"/><path d="M968 552 Q974 563 972 577 Q969 594 965.500 612" stroke="#ededed" stroke-width="3.2" fill="none"/><path d="M965 556 Q968.500 570 966 588 Q964.500 600 964.200 616" stroke="#5a5a5a" stroke-width="2" fill="none"/><path d="M978.0 636.0 L979.8 636.7 L981.6 637.5 L983.3 638.2 L985.0 638.5 L986.7 638.5 L988.3 638.2 L989.8 637.7 L991.0 637.0 L991.8 636.0 L992.3 634.8 L992.6 633.5 L992.5 632.5 L992.0 631.7 L991.0 631.1 L990.0 630.6 L989.0 630.5 L988.2 630.8 L987.5 631.5 L986.7 632.3 L986.0 633.0" fill="none" stroke="#efefef" stroke-width="2.6" stroke-linecap="round" opacity="1" transform="translate(0 0)"/><path d="M950.0 636.0 L948.2 636.7 L946.4 637.5 L944.7 638.2 L943.0 638.5 L941.3 638.5 L939.7 638.2 L938.2 637.7 L937.0 637.0 L936.2 636.0 L935.7 634.8 L935.4 633.5 L935.5 632.5 L936.0 631.7 L937.0 631.1 L938.0 630.6 L939.0 630.5 L939.8 630.8 L940.5 631.5 L941.3 632.3 L942.0 633.0" fill="none" stroke="#efefef" stroke-width="2.6" stroke-linecap="round" opacity="1" transform="translate(0 0)"/><path d="M979.0 639.5 L980.8 640.2 L982.5 641.1 L984.2 641.7 L986.0 642.0 L987.8 641.7 L989.5 641.1 L991.2 640.2 L993.0 639.5" fill="none" stroke="#5c5c5c" stroke-width="1.4" stroke-linecap="round" opacity="1" transform="translate(0 0)"/><path d="M949.0 639.5 L947.2 640.2 L945.5 641.1 L943.8 641.7 L942.0 642.0 L940.2 641.7 L938.5 641.1 L936.8 640.2 L935.0 639.5" fill="none" stroke="#5c5c5c" stroke-width="1.4" stroke-linecap="round" opacity="1" transform="translate(0 0)"/><path d="M975.0 645.0 L978.3 645.4 L981.6 645.9 L984.8 646.3 L988.0 646.5 L991.1 646.4 L994.2 646.2 L997.2 645.9 L1000.0 646.0 L1002.6 646.5 L1004.9 647.3 L1007.2 648.2 L1009.5 649.0" fill="none" stroke="#8c8c8c" stroke-width="5" stroke-linecap="round" opacity="1" transform="translate(0 1)"/><path d="M953.0 645.0 L949.7 645.4 L946.4 645.9 L943.2 646.3 L940.0 646.5 L936.9 646.4 L933.8 646.2 L930.8 645.9 L928.0 646.0 L925.4 646.5 L923.1 647.3 L920.8 648.2 L918.5 649.0" fill="none" stroke="#8c8c8c" stroke-width="5" stroke-linecap="round" opacity="1" transform="translate(0 1)"/><path d="M972.0 650.0 L975.0 651.5 L977.9 653.0 L980.9 654.4 L984.0 655.5 L987.2 656.2 L990.6 656.7 L993.9 656.9 L997.0 657.0 L999.9 656.8 L1002.6 656.4 L1005.3 655.9 L1008.0 655.5" fill="none" stroke="#e4e4e4" stroke-width="3" stroke-linecap="round" opacity="1" transform="translate(0 0)"/><path d="M956.0 650.0 L953.0 651.5 L950.1 653.0 L947.1 654.4 L944.0 655.5 L940.8 656.2 L937.4 656.7 L934.1 656.9 L931.0 657.0 L928.1 656.8 L925.4 656.4 L922.7 655.9 L920.0 655.5" fill="none" stroke="#e4e4e4" stroke-width="3" stroke-linecap="round" opacity="1" transform="translate(0 0)"/><path d="M975.0 644.0 L978.8 644.1 L982.6 644.1 L986.3 644.2 L990.0 644.2 L993.6 644.1 L997.1 644.0 L1000.5 643.9 L1004.0 643.8" fill="none" stroke="#d0d0d0" stroke-width="1.6" stroke-linecap="round" opacity="1" transform="translate(0 0)"/><path d="M953.0 644.0 L949.2 644.1 L945.4 644.1 L941.7 644.2 L938.0 644.2 L934.4 644.1 L930.9 644.0 L927.5 643.9 L924.0 643.8" fill="none" stroke="#d0d0d0" stroke-width="1.6" stroke-linecap="round" opacity="1" transform="translate(0 0)"/><path d="M969.0 648.0 L971.0 650.6 L972.9 653.2 L974.9 655.7 L977.0 658.0 L979.2 660.1 L981.5 661.9 L983.8 663.6 L986.0 665.0 L988.2 666.0 L990.3 666.8 L992.4 667.3 L994.5 668.0" fill="none" stroke="#e6e6e6" stroke-width="2.6" stroke-linecap="round" opacity="1" transform="translate(0 0)"/><path d="M959.0 648.0 L957.0 650.6 L955.1 653.2 L953.1 655.7 L951.0 658.0 L948.8 660.1 L946.5 661.9 L944.2 663.6 L942.0 665.0 L939.8 666.0 L937.7 666.8 L935.6 667.3 L933.5 668.0" fill="none" stroke="#e6e6e6" stroke-width="2.6" stroke-linecap="round" opacity="1" transform="translate(0 0)"/><path d="M970.0 652.0 L971.5 654.6 L972.9 657.2 L974.4 659.7 L976.0 662.0 L977.9 664.0 L979.9 665.7 L982.0 667.3 L984.0 669.0" fill="none" stroke="#606060" stroke-width="1.6" stroke-linecap="round" opacity="1" transform="translate(0 1.5)"/><path d="M958.0 652.0 L956.5 654.6 L955.1 657.2 L953.6 659.7 L952.0 662.0 L950.1 664.0 L948.1 665.7 L946.0 667.3 L944.0 669.0" fill="none" stroke="#606060" stroke-width="1.6" stroke-linecap="round" opacity="1" transform="translate(0 1.5)"/><path d="M967.5 650.0 L968.6 653.3 L969.7 656.6 L970.8 659.9 L972.0 663.0 L973.4 665.9 L974.9 668.6 L976.5 671.3 L978.0 674.0" fill="none" stroke="#e6e6e6" stroke-width="2.6" stroke-linecap="round" opacity="1" transform="translate(0 0)"/><path d="M960.5 650.0 L959.4 653.3 L958.3 656.6 L957.2 659.9 L956.0 663.0 L954.6 665.9 L953.1 668.6 L951.5 671.3 L950.0 674.0" fill="none" stroke="#e6e6e6" stroke-width="2.6" stroke-linecap="round" opacity="1" transform="translate(0 0)"/><path d="M966.5 654.0 L967.2 657.6 L968.0 661.2 L968.7 664.7 L969.5 668.0 L970.3 671.0 L971.2 673.7 L972.1 676.3 L973.0 679.0" fill="none" stroke="#606060" stroke-width="1.5" stroke-linecap="round" opacity="1" transform="translate(0 0)"/><path d="M961.5 654.0 L960.8 657.6 L960.0 661.2 L959.3 664.7 L958.5 668.0 L957.7 671.0 L956.8 673.7 L955.9 676.3 L955.0 679.0" fill="none" stroke="#606060" stroke-width="1.5" stroke-linecap="round" opacity="1" transform="translate(0 0)"/><path d="M964 646V688" stroke="#5c5c5c" stroke-width="1.8"/><path d="M966.6 650.0 L967.0 654.5 L967.5 659.1 L967.9 663.6 L968.0 668.0 L967.7 672.3 L967.2 676.6 L966.6 680.8 L966.0 685.0" fill="none" stroke="#e2e2e2" stroke-width="2.2" stroke-linecap="round" opacity="1" transform="translate(0 0)"/><path d="M961.4 650.0 L961.0 654.5 L960.5 659.1 L960.1 663.6 L960.0 668.0 L960.3 672.3 L960.8 676.6 L961.4 680.8 L962.0 685.0" fill="none" stroke="#e2e2e2" stroke-width="2.2" stroke-linecap="round" opacity="1" transform="translate(0 0)"/><path d="M959.500 614 Q962 622 962 632M968.500 614 Q966 622 966 632" stroke="#dcdcdc" stroke-width="1.8" fill="none"/><ellipse cx="964" cy="634.500" rx="18.5" ry="7" fill="none" stroke="#45452e" stroke-width="6.600"/><ellipse cx="964" cy="634.500" rx="18.5" ry="7" fill="none" stroke="#b4b4b4" stroke-width="5"/><ellipse cx="964" cy="633.500" rx="18.5" ry="7" fill="none" stroke="#e6e6e6" stroke-width="2"/><ellipse cx="964" cy="632.500" rx="9" ry="2.800" fill="#6a6a6a"/></g></svg>
<div class="b" style="left:1590px;top:56.5px;width:303px;height:18.5px;background:#355b8c;"></div>
<div class="b" style="left:1871px;top:57.5px;width:17px;height:16px;background:#e4e6e8;border-top:1px solid #fff;border-left:1px solid #fff;border-right:1px solid #6f7782;border-bottom:1px solid #6f7782;"></div>
<svg style="left:1874px;top:60.5px" width="11" height="10" viewBox="0 0 11 10"><path d="M5.5 0.5L10 9.5H1Z" fill="#4a4a4a"/></svg>
<span class="t " style="left:1595px;top:57.38px;font-size:15.6px;line-height:17.94px;color:#fff;font-weight:bold;transform:scaleX(0.9934);">Vectors</span>
<div class="b" style="left:1591.5px;top:77.5px;width:298.5px;height:26.5px;background:#fff;border-top:2px solid #8c8c8c;border-left:2px solid #8c8c8c;border-right:1px solid #e8e8e8;border-bottom:1px solid #e8e8e8;"></div>
<div class="b" style="left:1868px;top:79.5px;width:21px;height:23px;background:#f0f0f0;border-top:1px solid #fff;border-left:1px solid #fff;border-right:2px solid #8a8a8a;border-bottom:2px solid #8a8a8a;"></div>
<svg style="left:1872.5px;top:88.5px" width="11" height="6" viewBox="0 0 11 6"><path d="M0.5 0.5H10.500L5.500 5.500Z" fill="#111"/></svg>
<span class="t " style="left:1594px;top:79.88px;font-size:15.6px;line-height:17.94px;color:#111;transform:scaleX(0.9732);">Default Sheet</span>
<div class="b" style="left:1590px;top:140.5px;width:303px;height:31.5px;background:#d8d8d8;"></div>
<div class="b" style="left:1594.5px;top:146px;width:21px;height:21px;background:#e9e9e9;border-top:1px solid #fff;border-left:1px solid #fff;border-right:1px solid #9a9a9a;border-bottom:1px solid #9a9a9a;"></div>
<div class="b" style="left:1596.5px;top:148.5px;width:17px;height:17px;background:#000;border-radius:50%;"></div>
<span class="t " style="left:1622px;top:148.68px;font-size:15.6px;line-height:17.94px;color:#161616;transform:scaleX(0.9700);">Default Layer</span>
<div class="b" style="left:1821px;top:146px;width:21.5px;height:20.5px;background:#e4e4e4;border-top:1px solid #fbfbfb;border-left:1px solid #fbfbfb;border-right:1px solid #9a9a9a;border-bottom:1px solid #9a9a9a;"></div>
<div class="b" style="left:1844px;top:146px;width:21.5px;height:20.5px;background:#e4e4e4;border-top:1px solid #fbfbfb;border-left:1px solid #fbfbfb;border-right:1px solid #9a9a9a;border-bottom:1px solid #9a9a9a;"></div>
<div class="b" style="left:1866px;top:146px;width:21.5px;height:20.5px;background:#e4e4e4;border-top:1px solid #fbfbfb;border-left:1px solid #fbfbfb;border-right:1px solid #9a9a9a;border-bottom:1px solid #9a9a9a;"></div>
<svg style="left:1852px;top:176.5px" width="15.5" height="15.5" viewBox="0 0 15 15"><rect x="0.5" y="0.5" width="14" height="14" rx="1.5" fill="#1d44a8" stroke="#0c2a78"/><path d="M7.5 12V4.200M3.800 7.600L7.500 3.800L11.200 7.600" fill="none" stroke="#fff" stroke-width="2"/></svg>
<svg style="left:1874.5px;top:176.5px" width="15.5" height="15.5" viewBox="0 0 15 15"><rect x="0.5" y="0.5" width="14" height="14" rx="1.5" fill="#1d44a8" stroke="#0c2a78"/><path d="M7.5 3.500V11.300M3.800 8L7.500 11.800L11.200 8" fill="none" stroke="#fff" stroke-width="2"/></svg>
<div class="b" style="left:1590px;top:215px;width:303px;height:18.5px;background:#355b8c;"></div>
<div class="b" style="left:1871px;top:216px;width:17px;height:16px;background:#e4e6e8;border-top:1px solid #fff;border-left:1px solid #fff;border-right:1px solid #6f7782;border-bottom:1px solid #6f7782;"></div>
<svg style="left:1874px;top:219px" width="11" height="10" viewBox="0 0 11 10"><path d="M5.5 0.5L10 9.5H1Z" fill="#4a4a4a"/></svg>
<span class="t " style="left:1595px;top:215.88px;font-size:15.6px;line-height:17.94px;color:#fff;font-weight:bold;transform:scaleX(0.9424);">Bitmaps</span>
<div class="b" style="left:1590px;top:267px;width:303px;height:29px;background:#d8d8d8;"></div>
<span class="t " style="left:1622px;top:273.68px;font-size:15.6px;line-height:17.94px;color:#161616;transform:scaleX(0.9721);">Bitmap Layer 1</span>
<div class="b" style="left:1590px;top:316.5px;width:303px;height:18.5px;background:#355b8c;"></div>
<div class="b" style="left:1871px;top:317.5px;width:17px;height:16px;background:#e4e6e8;border-top:1px solid #fff;border-left:1px solid #fff;border-right:1px solid #6f7782;border-bottom:1px solid #6f7782;"></div>
<svg style="left:1874px;top:320.5px" width="11" height="10" viewBox="0 0 11 10"><path d="M5.5 0.5L10 9.5H1Z" fill="#4a4a4a"/></svg>
<span class="t " style="left:1595px;top:317.38px;font-size:15.6px;line-height:17.94px;color:#fff;font-weight:bold;transform:scaleX(0.9578);">Reliefs</span>
<div class="b" style="left:1591.5px;top:338px;width:298.5px;height:26.5px;background:#fff;border-top:2px solid #8c8c8c;border-left:2px solid #8c8c8c;border-right:1px solid #e8e8e8;border-bottom:1px solid #e8e8e8;"></div>
<div class="b" style="left:1868px;top:340px;width:21px;height:23px;background:#f0f0f0;border-top:1px solid #fff;border-left:1px solid #fff;border-right:2px solid #8a8a8a;border-bottom:2px solid #8a8a8a;"></div>
<svg style="left:1872.5px;top:349px" width="11" height="6" viewBox="0 0 11 6"><path d="M0.5 0.5H10.500L5.500 5.500Z" fill="#111"/></svg>
<span class="t " style="left:1594px;top:340.38px;font-size:15.6px;line-height:17.94px;color:#111;transform:scaleX(0.9798);">Front Relief</span>
<div class="b" style="left:1590px;top:400px;width:303px;height:32px;background:#d8d8d8;"></div>
<svg style="left:1634px;top:411px" width="8" height="12" viewBox="0 0 8 12"><path d="M1 0.500L7 6L1 11.500Z" fill="#111"/></svg>
<span class="t " style="left:1648px;top:408.88px;font-size:15.6px;line-height:17.94px;color:#161616;transform:scaleX(0.9662);">Relief Layer 1</span>
<div class="b" style="left:1865px;top:406px;width:21.5px;height:21px;background:#e4e4e4;border-top:1px solid #fbfbfb;border-left:1px solid #fbfbfb;border-right:1px solid #9a9a9a;border-bottom:1px solid #9a9a9a;"></div>
<svg style="left:1852px;top:436px" width="15.5" height="15.5" viewBox="0 0 15 15"><rect x="0.5" y="0.5" width="14" height="14" rx="1.5" fill="#1d44a8" stroke="#0c2a78"/><path d="M7.5 12V4.200M3.800 7.600L7.500 3.800L11.200 7.600" fill="none" stroke="#fff" stroke-width="2"/></svg>
<svg style="left:1874.5px;top:436px" width="15.5" height="15.5" viewBox="0 0 15 15"><rect x="0.5" y="0.5" width="14" height="14" rx="1.5" fill="#1d44a8" stroke="#0c2a78"/><path d="M7.5 3.500V11.300M3.800 8L7.500 11.800L11.200 8" fill="none" stroke="#fff" stroke-width="2"/></svg>
<svg style="left:1591.5px;top:114px" width="19" height="21" viewBox="0 0 19 21"><path d="M6 17L18 13L15 18.500L5 19Z" fill="#9a9a9a" opacity=".7"/><path d="M0.500 0.500H9L13.500 5V18.500H0.500Z" fill="url(#gDoc)"/><path d="M9 0.500L13.500 5H9Z" fill="#eef2f8"/></svg><svg style="left:1636.5px;top:115.5px" width="21" height="21" viewBox="0 0 21 21"><path d="M5 15L20 10.500L18 15L4 17Z" fill="#9a9a9a" opacity=".6"/><path d="M1 5.500Q0.700 3 2.500 2.300L6.500 0.800L8.500 2.500L14.500 1.300L16 9L2 15.500Z" fill="#f2df00"/><path d="M2 15.500L4 9.500Q4.500 8.300 6.500 8L19.500 6.800Q20.800 6.800 20.300 8L17 14.800Q16.500 15.800 15 15.800Z" fill="url(#gFold)"/></svg><svg style="left:1683.0px;top:115.5px" width="20" height="21" viewBox="0 0 20 21"><path d="M7 15L20 10.500L17 16L5 17Z" fill="#9a9a9a" opacity=".6"/><path d="M0.500 0.500H16V16.500H2.500L0.500 14.500Z" fill="url(#gSave)"/><rect x="3.500" y="1.300" width="10" height="7" fill="url(#gGrey)"/><rect x="4.500" y="10.500" width="8" height="6" fill="#cfd6e4"/><rect x="6" y="11.500" width="2.600" height="4" fill="#1b55c4"/></svg><svg style="left:1729.0px;top:114px" width="20" height="21" viewBox="0 0 20 21"><path d="M6 16L19 14L18 19L5 19.500Z" fill="#aaa" opacity=".5"/><path d="M2 0.500L12 0.500L14 3L13.500 6L15.500 9L15 13L17 16L16.500 18.500L4 18.500L3 16L4 14L2.500 12L3.500 10L2 8L3 6L1.500 4L2.500 2Z" fill="#c9a97e"/><path d="M5 1V18M11 2L13 17" stroke="#b08c5c" stroke-width="1.400" fill="none"/><path d="M8 1L9 18" stroke="#dcc49c" stroke-width="1.600" fill="none"/></svg><svg style="left:1776.5px;top:114px" width="15" height="21" viewBox="0 0 15 21"><path d="M0.500 2L9 0.500L14 4V19.500H0.500Z" fill="#8ca0c8"/><path d="M9 0.500L14 4H9Z" fill="#dfe6f2"/><g transform="translate(7.5 10.5) scale(0.95)"><path d="M-2.500 4.500H2.500V8.500H-2.500Z" fill="#5c2c10"/><path d="M-2.500 6H2.500" stroke="#c07830" stroke-width="1"/><path d="M0 -7.500Q6.500 -7.500 6.500 -1.500Q6.500 2 2.800 5H-2.800Q-6.500 2 -6.500 -1.500Q-6.500 -7.500 0 -7.500Z" fill="url(#gBulb)"/><ellipse cx="-1.800" cy="-3.500" rx="2" ry="2.500" fill="#fffce0" opacity=".9"/></g></svg><svg style="left:1823.5px;top:116px" width="15" height="21" viewBox="0 0 15 21"><path d="M1.500 4.500L3.500 15.500Q7.500 18 11.500 15.500L13.500 4.500Z" fill="url(#gBin)"/><ellipse cx="7.500" cy="4.500" rx="6.500" ry="2.800" fill="#8cc0f4" stroke="#3c78d0" stroke-width=".9"/><ellipse cx="7.500" cy="4.700" rx="3.500" ry="1.300" fill="#e8f4ff"/></svg><svg style="left:1865.5px;top:113px" width="22" height="21" viewBox="0 0 22 21"><rect x="0.500" y="0.500" width="21" height="20.500" fill="#f5f1e6" stroke="#fcfcfc" stroke-width="1"/><path d="M0.500 21V0.500H21.500" fill="none" stroke="#dcdcdc" stroke-width="1"/><g transform="translate(7.5 11.5) scale(1.0)"><path d="M-2.500 4.500H2.500V8.500H-2.500Z" fill="#5c2c10"/><path d="M-2.500 6H2.500" stroke="#c07830" stroke-width="1"/><path d="M0 -7.500Q6.500 -7.500 6.500 -1.500Q6.500 2 2.800 5H-2.800Q-6.500 2 -6.500 -1.500Q-6.500 -7.500 0 -7.500Z" fill="url(#gBulb)"/><ellipse cx="-1.800" cy="-3.500" rx="2" ry="2.500" fill="#fffce0" opacity=".9"/></g><g transform="translate(15.5 8.5) scale(1.05)"><path d="M-2.500 4.500H2.500V8.500H-2.500Z" fill="#5c2c10"/><path d="M-2.500 6H2.500" stroke="#c07830" stroke-width="1"/><path d="M0 -7.500Q6.500 -7.500 6.500 -1.500Q6.500 2 2.800 5H-2.800Q-6.500 2 -6.500 -1.500Q-6.500 -7.500 0 -7.500Z" fill="url(#gBulb)"/><ellipse cx="-1.800" cy="-3.500" rx="2" ry="2.500" fill="#fffce0" opacity=".9"/></g></svg><svg style="left:1591.5px;top:240.5px" width="19" height="21" viewBox="0 0 19 21"><path d="M6 17L18 13L15 18.500L5 19Z" fill="#9a9a9a" opacity=".7"/><path d="M0.500 0.500H9L13.500 5V18.500H0.500Z" fill="url(#gDoc)"/><path d="M9 0.500L13.500 5H9Z" fill="#eef2f8"/></svg><svg style="left:1630.0px;top:242.0px" width="21" height="21" viewBox="0 0 21 21"><path d="M5 15L20 10.500L18 15L4 17Z" fill="#9a9a9a" opacity=".6"/><path d="M1 5.500Q0.700 3 2.500 2.300L6.500 0.800L8.500 2.500L14.500 1.300L16 9L2 15.500Z" fill="#f2df00"/><path d="M2 15.500L4 9.500Q4.500 8.300 6.500 8L19.500 6.800Q20.800 6.800 20.300 8L17 14.800Q16.500 15.800 15 15.800Z" fill="url(#gFold)"/></svg><svg style="left:1669.0px;top:242.0px" width="20" height="21" viewBox="0 0 20 21"><path d="M7 15L20 10.500L17 16L5 17Z" fill="#9a9a9a" opacity=".6"/><path d="M0.500 0.500H16V16.500H2.500L0.500 14.500Z" fill="url(#gSave)"/><rect x="3.500" y="1.300" width="10" height="7" fill="url(#gGrey)"/><rect x="4.500" y="10.500" width="8" height="6" fill="#cfd6e4"/><rect x="6" y="11.500" width="2.600" height="4" fill="#1b55c4"/></svg><svg style="left:1709.0px;top:240.5px" width="20" height="21" viewBox="0 0 20 21"><path d="M6 16L19 14L18 19L5 19.500Z" fill="#aaa" opacity=".5"/><path d="M2 0.500L12 0.500L14 3L13.500 6L15.500 9L15 13L17 16L16.500 18.500L4 18.500L3 16L4 14L2.500 12L3.500 10L2 8L3 6L1.500 4L2.500 2Z" fill="#c9a97e"/><path d="M5 1V18M11 2L13 17" stroke="#b08c5c" stroke-width="1.400" fill="none"/><path d="M8 1L9 18" stroke="#dcc49c" stroke-width="1.600" fill="none"/></svg><svg style="left:1746.5px;top:240.5px" width="22" height="21" viewBox="0 0 22 21"><path d="M8 15L19 12L17 17L7 18Z" fill="#aaa" opacity=".6"/><defs><linearGradient id="gGs" x1="0" y1="0" x2="1" y2="1"><stop offset="0" stop-color="#8c8c8c"/><stop offset="1" stop-color="#f4f4f4"/></linearGradient></defs><rect x="1" y="1" width="14" height="15" fill="url(#gGs)"/></svg><svg style="left:1786.5px;top:240.5px" width="22" height="21" viewBox="0 0 22 21"><g transform="scale(.5)"><rect x="0" y="0" width="26" height="31" fill="#6a5c28"/><path d="M0 0H26V12Q20 6 14 8L12 0Z" fill="#c8c070"/><path d="M16 2H26V14H18Z" fill="#d8d088"/><ellipse cx="11.500" cy="10" rx="6.500" ry="8.500" fill="#201808"/><ellipse cx="12" cy="10.500" rx="3.800" ry="5" fill="#f4d888"/><path d="M6 19Q12 15 18 19L21 31H3Z" fill="#2c2008"/><path d="M9 19Q12 22 15 19L14 17H10Z" fill="#e0b070"/><ellipse cx="12" cy="26.500" rx="6" ry="2.400" fill="#d8a868"/></g><path d="M8 8H18L20 17H8Z" fill="#8c8ce0"/><path d="M8 8H18L18.500 10H8Z" fill="#b0b0f0"/></svg><svg style="left:1829.5px;top:242.5px" width="15" height="21" viewBox="0 0 15 21"><path d="M1.500 4.500L3.500 15.500Q7.500 18 11.500 15.500L13.500 4.500Z" fill="url(#gBin)"/><ellipse cx="7.500" cy="4.500" rx="6.500" ry="2.800" fill="#8cc0f4" stroke="#3c78d0" stroke-width=".9"/><ellipse cx="7.500" cy="4.700" rx="3.500" ry="1.300" fill="#e8f4ff"/></svg><svg style="left:1865.5px;top:239.5px" width="22" height="21" viewBox="0 0 22 21"><rect x="0.500" y="0.500" width="21" height="20.500" fill="#f5f1e6" stroke="#fcfcfc" stroke-width="1"/><path d="M0.500 21V0.500H21.500" fill="none" stroke="#dcdcdc" stroke-width="1"/><g transform="translate(7.5 11.5) scale(1.0)"><path d="M-2.500 4.500H2.500V8.500H-2.500Z" fill="#5c2c10"/><path d="M-2.500 6H2.500" stroke="#c07830" stroke-width="1"/><path d="M0 -7.500Q6.500 -7.500 6.500 -1.500Q6.500 2 2.800 5H-2.800Q-6.500 2 -6.500 -1.500Q-6.500 -7.500 0 -7.500Z" fill="url(#gBulb)"/><ellipse cx="-1.800" cy="-3.500" rx="2" ry="2.500" fill="#fffce0" opacity=".9"/></g><g transform="translate(15.5 8.5) scale(1.05)"><path d="M-2.500 4.500H2.500V8.500H-2.500Z" fill="#5c2c10"/><path d="M-2.500 6H2.500" stroke="#c07830" stroke-width="1"/><path d="M0 -7.500Q6.500 -7.500 6.500 -1.500Q6.500 2 2.800 5H-2.800Q-6.500 2 -6.500 -1.500Q-6.500 -7.500 0 -7.500Z" fill="url(#gBulb)"/><ellipse cx="-1.800" cy="-3.500" rx="2" ry="2.500" fill="#fffce0" opacity=".9"/></g></svg><svg style="left:1591.5px;top:374px" width="19" height="21" viewBox="0 0 19 21"><path d="M6 17L18 13L15 18.500L5 19Z" fill="#9a9a9a" opacity=".7"/><path d="M0.500 0.500H9L13.500 5V18.500H0.500Z" fill="url(#gDoc)"/><path d="M9 0.500L13.500 5H9Z" fill="#eef2f8"/></svg><svg style="left:1625.0px;top:375.5px" width="21" height="21" viewBox="0 0 21 21"><path d="M5 15L20 10.500L18 15L4 17Z" fill="#9a9a9a" opacity=".6"/><path d="M1 5.500Q0.700 3 2.500 2.300L6.500 0.800L8.500 2.500L14.500 1.300L16 9L2 15.500Z" fill="#f2df00"/><path d="M2 15.500L4 9.500Q4.500 8.300 6.500 8L19.500 6.800Q20.800 6.800 20.300 8L17 14.800Q16.500 15.800 15 15.800Z" fill="url(#gFold)"/></svg><svg style="left:1658.5px;top:375.5px" width="20" height="21" viewBox="0 0 20 21"><path d="M7 15L20 10.500L17 16L5 17Z" fill="#9a9a9a" opacity=".6"/><path d="M0.500 0.500H16V16.500H2.500L0.500 14.500Z" fill="url(#gSave)"/><rect x="3.500" y="1.300" width="10" height="7" fill="url(#gGrey)"/><rect x="4.500" y="10.500" width="8" height="6" fill="#cfd6e4"/><rect x="6" y="11.500" width="2.600" height="4" fill="#1b55c4"/></svg><svg style="left:1693.5px;top:374px" width="20" height="21" viewBox="0 0 20 21"><path d="M6 16L19 14L18 19L5 19.500Z" fill="#aaa" opacity=".5"/><path d="M2 0.500L12 0.500L14 3L13.500 6L15.500 9L15 13L17 16L16.500 18.500L4 18.500L3 16L4 14L2.500 12L3.500 10L2 8L3 6L1.500 4L2.500 2Z" fill="#c9a97e"/><path d="M5 1V18M11 2L13 17" stroke="#b08c5c" stroke-width="1.400" fill="none"/><path d="M8 1L9 18" stroke="#dcc49c" stroke-width="1.600" fill="none"/></svg><svg style="left:1727.0px;top:374px" width="22" height="21" viewBox="0 0 22 21"><path d="M1 6L11 1L21 6L11 11Z" fill="#a4a4f0"/><path d="M1 13L11 8L21 13L11 19Z" fill="#c01818"/><path d="M1 13L11 19V21L1 15ZM11 19L21 13V15L11 21Z" fill="#800c0c"/><path d="M11 9.500L14.500 13L11 16.500L7.500 13Z" fill="#f8d020"/></svg><svg style="left:1765.0px;top:374px" width="15" height="21" viewBox="0 0 15 21"><path d="M0.500 2L9 0.500L14 4V19.500H0.500Z" fill="#8ca0c8"/><path d="M9 0.500L14 4H9Z" fill="#dfe6f2"/><g transform="translate(7.5 10.5) scale(0.95)"><path d="M-2.500 4.500H2.500V8.500H-2.500Z" fill="#5c2c10"/><path d="M-2.500 6H2.500" stroke="#c07830" stroke-width="1"/><path d="M0 -7.500Q6.500 -7.500 6.500 -1.500Q6.500 2 2.800 5H-2.800Q-6.500 2 -6.500 -1.500Q-6.500 -7.500 0 -7.500Z" fill="url(#gBulb)"/><ellipse cx="-1.800" cy="-3.500" rx="2" ry="2.500" fill="#fffce0" opacity=".9"/></g></svg><svg style="left:1797.0px;top:374px" width="22" height="21" viewBox="0 0 22 21"><rect x="0.500" y="0.500" width="19" height="20" fill="#050505"/><g transform="translate(10 10.500) scale(.62)"><ellipse cx="0" cy="4" rx="8" ry="8.500" fill="#b4b4b4"/><circle cx="0" cy="-7" r="5.500" fill="#b4b4b4"/><circle cx="-5" cy="-11" r="2.200" fill="#b4b4b4"/><circle cx="5" cy="-11" r="2.200" fill="#b4b4b4"/><ellipse cx="-8" cy="0" rx="3" ry="5" fill="#b4b4b4" transform="rotate(25 -8 0)"/><ellipse cx="8" cy="0" rx="3" ry="5" fill="#b4b4b4" transform="rotate(-25 8 0)"/><circle cx="-6" cy="11" r="3.200" fill="#b4b4b4"/><circle cx="6" cy="11" r="3.200" fill="#b4b4b4"/><ellipse cx="0" cy="6" rx="5" ry="5.500" fill="#7c7c7c"/><ellipse cx="0" cy="-5.500" rx="2.500" ry="2" fill="#7c7c7c"/></g><path d="M2 3H5M15 3H18M2 18H5M15 18H18" stroke="#ddd" stroke-width="1"/></svg><svg style="left:1834.5px;top:376px" width="15" height="21" viewBox="0 0 15 21"><path d="M1.500 4.500L3.500 15.500Q7.500 18 11.500 15.500L13.500 4.500Z" fill="url(#gBin)"/><ellipse cx="7.500" cy="4.500" rx="6.500" ry="2.800" fill="#8cc0f4" stroke="#3c78d0" stroke-width=".9"/><ellipse cx="7.500" cy="4.700" rx="3.500" ry="1.300" fill="#e8f4ff"/></svg><svg style="left:1865.5px;top:373px" width="22" height="21" viewBox="0 0 22 21"><rect x="0.500" y="0.500" width="21" height="20.500" fill="#f5f1e6" stroke="#fcfcfc" stroke-width="1"/><path d="M0.500 21V0.500H21.500" fill="none" stroke="#dcdcdc" stroke-width="1"/><g transform="translate(7.5 11.5) scale(1.0)"><path d="M-2.500 4.500H2.500V8.500H-2.500Z" fill="#5c2c10"/><path d="M-2.500 6H2.500" stroke="#c07830" stroke-width="1"/><path d="M0 -7.500Q6.500 -7.500 6.500 -1.500Q6.500 2 2.800 5H-2.800Q-6.500 2 -6.500 -1.500Q-6.500 -7.500 0 -7.500Z" fill="url(#gBulb)"/><ellipse cx="-1.800" cy="-3.500" rx="2" ry="2.500" fill="#fffce0" opacity=".9"/></g><g transform="translate(15.5 8.5) scale(1.05)"><path d="M-2.500 4.500H2.500V8.500H-2.500Z" fill="#5c2c10"/><path d="M-2.500 6H2.500" stroke="#c07830" stroke-width="1"/><path d="M0 -7.500Q6.500 -7.500 6.500 -1.500Q6.500 2 2.800 5H-2.800Q-6.500 2 -6.500 -1.500Q-6.500 -7.500 0 -7.500Z" fill="url(#gBulb)"/><ellipse cx="-1.800" cy="-3.500" rx="2" ry="2.500" fill="#fffce0" opacity=".9"/></g></svg><svg style="left:1822px;top:146.5px" width="20" height="19" viewBox="0 0 20 19"><path d="M5 9V6Q5 2 9.500 2Q14 2 14 6" fill="none" stroke="#c4c4c4" stroke-width="2.200"/><rect x="7" y="8.500" width="11" height="9.500" rx="1" fill="url(#gGrey)" stroke="#8c8c8c" stroke-width=".7"/><path d="M12.500 16.500V12.500M10.500 14L12.500 11.500L14.500 14" stroke="#111" stroke-width="1.600" fill="none"/></svg><svg style="left:1845px;top:146.5px" width="20" height="19" viewBox="0 0 20 19"><path d="M3 0V19M0 16.500H19" stroke="#111" stroke-width="1" stroke-dasharray="2.500 1.500"/><path d="M5 14L8 7L13 12Z" fill="#111"/><path d="M9 8.500L16 1.500L18.500 4L11.500 11Z" fill="#111"/></svg><svg style="left:1867px;top:146.5px" width="20" height="19" viewBox="0 0 20 19"><g transform="translate(10 9) scale(1.05)"><path d="M-2.500 4.500H2.500V8.500H-2.500Z" fill="#5c2c10"/><path d="M-2.500 6H2.500" stroke="#c07830" stroke-width="1"/><path d="M0 -7.500Q6.500 -7.500 6.500 -1.500Q6.500 2 2.800 5H-2.800Q-6.500 2 -6.500 -1.500Q-6.500 -7.500 0 -7.500Z" fill="url(#gBulb)"/><ellipse cx="-1.800" cy="-3.500" rx="2" ry="2.500" fill="#fffce0" opacity=".9"/></g></svg><svg style="left:1866px;top:407px" width="20" height="19" viewBox="0 0 20 19"><g transform="translate(10 9) scale(1.05)"><path d="M-2.500 4.500H2.500V8.500H-2.500Z" fill="#5c2c10"/><path d="M-2.500 6H2.500" stroke="#c07830" stroke-width="1"/><path d="M0 -7.500Q6.500 -7.500 6.500 -1.500Q6.500 2 2.800 5H-2.800Q-6.500 2 -6.500 -1.500Q-6.500 -7.500 0 -7.500Z" fill="url(#gBulb)"/><ellipse cx="-1.800" cy="-3.500" rx="2" ry="2.500" fill="#fffce0" opacity=".9"/></g></svg><svg style="left:1594px;top:271px" width="22" height="22" viewBox="0 0 22 22"><g transform="scale(.81 .68)"><rect x="0" y="0" width="26" height="31" fill="#6a5c28"/><path d="M0 0H26V12Q20 6 14 8L12 0Z" fill="#c8c070"/><path d="M16 2H26V14H18Z" fill="#d8d088"/><ellipse cx="11.500" cy="10" rx="6.500" ry="8.500" fill="#201808"/><ellipse cx="12" cy="10.500" rx="3.800" ry="5" fill="#f4d888"/><path d="M6 19Q12 15 18 19L21 31H3Z" fill="#2c2008"/><path d="M9 19Q12 22 15 19L14 17H10Z" fill="#e0b070"/><ellipse cx="12" cy="26.500" rx="6" ry="2.400" fill="#d8a868"/></g></svg><svg style="left:1598px;top:403px" width="32" height="28" viewBox="0 0 32 28"><path d="M3 16Q4 4 14 3Q24 3 27 12L22 15Q19 8 13 9Q8 10 8 18Z" fill="url(#gGold)"/><path d="M5 13Q7 6 14 5Q21 5 24 11" fill="none" stroke="#fff0b0" stroke-width="1.300"/><path d="M8 18Q8 10 13 9Q19 8 22 15Q15 12 8 18Z" fill="#7478c8"/><path d="M5 22H13M9 18V26" stroke="#111" stroke-width="1.400"/></svg>
<svg style="left:1582px;top:1021px" width="336" height="34" viewBox="0 0 336 34">
<defs><filter id="embR" x="0" y="0" width="100%" height="100%"><feTurbulence type="fractalNoise" baseFrequency="0.22" numOctaves="2" seed="11" result="n"/><feDiffuseLighting in="n" surfaceScale="1.3" diffuseConstant="1" lighting-color="#e0e0e0"><feDistantLight azimuth="225" elevation="66"/></feDiffuseLighting></filter></defs>
<rect x="0" y="0" width="336" height="32" fill="#dedede"/>
<rect x="119" y="0" width="217" height="32" filter="url(#embR)"/>
<path d="M0 0H58V26Q58 31 53 31H7Q2 31 2 26V0Z" fill="#f0f0f0"/>
<path d="M58.500 0.500H119.500V26Q119.500 30.500 114.500 30.500H63.500Q58.500 30.500 58.500 26Z" fill="#f1f1f1" stroke="#c6c6c6"/>
<rect x="58" y="0" width="278" height="1" fill="#cfcfcf"/>
<rect x="0" y="32" width="336" height="1.500" fill="#a8a8a8"/>
</svg>
<span class="t " style="left:1590.5px;top:1026.86px;font-size:15.4px;line-height:17.71px;color:#1a1a1a;transform:scaleX(0.8870);">Layers</span>
<span class="t " style="left:1651px;top:1027.86px;font-size:15.4px;line-height:17.71px;color:#1a1a1a;transform:scaleX(0.9658);">Add In</span>
</div>
</body></html>
